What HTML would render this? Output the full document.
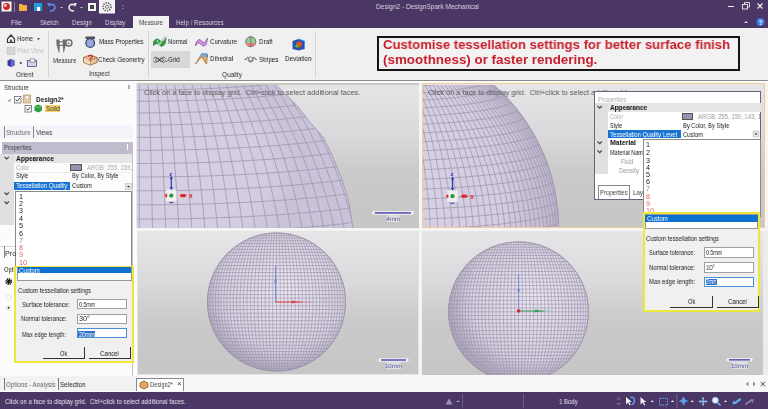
<!DOCTYPE html><html><head><meta charset="utf-8"><style>
*{margin:0;padding:0;box-sizing:border-box}
html,body{width:768px;height:409px;overflow:hidden;background:#f5f5f5;position:relative}
#root{position:absolute;left:0;top:0;width:768px;height:409px;overflow:hidden}
.t{position:absolute;white-space:nowrap;font-family:"Liberation Sans",sans-serif;line-height:1;transform-origin:0 50%;will-change:transform}
.r{position:absolute}
svg{position:absolute;overflow:visible}
</style></head><body><div id="root">
<div class="r" style="left:0px;top:0px;width:768px;height:28.3px;background:#4a3766"></div>
<div class="t" style="left:376px;top:2.67px;font-size:7.4px;color:#ddd8e8;transform:scaleX(0.891);">Design2 - DesignSpark Mechanical</div>
<svg style="left:0px;top:0px" width="130" height="14" viewBox="0 0 130 14"><rect x="1.5" y="1.5" width="10" height="10" fill="#f4f4f4" stroke="#999" stroke-width=".6"/><circle cx="6.5" cy="6.5" r="3.4" fill="#d42020"/><path d="M4 6.5 A2.5 2.5 0 0 1 6.5 4 L6.5 6.5Z" fill="#fff"/><rect x="14" y="2" width="0.8" height="10" fill="#9a8fb0"/><path d="M19 4 h3 l1 1 h4 v6 h-8z" fill="#f0b040"/><rect x="34" y="3" width="8" height="8" fill="#1e9ee0"/><rect x="37" y="7" width="3" height="4" fill="#fff"/><path d="M49 5 q5 -2 6 2 q0 4 -5 4" stroke="#5a8ee8" stroke-width="1.6" fill="none"/><path d="M47 3 l3 0 l-1 4z" fill="#5a8ee8"/><path d="M60 7 l3 0 l-1.5 1.5z" fill="#ccc"/><path d="M75 5 q-5 -2 -6 2 q0 4 5 4" stroke="#e8e8e8" stroke-width="1.6" fill="none"/><path d="M77 3 l-3 0 l1 4z" fill="#e8e8e8"/><path d="M80 7 l3 0 l-1.5 1.5z" fill="#ccc"/><rect x="88" y="3" width="8" height="8" fill="#f4f4f4"/><rect x="90" y="5" width="4" height="4" fill="#444"/><rect x="99" y="0" width="16" height="13.5" fill="#f4f4f4"/><circle cx="107" cy="6.8" r="4" fill="none" stroke="#666" stroke-width="1.6" stroke-dasharray="1.4 1"/><circle cx="107" cy="6.8" r="1.6" fill="none" stroke="#666" stroke-width=".9"/><rect x="122.5" y="5" width="1" height="1" fill="#aaa"/><rect x="122.5" y="8" width="1" height="1" fill="#aaa"/></svg>
<svg style="left:720px;top:0px" width="48" height="30" viewBox="0 0 48 30"><rect x="8" y="6" width="6" height="1" fill="#eee"/><rect x="22.5" y="4.5" width="5" height="4.5" fill="none" stroke="#eee" stroke-width=".9"/><path d="M24.5 4.5 v-2 h5 v4.5 h-2" fill="none" stroke="#eee" stroke-width=".9"/><path d="M37.5 3.5 l5 5 M42.5 3.5 l-5 5" stroke="#eee" stroke-width="1.1"/><path d="M24 23 l2 -2 l2 2z" fill="#ddd"/><circle cx="40.5" cy="22" r="4" fill="#3a7de0"/><text x="40.5" y="24.6" font-size="6.5" fill="#fff" text-anchor="middle" font-family="Liberation Sans" font-weight="bold">?</text></svg>
<div class="r" style="left:133px;top:16px;width:36px;height:12.5px;background:#f2f2f2"></div>
<div class="t" style="left:10.8px;top:18.58px;font-size:7.6px;color:#ddd8e8;transform:scaleX(0.882);">File</div>
<div class="t" style="left:40.2px;top:18.58px;font-size:7.6px;color:#ddd8e8;transform:scaleX(0.801);">Sketch</div>
<div class="t" style="left:71.9px;top:18.58px;font-size:7.6px;color:#ddd8e8;transform:scaleX(0.837);">Design</div>
<div class="t" style="left:104.9px;top:18.58px;font-size:7.6px;color:#ddd8e8;transform:scaleX(0.815);">Display</div>
<div class="t" style="left:138.6px;top:18.58px;font-size:7.6px;color:#444;transform:scaleX(0.812);">Measure</div>
<div class="t" style="left:176.4px;top:18.58px;font-size:7.6px;color:#ddd8e8;transform:scaleX(0.817);">Help / Resources</div>
<div class="r" style="left:0px;top:28.3px;width:768px;height:51.5px;background:#f0f0f0"></div>
<div class="r" style="left:0px;top:79.6px;width:768px;height:1.4px;background:#8c8c8c"></div>
<div class="r" style="left:0px;top:81px;width:768px;height:2px;background:#fafafa"></div>
<div class="r" style="left:47.5px;top:31px;width:1px;height:47px;background:#d4d4d4"></div>
<div class="r" style="left:148.3px;top:31px;width:1px;height:47px;background:#d4d4d4"></div>
<div class="r" style="left:315.4px;top:31px;width:1px;height:47px;background:#d4d4d4"></div>
<div class="r" style="left:151px;top:51px;width:39px;height:16.5px;background:#d8d8d8"></div>
<svg style="left:0px;top:0px" width="320" height="80" viewBox="0 0 320 80"><path d="M7.5 39 l3.5 -4 l3.5 4 v3.5 h-7z" fill="#fff" stroke="#333" stroke-width="1.2"/><rect x="9.8" y="39.5" width="2.4" height="3" fill="#555"/><rect x="7" y="47.5" width="8" height="7" fill="#d8d8d8" stroke="#c0c0c0" stroke-width=".6"/><path d="M7.5 60.5 l3.5 -1.5 l3.5 1.5 v5 l-3.5 1.5 l-3.5 -1.5z" fill="#3c3ca0"/><path d="M11 59 l3.5 1.5 v5 l-3.5 1.5z" fill="#6a6ad0"/><circle cx="20.8" cy="63" r="1" fill="#333"/><rect x="27.5" y="60.5" width="9" height="6" fill="#c8d8e8" stroke="#556" stroke-width=".8"/><rect x="30" y="59" width="5" height="3" fill="#fff" stroke="#556" stroke-width=".6"/><path d="M37 38.3 l3 0 l-1.5 1.6z" fill="#333"/><path d="M56.3 39.6 h3.2 l.2 5.5 l-.2 7.4 l-.7 0 l-2.3 -7.4z" fill="#6e6e6e"/><path d="M62.6 39.6 h3.2 l-.2 5.8 l-1.6 7.1 l-.6 0 l-.6 -7.1z" fill="#6e6e6e"/><rect x="58.5" y="41.8" width="7.5" height="3.6" fill="none" stroke="#6e6e6e" stroke-width="1.1"/><circle cx="68.8" cy="42.9" r="3.1" fill="#f4f4f4" stroke="#6e6e6e" stroke-width="1.5"/><circle cx="68.5" cy="43.2" r=".9" fill="#6e6e6e"/><rect x="85.5" y="36.5" width="9.5" height="2.5" fill="#555"/><circle cx="90.2" cy="43" r="4.3" fill="#9aaae0" stroke="#3a4a78" stroke-width="1.3"/><path d="M83.5 57.5 l6.8 -2.6 l6.8 2.6 v5 l-6.8 2.6 l-6.8 -2.6z" fill="#e6c498" stroke="#8a5a30" stroke-width=".8"/><path d="M83.5 57.5 l6.8 2.6 l6.8 -2.6 M90.3 60.1 v5" stroke="#8a5a30" stroke-width=".7" fill="none"/><path d="M84 57.7 l6.3 2.4 v4.6 l-6.3 -2.4z" fill="#f0d8b8"/><text x="90.3" y="61" font-size="9.5" fill="#c81818" text-anchor="middle" font-family="Liberation Sans" font-weight="bold">?</text><path d="M153.5 41.5 q3 -4.5 6.2 -1.2 q3 3.2 6.4 -2.3 l-.8 5.5 q-3 4.5 -6.2 1.5 q-3 -3 -5.6 .8z" fill="#3a9a4a" stroke="#226a30" stroke-width=".6"/><path d="M157 40 l2.5 5 l3 -6" stroke="#a8e8a8" stroke-width="1.1" fill="none"/><path d="M162.5 39 l3.8 -2.5" stroke="#8090a8" stroke-width=".8"/><path d="M153.5 58.5 q2 -3 4 0 t4 0 t4 0 M153.5 61 q2 3 4 0 t4 0 t4 0" fill="none" stroke="#505050" stroke-width=".9"/><circle cx="157.5" cy="59.8" r="1.8" fill="none" stroke="#505050" stroke-width=".8"/><circle cx="161.5" cy="59.8" r="1.8" fill="none" stroke="#505050" stroke-width=".8"/><path d="M165.5 60.5 l1 1.2 l1 -1.6" stroke="#505050" stroke-width=".8" fill="none"/><path d="M195.5 44 q3 -7 6 -3 q3 4 6 -3 l-1 6 q-3 4 -6 0 q-3 -3 -5 2z" fill="#c890e0" stroke="#8a4aa0" stroke-width=".7"/><path d="M195.5 64 l6 -10 l6 3 v-3 l-1 10 l-5 -7z" fill="#e8a868" stroke="#a06030" stroke-width=".7"/><rect x="201" y="53" width="6" height="4" fill="#70a8d8"/><circle cx="250.8" cy="41.7" r="5" fill="#98d098" stroke="#606060" stroke-width=".9"/><path d="M246 43 h9.6 v2 q-4.8 3 -9.6 0z" fill="#e08080"/><path d="M250.8 36.7 v10" stroke="#606060" stroke-width=".7"/><path d="M244.5 59.5 h1.5 q1.6 -4.5 3.2 0 t3.2 0 t3.2 0 h1.2" fill="none" stroke="#555" stroke-width=".9"/><circle cx="250.6" cy="59.5" r="2.6" fill="none" stroke="#666" stroke-width=".7"/><path d="M292.5 41 l6 -2 l6 2 v8 l-6 1.5 l-6 -1.5z" fill="#2a50b0"/><circle cx="299" cy="44.5" r="3" fill="#e05020"/><circle cx="297" cy="46" r="1.8" fill="#40c040"/><path d="M298.5 39 l6 2 v8" fill="none" stroke="#40a0e0" stroke-width="1"/></svg>
<div class="t" style="left:16.7px;top:35.18px;font-size:7.6px;color:#222;transform:scaleX(0.784);">Home</div>
<div class="t" style="left:16.9px;top:47.08px;font-size:7.6px;color:#c4c4c4;transform:scaleX(0.793);">Plan View</div>
<div class="t" style="left:16.3px;top:70.58px;font-size:7.6px;color:#333;transform:scaleX(0.850);">Orient</div>
<div class="t" style="left:52.7px;top:56.88px;font-size:7.6px;color:#333;transform:scaleX(0.795);">Measure</div>
<div class="t" style="left:98.75px;top:38.48px;font-size:7.6px;color:#222;transform:scaleX(0.810);">Mass Properties</div>
<div class="t" style="left:98.4px;top:55.68px;font-size:7.6px;color:#222;transform:scaleX(0.814);">Check Geometry</div>
<div class="t" style="left:88.6px;top:70.48px;font-size:7.6px;color:#333;transform:scaleX(0.849);">Inspect</div>
<div class="t" style="left:168.3px;top:38.48px;font-size:7.6px;color:#222;transform:scaleX(0.796);">Normal</div>
<div class="t" style="left:168.3px;top:55.68px;font-size:7.6px;color:#222;transform:scaleX(0.815);">Grid</div>
<div class="t" style="left:210px;top:38.48px;font-size:7.6px;color:#222;transform:scaleX(0.812);">Curvature</div>
<div class="t" style="left:210px;top:55.48px;font-size:7.6px;color:#222;transform:scaleX(0.820);">Dihedral</div>
<div class="t" style="left:258.6px;top:38.48px;font-size:7.6px;color:#222;transform:scaleX(0.826);">Draft</div>
<div class="t" style="left:258.6px;top:55.78px;font-size:7.6px;color:#222;transform:scaleX(0.820);">Stripes</div>
<div class="t" style="left:285.3px;top:54.78px;font-size:7.6px;color:#222;transform:scaleX(0.833);">Deviation</div>
<div class="t" style="left:222.2px;top:70.68px;font-size:7.6px;color:#333;transform:scaleX(0.846);">Quality</div>
<div class="r" style="left:377px;top:35.5px;width:363px;height:35.5px;border:2px solid #141414;background:#f2f2f2"></div>
<div class="t" style="left:382.5px;top:37.73px;font-size:13.4px;color:#c8202e;font-weight:bold;transform:scaleX(0.980);">Customise tessellation settings for better surface finish</div>
<div class="t" style="left:382.5px;top:53.23px;font-size:13.4px;color:#c8202e;font-weight:bold;">(smoothness) or faster rendering.</div>
<div class="r" style="left:0px;top:83px;width:137px;height:309px;background:#fcfcfc"></div>
<div class="t" style="left:3.5px;top:84.07px;font-size:7.4px;color:#333;transform:scaleX(0.829);">Structure</div>
<div class="r" style="left:127.5px;top:84.5px;width:2px;height:4px;background:#b0b0b0"></div>
<svg style="left:0px;top:0px" width="137" height="140" viewBox="0 0 137 140"><path d="M7.5 101.5 l3 -3.2 v3.2z" fill="#999"/><rect x="14.5" y="96.5" width="6.5" height="6.5" fill="#fff" stroke="#555" stroke-width=".7"/><path d="M15.8 99.6 l1.5 1.6 l2.6 -3.2" stroke="#222" stroke-width=".9" fill="none"/><rect x="23.5" y="95" width="7" height="8" fill="#e8d0a0" stroke="#a08050" stroke-width=".6"/><circle cx="27" cy="97.5" r="2" fill="#fff" stroke="#888" stroke-width=".5"/><rect x="25" y="105.5" width="6.5" height="6.5" fill="#fff" stroke="#555" stroke-width=".7"/><path d="M26.3 108.6 l1.5 1.6 l2.6 -3.2" stroke="#222" stroke-width=".9" fill="none"/><path d="M34.5 106 l3.7 -1.5 l3.7 1.5 v4.8 l-3.7 1.6 l-3.7 -1.6z" fill="#2aa040"/><path d="M34.5 106 l3.7 1.5 l3.7 -1.5" stroke="#9ae0a0" stroke-width=".6" fill="none"/></svg>
<div class="t" style="left:35.5px;top:95.78px;font-size:8px;color:#222;font-weight:bold;transform:scaleX(0.806);">Design2*</div>
<div class="r" style="left:44.7px;top:104.7px;width:15.6px;height:7.3px;background:#f6d468"></div>
<div class="t" style="left:46px;top:104.77px;font-size:7.2px;color:#333;transform:scaleX(0.849);">Solid</div>
<div class="r" style="left:0px;top:125.3px;width:133px;height:13.4px;background:#f5f4fa"></div>
<div class="r" style="left:3.5px;top:126px;width:1px;height:12px;background:#888"></div>
<div class="r" style="left:32.6px;top:126px;width:1px;height:12px;background:#888"></div>
<div class="t" style="left:6px;top:128.87px;font-size:7.2px;color:#666;transform:scaleX(0.839);">Structure</div>
<div class="t" style="left:35.5px;top:128.87px;font-size:7.2px;color:#333;transform:scaleX(0.854);">Views</div>
<div class="r" style="left:1.5px;top:141.9px;width:131.5px;height:11.7px;background:#c0bcce"></div>
<div class="t" style="left:3.9px;top:144.07px;font-size:7.4px;color:#444;transform:scaleX(0.818);">Properties</div>
<div class="r" style="left:126.5px;top:144px;width:1.5px;height:6px;background:#fff"></div>
<div class="r" style="left:0px;top:153.6px;width:14px;height:71.5px;background:#e0e0e0"></div>
<div class="r" style="left:14px;top:153.6px;width:118.5px;height:9.2px;background:#e6e6e6"></div>
<div class="r" style="left:131.6px;top:141.9px;width:1.2px;height:234px;background:#c4c4c4"></div>
<svg style="left:0px;top:0px" width="137" height="210" viewBox="0 0 137 210"><path d="M4.5 156.8 l2.2 2.2 l2.2 -2.2" stroke="#444" stroke-width="1.1" fill="none"/><path d="M4.5 192.5 l2.2 2.2 l2.2 -2.2" stroke="#444" stroke-width="1.1" fill="none"/><path d="M4.5 201.5 l2.2 2.2 l2.2 -2.2" stroke="#444" stroke-width="1.1" fill="none"/></svg>
<div class="t" style="left:15.9px;top:154.58px;font-size:7.8px;color:#111;font-weight:bold;transform:scaleX(0.853);">Appearance</div>
<div class="t" style="left:15.9px;top:164.17px;font-size:7.2px;color:#aaa;transform:scaleX(0.773);">Color</div>
<div class="r" style="left:70.4px;top:164.2px;width:11.4px;height:7.1px;background:#9a90b0;border:.8px solid #555"></div>
<div class="t" style="left:86.7px;top:164.17px;font-size:7.2px;color:#aaa;transform:scaleX(0.830);">ARGB: 255, 159,</div>
<div class="r" style="left:14px;top:171.8px;width:118.5px;height:0.6px;background:#eee"></div>
<div class="t" style="left:15.9px;top:172.47px;font-size:7.2px;color:#222;transform:scaleX(0.775);">Style</div>
<div class="t" style="left:71.7px;top:172.47px;font-size:7.2px;color:#222;transform:scaleX(0.807);">By Color, By Style</div>
<div class="r" style="left:13.8px;top:181.9px;width:56.1px;height:7.8px;background:#1874d2"></div>
<div class="t" style="left:15.9px;top:182.27px;font-size:7.2px;color:#fff;transform:scaleX(0.829);">Tessellation Quality</div>
<div class="t" style="left:71.7px;top:182.27px;font-size:7.2px;color:#222;transform:scaleX(0.806);">Custom</div>
<svg style="left:0px;top:0px" width="137" height="200" viewBox="0 0 137 200"><rect x="125.5" y="183.5" width="6" height="6" fill="#e4e4e4" stroke="#aaa" stroke-width=".4"/><path d="M127 186 h3 l-1.5 1.5z" fill="#222"/></svg>
<div class="r" style="left:0px;top:245.5px;width:15px;height:0.8px;background:#d8d8d8"></div>
<div class="r" style="left:15px;top:191px;width:117.4px;height:80px;background:#fff;border:.8px solid #8a8a8a"></div>
<div class="t" style="left:18.5px;top:192.87px;font-size:7.2px;color:#222;">1</div>
<div class="t" style="left:18.5px;top:200.07px;font-size:7.2px;color:#222;">2</div>
<div class="t" style="left:18.5px;top:207.47px;font-size:7.2px;color:#222;">3</div>
<div class="t" style="left:18.5px;top:214.97px;font-size:7.2px;color:#222;">4</div>
<div class="t" style="left:18.5px;top:222.17px;font-size:7.2px;color:#222;">5</div>
<div class="t" style="left:18.5px;top:229.57px;font-size:7.2px;color:#222;">6</div>
<div class="t" style="left:18.5px;top:236.67px;font-size:7.2px;color:#888;">7</div>
<div class="t" style="left:18.5px;top:244.07px;font-size:7.2px;color:#e06464;">8</div>
<div class="t" style="left:18.5px;top:251.27px;font-size:7.2px;color:#e06464;">9</div>
<div class="t" style="left:18.5px;top:258.67px;font-size:7.2px;color:#e06464;">10</div>
<div class="r" style="left:3.6px;top:246px;width:1px;height:12px;background:#888"></div>
<div class="t" style="left:5px;top:249.67px;font-size:7.2px;color:#333;">Pro</div>
<div class="t" style="left:3.8px;top:265.77px;font-size:7.2px;color:#222;transform:scaleX(0.818);">Opti</div>
<svg style="left:0px;top:0px" width="20" height="320" viewBox="0 0 20 320"><circle cx="8.8" cy="281.6" r="2.6" fill="none" stroke="#111" stroke-width="1.8" stroke-dasharray="1.2 .8"/><circle cx="8.8" cy="281.6" r="1.8" fill="#111"/><circle cx="8.6" cy="297.3" r="2.3" fill="#fff" stroke="#d0d0d0" stroke-width=".6"/><circle cx="8.6" cy="307.8" r="2.3" fill="#fff" stroke="#d0d0d0" stroke-width=".6"/><circle cx="8.6" cy="307.8" r="1" fill="#333"/></svg>
<div class="r" style="left:14.3px;top:265.8px;width:119.7px;height:97px;border:2.2px solid #ece838;background:#f0f0f0"></div>
<div class="r" style="left:17.2px;top:267px;width:114.5px;height:14.1px;background:#fff;border:.6px solid #999"></div>
<div class="r" style="left:17.6px;top:267.3px;width:113.7px;height:6.2px;background:#1070d0"></div>
<div class="t" style="left:19px;top:266.87px;font-size:7.2px;color:#fff;transform:scaleX(0.847);">Custom</div>
<div class="t" style="left:18.1px;top:287.47px;font-size:7.2px;color:#222;transform:scaleX(0.815);">Custom tessellation settings</div>
<div class="t" style="left:21.9px;top:300.87px;font-size:7.2px;color:#222;transform:scaleX(0.818);">Surface tolerance:</div>
<div class="r" style="left:77.3px;top:299.2px;width:50.2px;height:10.100000000000023px;background:#fff;border:.8px solid #a0a0a0"></div>
<div class="t" style="left:79.2px;top:300.87px;font-size:7.2px;color:#222;transform:scaleX(0.736);">0.5mm</div>
<div class="t" style="left:21px;top:315.37px;font-size:7.2px;color:#222;transform:scaleX(0.806);">Normal tolerance:</div>
<div class="r" style="left:77.3px;top:313.5px;width:50.2px;height:10.5px;background:#fff;border:.8px solid #a0a0a0"></div>
<div class="t" style="left:79.2px;top:315.37px;font-size:7.2px;color:#222;transform:scaleX(0.992);">30&#176;</div>
<div class="t" style="left:21.9px;top:330.57px;font-size:7.2px;color:#222;transform:scaleX(0.795);">Max edge length:</div>
<div class="r" style="left:77.3px;top:327.8px;width:50.2px;height:10.5px;background:#fff;border:.8px solid #4a90d8"></div>
<div class="r" style="left:78.2px;top:331.1px;width:16.8px;height:6px;background:#3070c8"></div>
<div class="t" style="left:79.2px;top:330.57px;font-size:7.2px;color:#fff;transform:scaleX(0.790);">20mm</div>
<div class="r" style="left:43.4px;top:346.8px;width:41.2px;height:12.4px;border-right:1.4px solid #333;border-bottom:1.4px solid #333"></div>
<div class="t" style="left:59.9px;top:349.87px;font-size:7.2px;color:#222;transform:scaleX(0.804);">Ok</div>
<div class="r" style="left:88.5px;top:346.8px;width:42.5px;height:12.4px;border-right:1.4px solid #333;border-bottom:1.4px solid #333"></div>
<div class="t" style="left:99.5px;top:349.87px;font-size:7.2px;color:#222;transform:scaleX(0.839);">Cancel</div>
<div class="r" style="left:0px;top:376.4px;width:137px;height:15px;background:#f2f2f2"></div>
<div class="r" style="left:3.5px;top:378px;width:1px;height:12px;background:#777"></div>
<div class="r" style="left:57.6px;top:378px;width:1px;height:12px;background:#777"></div>
<div class="t" style="left:6.2px;top:380.97px;font-size:7.2px;color:#666;transform:scaleX(0.861);">Options - Analysis</div>
<div class="t" style="left:60.2px;top:380.97px;font-size:7.2px;color:#222;transform:scaleX(0.868);">Selection</div>
<div class="r" style="left:137px;top:83px;width:281.5px;height:145px;background:linear-gradient(#e6e6e8 0%,#dadadc 35%,#cacaca 62%,#c6c6c6 100%)"></div>
<div class="r" style="left:421.5px;top:83px;width:343.5px;height:145px;background:linear-gradient(#e6e6e8 0%,#dadadc 35%,#cacaca 62%,#c6c6c6 100%)"></div>
<div class="r" style="left:137px;top:231px;width:281.5px;height:144px;background:linear-gradient(#e6e6e8 0%,#dadadc 35%,#cacaca 62%,#c6c6c6 100%);border:1px solid #e4e4e4"></div>
<div class="r" style="left:422px;top:231px;width:341.2px;height:144.2px;background:linear-gradient(#e6e6e8 0%,#dadadc 35%,#cacaca 62%,#c6c6c6 100%)"></div>
<div class="r" style="left:763.2px;top:231px;width:4.8px;height:144px;background:#ececec"></div>
<svg style="left:137px;top:83px;overflow:hidden" width="281.5" height="145" viewBox="137 83 281.5 145"><defs><radialGradient id="gtl" cx="20%" cy="60%" r="60%"><stop offset="0" stop-color="#d8d0e2"/><stop offset=".75" stop-color="#d4cce0"/><stop offset="1" stop-color="#cac2d8"/></radialGradient><clipPath id="ctl"><path d="M100 60 L274.4 60 L274.4 83 L296 104.6 L310.3 122.5 L322.9 136.9 L331.9 154.9 L340.8 176.4 L348 198 L353.4 230 L100 240Z"/></clipPath></defs><path d="M100 60 L274.4 60 L274.4 83 L296 104.6 L310.3 122.5 L322.9 136.9 L331.9 154.9 L340.8 176.4 L348 198 L353.4 230 L100 240Z" fill="url(#gtl)"/><g clip-path="url(#ctl)"><path d="M353.1 237.3L367.0 235.5L379.8 233.5L391.4 231.4L401.7 229.3L410.8 227.1L418.6 224.8L425.0 222.4L430.0 220.0 M108.7 233.4L129.1 233.5L149.5 233.5L169.9 233.4L190.1 233.0L210.1 232.5L229.7 231.9L248.9 231.0L267.6 230.0L285.6 228.9L303.0 227.6L319.5 226.1L335.1 224.6L349.8 222.9L363.5 221.1L376.1 219.1L387.5 217.1L397.7 215.0L406.7 212.8L414.3 210.5L420.6 208.2L425.6 205.8L429.1 203.4 M109.3 218.9L129.3 219.1L149.3 219.1L169.3 218.9L189.2 218.6L208.8 218.1L228.1 217.4L247.0 216.6L265.3 215.6L283.0 214.5L300.0 213.2L316.3 211.8L331.6 210.3L346.1 208.6L359.5 206.8L371.8 204.9L383.1 202.9L393.1 200.9L401.9 198.7L409.4 196.5L415.6 194.2L420.4 191.9L423.9 189.5L426.0 187.1L426.7 184.7 M109.9 204.7L129.5 204.8L149.1 204.8L168.7 204.7L188.2 204.3L207.4 203.8L226.3 203.2L244.8 202.4L262.7 201.4L280.1 200.3L296.7 199.1L312.6 197.7L327.7 196.2L341.8 194.6L355.0 192.8L367.1 191.0L378.0 189.0L387.9 187.0L396.5 184.9L403.8 182.7L409.9 180.4L414.7 178.2L418.1 175.8L420.1 173.5L420.8 171.1 M110.6 190.6L129.7 190.8L148.9 190.8L168.0 190.6L187.0 190.3L205.8 189.8L224.3 189.2L242.3 188.4L259.8 187.5L276.8 186.4L293.1 185.2L308.6 183.8L323.3 182.3L337.1 180.8L349.9 179.0L361.8 177.2L372.5 175.3L382.1 173.3L390.5 171.3L397.7 169.1L403.6 167.0L408.3 164.7L411.6 162.5L413.6 160.2L414.3 157.9 M111.3 176.8L130.0 177.0L148.6 177.0L167.3 176.8L185.8 176.5L204.1 176.1L222.1 175.4L239.6 174.7L256.7 173.8L273.2 172.7L289.0 171.5L304.2 170.2L318.5 168.8L331.9 167.2L344.4 165.6L355.9 163.8L366.4 161.9L375.7 160.0L383.9 158.0L390.9 155.9L396.7 153.8L401.2 151.6L404.5 149.4L406.4 147.2L407.1 145.0 M112.1 163.3L130.2 163.5L148.4 163.5L166.5 163.3L184.4 163.0L202.2 162.6L219.6 162.0L236.7 161.2L253.3 160.3L269.3 159.3L284.7 158.2L299.4 156.9L313.3 155.5L326.3 154.0L338.5 152.4L349.6 150.7L359.8 148.9L368.9 147.0L376.8 145.0L383.6 143.0L389.2 141.0L393.6 138.8L396.8 136.7L398.7 134.5L399.3 132.4 M113.0 150.1L130.5 150.3L148.1 150.3L165.6 150.1L183.0 149.8L200.2 149.4L217.0 148.8L233.5 148.1L249.6 147.3L265.1 146.3L280.0 145.2L294.2 143.9L307.6 142.6L320.3 141.1L332.0 139.5L342.8 137.9L352.7 136.1L361.4 134.3L369.1 132.4L375.7 130.5L381.1 128.5L385.4 126.4L388.4 124.4L390.3 122.3L390.9 120.2 M113.9 137.3L130.8 137.4L147.8 137.4L164.7 137.3L181.4 137.0L198.0 136.6L214.3 136.0L230.2 135.3L245.7 134.5L260.6 133.6L275.0 132.5L288.7 131.3L301.6 130.0L313.8 128.6L325.1 127.1L335.6 125.5L345.0 123.8L353.5 122.0L360.9 120.2L367.3 118.3L372.5 116.4L376.6 114.4L379.5 112.5L381.3 110.4L381.9 108.4 M114.9 124.8L131.2 125.0L147.4 125.0L163.7 124.8L179.8 124.6L195.7 124.1L211.3 123.6L226.6 122.9L241.5 122.2L255.8 121.2L269.6 120.2L282.8 119.1L295.3 117.8L307.0 116.5L317.8 115.0L327.9 113.5L337.0 111.9L345.1 110.2L352.2 108.4L358.3 106.6L363.3 104.8L367.3 102.9L370.1 101.0L371.8 99.0L372.4 97.1 M116.0 112.8L131.5 112.9L147.1 112.9L162.6 112.8L178.0 112.5L193.2 112.1L208.2 111.6L222.8 111.0L237.1 110.2L250.8 109.3L264.0 108.3L276.6 107.2L288.5 106.0L299.7 104.7L310.1 103.4L319.7 101.9L328.4 100.4L336.2 98.7L343.0 97.1L348.8 95.3L353.7 93.6L357.4 91.8L360.1 89.9L361.8 88.1L362.3 86.2 M117.1 101.1L131.9 101.2L146.7 101.2L161.5 101.1L176.2 100.9L190.7 100.5L204.9 100.0L218.9 99.4L232.4 98.7L245.5 97.8L258.1 96.9L270.1 95.9L281.4 94.7L292.1 93.5L302.0 92.2L311.1 90.8L319.4 89.3L326.8 87.8L333.3 86.2L338.9 84.5L343.5 82.8L347.1 81.1L349.6 79.4L351.2 77.6L351.7 75.8 M118.3 89.9L132.3 90.1L146.3 90.1L160.3 89.9L174.3 89.7L188.0 89.4L201.5 88.9L214.7 88.3L227.6 87.6L240.0 86.8L251.9 86.0L263.3 85.0L274.0 83.9L284.1 82.7L293.5 81.5L302.2 80.1L310.0 78.7L317.1 77.3L323.2 75.8L328.5 74.2 M119.5 79.2L132.7 79.4L145.9 79.4L159.1 79.2L172.3 79.0L185.2 78.7L197.9 78.3L210.4 77.7L222.5 77.1L234.2 76.3L245.4 75.5L256.1 74.6 M128.8 121.6L129.5 104.4L130.3 88.1L131.0 72.8 M139.3 240.2L139.3 219.1L139.3 198.4L139.3 178.3L139.3 158.7L139.3 139.8L139.3 121.6L139.3 104.4L139.3 88.1L139.3 72.8 M152.7 240.2L152.3 219.1L151.9 198.4L151.5 178.2L151.0 158.6L150.4 139.7L149.8 121.6L149.1 104.4L148.3 88.1L147.6 72.8 M166.0 240.0L165.4 219.0L164.6 198.3L163.6 178.1L162.6 158.5L161.4 139.6L160.2 121.5L158.8 104.3L157.4 88.0L155.8 72.7 M179.3 239.9L178.3 218.8L177.1 198.1L175.7 178.0L174.2 158.4L172.5 139.5L170.6 121.4L168.5 104.1L166.3 87.9L164.0 72.6 M192.5 239.6L191.2 218.6L189.6 197.9L187.8 177.7L185.7 158.2L183.4 139.3L180.9 121.2L178.2 104.0L175.3 87.7L172.2 72.5 M205.6 239.3L204.0 218.2L202.0 197.6L199.7 177.4L197.1 157.9L194.3 139.0L191.1 120.9L187.7 103.7L184.1 87.5L180.3 72.3 M218.6 238.9L216.6 217.8L214.2 197.2L211.5 177.1L208.4 157.5L205.0 138.7L201.3 120.6L197.2 103.4L192.9 87.2L188.3 72.0 M231.4 238.4L229.1 217.4L226.3 196.8L223.2 176.6L219.6 157.1L215.6 138.3L211.3 120.3L206.6 103.1L201.5 86.9L196.2 71.7 M244.0 237.9L241.4 216.9L238.2 196.3L234.6 176.2L230.6 156.7L226.0 137.9L221.1 119.8L215.8 102.7L210.1 86.5L204.0 71.4 M256.4 237.3L253.5 216.3L250.0 195.7L245.9 175.6L241.4 156.1L236.3 137.4L230.8 119.4L224.8 102.3L218.4 86.1L211.7 71.0 M268.5 236.6L265.3 215.6L261.4 195.1L257.0 175.0L252.0 155.5L246.4 136.8L240.3 118.8L233.7 101.8L226.7 85.7L219.2 70.6 M283.3 257.2L280.4 235.9L276.9 214.9L272.7 194.4L267.8 174.3L262.3 154.9L256.2 136.2L249.6 118.3L242.4 101.2L234.7 85.2L226.5 70.2 M295.1 256.3L292.0 235.1L288.2 214.1L283.6 193.6L278.4 173.6L272.4 154.2L265.8 135.5L258.6 117.7L250.9 100.7L242.5 84.6L233.7 69.7 M306.6 255.5L303.3 234.2L299.2 213.3L294.3 192.8L288.6 172.8L282.3 153.5L275.2 134.8L267.5 117.0L259.1 100.0L250.1 84.1L240.7 69.1 M317.8 254.5L314.3 233.3L309.9 212.4L304.6 191.9L298.6 172.0L291.8 152.7L284.3 134.1L276.0 116.3L267.1 99.4L257.5 83.4L247.4 68.6 M328.6 253.5L324.8 232.3L320.2 211.4L314.6 191.0L308.3 171.1L301.0 151.8L293.0 133.2L284.3 115.5L274.8 98.6L264.7 82.8L254.0 68.0 M339.0 252.5L335.0 231.3L330.1 210.4L324.3 190.0L317.5 170.1L309.9 150.9L301.5 132.4L292.3 114.7L282.3 97.9L271.6 82.1L260.3 67.3 M349.0 251.4L344.8 230.2L339.7 209.4L333.5 189.0L326.5 169.2L318.5 150.0L309.6 131.5L299.9 113.8L289.4 97.1L278.2 81.3L266.3 66.6 M358.6 250.2L354.2 229.1L348.8 208.3L342.4 187.9L335.0 168.1L326.6 149.0L317.4 130.5L307.2 112.9L296.3 96.3L284.6 80.6L272.1 65.9 M367.7 249.0L363.2 227.9L357.5 207.1L350.9 186.8L343.1 167.0L334.4 147.9L324.8 129.5L314.2 112.0L302.8 95.4L290.6 79.8L277.6 65.2 M376.3 247.7L371.6 226.6L365.8 205.9L358.9 185.6L350.9 165.9L341.8 146.8L331.8 128.5L320.8 111.0L309.0 94.5L296.3 78.9L282.9 64.4 M384.5 246.4L379.6 225.3L373.6 204.6L366.4 184.4L358.1 164.7L348.8 145.7L338.4 127.5L327.1 110.0L314.8 93.5L301.7 78.1L287.8 63.6 M392.1 245.0L387.1 224.0L380.9 203.3L373.5 183.2L365.0 163.5L355.3 144.6L344.6 126.4L332.9 109.0L320.3 92.6L306.8 77.2L292.5 62.8 M399.3 243.7L394.1 222.6L387.7 202.0L380.1 181.9L371.3 162.3L361.4 143.4L350.4 125.2L338.4 107.9L325.4 91.6L311.5 76.2L296.8 62.0 M405.9 242.2L400.6 221.2L394.0 200.6L386.2 180.5L377.2 161.0L367.1 142.2L355.8 124.1L343.5 106.8L330.1 90.6L315.9 75.3L300.8 61.1 M411.9 240.8L406.5 219.8L399.8 199.2L391.8 179.2L382.6 159.7L372.2 140.9L360.7 122.9L348.1 105.7L334.5 89.5L319.9 74.3 M417.4 239.3L411.9 218.3L405.0 197.8L396.9 177.8L387.5 158.4L376.9 139.6L365.2 121.7L352.3 104.6L338.4 88.4L323.5 73.3 M422.3 237.7L416.7 216.8L409.7 196.4L401.5 176.4L391.9 157.0L381.1 138.3L369.1 120.4L356.1 103.4L341.9 87.3L326.8 72.3 M426.6 236.2L420.9 215.3L413.9 194.9L405.5 174.9L395.8 155.6L384.8 137.0L372.7 119.2L359.4 102.2L345.0 86.2L329.7 71.3 M430.4 234.6L424.6 213.8L417.4 193.4L408.9 173.5L399.1 154.2L388.0 135.7L375.7 117.9L362.2 101.0L347.7 85.1L332.1 70.2 M427.7 212.2L420.4 191.9L411.8 172.0L401.9 152.8L390.7 134.3L378.2 116.6L364.6 99.8L349.9 84.0L334.2 69.2 M430.2 210.7L422.9 190.3L414.2 170.5L404.2 151.4L392.9 132.9L380.3 115.3L366.6 98.6L351.8 82.8L335.9 68.1 M432.1 209.1L424.7 188.8L416.0 169.0L405.9 149.9L394.5 131.5L381.9 114.0L368.1 97.3L353.1 81.7L337.2 67.1 M433.3 207.5L426.0 187.2L417.2 167.5L407.0 148.5L395.6 130.2L382.9 112.7L369.1 96.1L354.1 80.5L338.0 66.0 M426.6 185.7L417.8 166.0L407.7 147.0L396.2 128.8L383.5 111.3L369.6 94.8L354.6 79.3L338.5 64.9 M426.7 184.1L417.9 164.5L407.7 145.6L396.3 127.4L383.5 110.0L369.6 93.6L354.6 78.2L338.5 63.8" stroke="#a098b0" stroke-width="0.8" fill="none"/></g><path d="M100 60 L274.4 60 L274.4 83 L296 104.6 L310.3 122.5 L322.9 136.9 L331.9 154.9 L340.8 176.4 L348 198 L353.4 230 L100 240Z" fill="none" stroke="#a89cb8" stroke-width="1.0"/></svg>
<svg style="left:423px;top:84.5px;overflow:hidden" width="341" height="142.5" viewBox="423 84.5 341 142.5"><defs><radialGradient id="gtr" cx="40%" cy="45%" r="60%"><stop offset="0" stop-color="#dcd4e6"/><stop offset=".75" stop-color="#d4cce0"/><stop offset="1" stop-color="#bcb4ca"/></radialGradient><clipPath id="ctr"><circle cx="368" cy="228" r="191.2"/></clipPath></defs><circle cx="368" cy="228" r="191.2" fill="url(#gtr)"/><g clip-path="url(#ctr)"><path d="M550.5 235.7L555.7 234.1L560.0 232.5L563.4 230.9L565.8 229.3L567.3 227.6L567.7 226.0 M479.3 235.7L490.5 234.7L501.1 233.6L511.1 232.5L520.4 231.2L529.0 229.9L536.7 228.6L543.7 227.1L549.8 225.6L555.0 224.1L559.3 222.5L562.6 220.9L565.0 219.2L566.5 217.6L567.0 215.9 M402.3 229.3L415.8 228.9L429.1 228.5L442.1 227.9L454.7 227.2L466.8 226.5L478.6 225.6L489.7 224.6L500.3 223.6L510.2 222.4L519.4 221.2L527.9 219.9L535.7 218.5L542.6 217.1L548.6 215.6L553.8 214.1L558.0 212.5L561.4 210.9L563.8 209.3L565.2 207.6L565.7 206.0 M402.0 219.2L415.4 218.8L428.5 218.4L441.4 217.8L453.9 217.2L466.0 216.4L477.6 215.5L488.6 214.6L499.1 213.5L508.9 212.4L518.1 211.1L526.5 209.9L534.1 208.5L541.0 207.1L547.0 205.6L552.1 204.1L556.3 202.5L559.6 200.9L562.0 199.3L563.4 197.7L563.9 196.1 M414.8 208.8L427.8 208.3L440.5 207.8L452.9 207.1L464.8 206.4L476.3 205.5L487.2 204.6L497.6 203.5L507.3 202.4L516.3 201.2L524.6 199.9L532.2 198.6L539.0 197.2L544.9 195.7L550.0 194.2L554.1 192.7L557.4 191.1L559.7 189.5L561.2 187.9L561.6 186.3 M414.2 198.8L427.0 198.4L439.5 197.8L451.7 197.2L463.4 196.4L474.7 195.6L485.5 194.6L495.7 193.6L505.3 192.5L514.2 191.3L522.4 190.1L529.8 188.7L536.5 187.3L542.3 185.9L547.3 184.4L551.5 182.9L554.7 181.4L557.0 179.8L558.4 178.2L558.8 176.6 M413.4 188.9L426.0 188.5L438.3 187.9L450.2 187.3L461.8 186.6L472.9 185.7L483.5 184.8L493.5 183.8L502.9 182.7L511.7 181.5L519.8 180.3L527.1 179.0L533.6 177.7L539.4 176.2L544.3 174.8L548.3 173.3L551.5 171.8L553.8 170.2L555.1 168.7L555.6 167.1 M412.5 179.1L424.8 178.7L436.9 178.2L448.6 177.6L459.9 176.8L470.8 176.0L481.2 175.1L491.0 174.1L500.2 173.1L508.8 171.9L516.7 170.7L523.9 169.4L530.3 168.1L535.9 166.7L540.7 165.3L544.7 163.8L547.8 162.4L550.0 160.8L551.4 159.3L551.8 157.8 M411.5 169.5L423.5 169.1L435.3 168.6L446.7 168.0L457.8 167.3L468.4 166.5L478.6 165.6L488.2 164.6L497.2 163.6L505.6 162.5L513.3 161.3L520.3 160.0L526.6 158.7L532.1 157.4L536.8 156.0L540.6 154.6L543.7 153.1L545.9 151.6L547.2 150.1L547.6 148.6 M410.3 160.1L422.1 159.7L433.5 159.2L444.7 158.6L455.5 157.9L465.8 157.1L475.7 156.2L485.0 155.3L493.8 154.3L502.0 153.2L509.5 152.0L516.3 150.8L522.4 149.6L527.8 148.3L532.4 146.9L536.1 145.5L539.1 144.1L541.2 142.6L542.5 141.2L542.9 139.7 M409.1 150.8L420.5 150.4L431.6 149.9L442.4 149.3L452.9 148.7L462.9 147.9L472.5 147.1L481.6 146.2L490.1 145.2L498.1 144.1L505.4 143.0L512.0 141.8L517.9 140.6L523.1 139.3L527.6 138.0L531.2 136.7L534.1 135.3L536.1 133.9L537.4 132.5L537.8 131.1 M407.7 141.8L418.7 141.4L429.5 140.9L440.0 140.3L450.1 139.7L459.8 139.0L469.1 138.2L477.9 137.3L486.1 136.3L493.8 135.3L500.9 134.2L507.3 133.1L513.0 131.9L518.0 130.7L522.3 129.4L525.9 128.1L528.6 126.8L530.6 125.4L531.8 124.0L532.2 122.7 M406.3 133.0L416.9 132.6L427.3 132.1L437.4 131.6L447.1 131.0L456.5 130.3L465.4 129.5L473.9 128.7L481.8 127.7L489.2 126.8L496.0 125.7L502.2 124.6L507.7 123.5L512.6 122.3L516.7 121.1L520.1 119.8L522.8 118.5L524.7 117.2L525.9 115.9L526.2 114.6 M414.9 124.1L424.9 123.6L434.6 123.1L443.9 122.5L452.9 121.9L461.5 121.1L469.6 120.3L477.2 119.4L484.3 118.5L490.9 117.5L496.8 116.4L502.1 115.3L506.7 114.2L510.7 113.0L514.0 111.8L516.5 110.6L518.4 109.3L519.5 108.0L519.9 106.8 M412.8 115.8L422.3 115.4L431.6 114.9L440.5 114.4L449.1 113.7L457.3 113.0L465.1 112.2L472.4 111.4L479.1 110.5L485.4 109.5L491.0 108.5L496.1 107.5L500.5 106.4L504.3 105.3L507.5 104.1L509.9 102.9L511.7 101.7L512.7 100.5L513.1 99.3 M410.6 107.9L419.7 107.5L428.5 107.0L437.0 106.5L445.1 105.9L452.9 105.2L460.3 104.5L467.2 103.7L473.7 102.8L479.6 101.9L485.0 101.0L489.8 100.0L494.0 98.9L497.6 97.9L500.6 96.8L502.9 95.6L504.6 94.5L505.6 93.4L505.9 92.2 M408.3 100.3L416.9 99.9L425.2 99.5L433.2 99.0L440.9 98.4L448.3 97.8L455.3 97.1L461.8 96.3L467.9 95.5L473.5 94.6L478.6 93.7L483.2 92.8L487.1 91.8L490.6 90.8L493.4 89.8L495.6 88.7L497.2 87.6L498.1 86.6L498.4 85.5 M413.9 92.7L421.7 92.3L429.3 91.8L436.5 91.3L443.5 90.7L450.0 90.0L456.2 89.3L461.9 88.5L467.2 87.7L472.0 86.9L476.2 86.0L480.0 85.1L483.2 84.1L485.8 83.2L487.9 82.2L489.4 81.1L490.3 80.1L490.6 79.1 M410.9 85.9L418.2 85.5L425.2 85.0L432.0 84.5L438.4 83.9L444.6 83.3L450.3 82.7L455.7 82.0L460.6 81.2L465.0 80.4L469.0 79.6L472.5 78.7L475.5 77.8L478.0 76.9L479.9 76.0 M414.5 79.0L421.0 78.6L427.3 78.1L433.3 77.6L438.9 77.0L444.2 76.4 M423.2 238.1L422.6 224.2L421.8 210.3L420.7 196.5L419.4 182.9L417.8 169.6L416.0 156.6L414.0 144.0 M430.8 237.8L430.2 223.9L429.3 210.0L428.0 196.2L426.5 182.7L424.7 169.4L422.7 156.4L420.3 143.8L417.7 131.7L414.9 120.0 M438.3 237.5L437.6 223.6L436.6 209.7L435.2 195.9L433.5 182.4L431.5 169.1L429.2 156.1L426.6 143.5L423.7 131.4L420.5 119.8L417.1 108.7L413.4 98.3 M445.7 237.2L445.0 223.2L443.8 209.3L442.3 195.6L440.5 182.1L438.2 168.8L435.7 155.8L432.8 143.2L429.6 131.1L426.1 119.5L422.3 108.5L418.2 98.1L413.9 88.3 M453.0 236.8L452.2 222.8L450.9 209.0L449.3 195.2L447.2 181.7L444.8 168.4L442.0 155.5L438.9 142.9L435.4 130.8L431.5 119.2L427.4 108.2L422.9 97.8L418.2 88.1L413.3 79.1 M460.2 236.3L459.3 222.4L457.9 208.6L456.1 194.8L453.9 181.3L451.3 168.0L448.2 155.1L444.8 142.6L441.0 130.5L436.9 118.9L432.4 107.9L427.6 97.5L422.5 87.8L417.1 78.9L411.5 70.6 M467.2 235.9L466.2 222.0L464.7 208.1L462.8 194.4L460.4 180.9L457.6 167.6L454.3 154.7L450.7 142.2L446.6 130.1L442.1 118.6L437.3 107.6L432.1 97.2L426.6 87.6L420.8 78.6L414.8 70.4 M474.0 235.4L473.0 221.5L471.4 207.6L469.4 193.9L466.8 180.4L463.8 167.2L460.3 154.3L456.4 141.8L452.0 129.7L447.2 118.2L442.0 107.2L436.5 96.9L430.6 87.3L424.5 78.3L418.0 70.2 M481.2 248.8L480.7 234.9L479.6 221.0L477.9 207.1L475.7 193.4L473.0 179.9L469.8 166.7L466.1 153.8L461.9 141.3L457.3 129.3L452.2 117.8L446.7 106.9L440.8 96.6L434.6 87.0L428.0 78.1L421.2 69.9 M487.7 248.2L487.1 234.3L486.0 220.4L484.2 206.6L481.9 192.9L479.1 179.4L475.7 166.2L471.8 153.3L467.3 140.9L462.4 128.9L457.0 117.4L451.2 106.5L445.0 96.2L438.4 86.6L431.5 77.8L424.2 69.7 M494.1 247.6L493.4 233.7L492.2 219.8L490.4 206.0L488.0 192.3L485.0 178.8L481.4 165.7L477.2 152.8L472.6 140.4L467.4 128.4L461.7 116.9L455.6 106.1L449.1 95.8L442.1 86.3L434.8 77.5L427.2 69.4 M500.2 247.0L499.5 233.1L498.3 219.2L496.3 205.4L493.8 191.7L490.6 178.3L486.9 165.1L482.5 152.3L477.7 139.9L472.2 127.9L466.3 116.5L459.9 105.6L453.0 95.4L445.7 85.9L438.1 77.1L430.1 69.1 M506.1 246.4L505.4 232.5L504.1 218.6L502.1 204.8L499.4 191.1L496.1 177.7L492.2 164.5L487.7 151.7L482.6 139.3L476.9 127.4L470.7 116.0L464.0 105.2L456.8 95.0L449.2 85.5L441.2 76.8L432.9 68.8 M511.8 245.7L511.1 231.8L509.7 217.9L507.6 204.1L504.8 190.5L501.4 177.0L497.3 163.9L492.6 151.1L487.3 138.8L481.4 126.9L474.9 115.5L467.9 104.7L460.5 94.6L452.6 85.1L444.2 76.4 M517.2 245.0L516.5 231.1L515.1 217.2L512.9 203.4L510.0 189.8L506.5 176.4L502.2 163.3L497.3 150.5L491.8 138.2L485.7 126.3L479.0 115.0L471.7 104.2L464.0 94.1L455.8 84.7L447.1 76.1 M522.5 244.3L521.7 230.4L520.2 216.5L518.0 202.7L515.0 189.1L511.3 175.7L506.9 162.6L501.8 149.9L496.1 137.6L489.8 125.7L482.9 114.4L475.4 103.7L467.3 93.7L458.8 84.3L449.9 75.7 M527.4 243.5L526.6 229.6L525.1 215.7L522.8 202.0L519.7 188.4L515.9 175.0L511.4 161.9L506.1 149.2L500.2 136.9L493.7 125.1L486.5 113.9L478.8 103.2L470.5 93.2L461.8 83.8L452.5 75.3 M532.1 242.7L531.3 228.8L529.7 215.0L527.4 201.2L524.2 187.6L520.3 174.3L515.6 161.2L510.2 148.6L504.2 136.3L497.4 124.5L490.0 113.3L482.1 102.7L473.6 92.7L464.5 83.4L455.0 74.9 M536.6 241.9L535.8 228.0L534.1 214.2L531.7 200.4L528.4 186.9L524.4 173.5L519.6 160.5L514.1 147.9L507.8 135.6L500.9 123.9L493.4 112.7L485.2 102.1L476.4 92.2L467.1 82.9L457.4 74.4 M540.7 241.1L539.9 227.2L538.2 213.4L535.7 199.6L532.4 186.1L528.3 172.8L523.4 159.8L517.7 147.1L511.3 135.0L504.2 123.2L496.5 112.1L488.1 101.5L479.1 91.6L469.6 82.4L459.6 74.0 M544.6 240.3L543.8 226.4L542.1 212.6L539.5 198.8L536.1 185.3L531.9 172.0L526.9 159.0L521.1 146.4L514.5 134.3L507.3 122.6L499.4 111.5L490.8 100.9L481.6 91.1L471.9 81.9L461.7 73.5 M548.3 239.4L547.4 225.5L545.6 211.7L543.0 198.0L539.5 184.5L535.2 171.2L530.1 158.3L524.2 145.7L517.5 133.5L510.1 121.9L502.0 110.8L493.3 100.4L483.9 90.5L474.0 81.4L463.6 73.1 M551.6 238.5L550.7 224.7L548.9 210.8L546.2 197.2L542.7 183.6L538.3 170.4L533.1 157.5L527.1 144.9L520.3 132.8L512.7 121.2L504.5 110.2L495.6 99.7L486.1 90.0L476.0 80.9L465.3 72.6 M554.6 237.6L553.7 223.8L551.9 210.0L549.2 196.3L545.6 182.8L541.1 169.6L535.8 156.7L529.7 144.1L522.8 132.1L515.1 120.5L506.8 109.5L497.7 99.1L488.0 89.4L477.7 80.4L466.9 72.2 M557.3 236.7L556.4 222.9L554.6 209.1L551.8 195.4L548.2 181.9L543.6 168.7L538.3 155.9L532.1 143.4L525.1 131.3L517.3 119.8L508.8 108.8L499.6 98.5L489.8 88.8L479.4 79.9L468.4 71.7 M559.7 235.8L558.8 222.0L556.9 208.2L554.2 194.5L550.5 181.1L545.9 167.9L540.4 155.0L534.2 142.6L527.1 130.6L519.2 119.1L510.6 108.2L501.3 97.9L491.3 88.2L480.8 79.3L469.7 71.2 M561.9 248.8L561.9 234.9L560.9 221.0L559.0 207.3L556.2 193.6L552.5 180.2L547.8 167.0L542.3 154.2L536.0 141.8L528.8 129.8L520.9 118.3L512.2 107.5L502.7 97.2L492.7 87.6L482.0 78.8L470.8 70.7 M563.7 247.8L563.7 234.0L562.7 220.1L560.8 206.3L558.0 192.7L554.2 179.3L549.5 166.2L544.0 153.4L537.5 141.0L530.3 129.0L522.3 117.6L513.5 106.8L504.0 96.6L493.8 87.0L483.1 78.2L471.7 70.2 M565.1 246.9L565.1 233.0L564.2 219.2L562.3 205.4L559.4 191.8L555.6 178.4L550.9 165.3L545.3 152.5L538.8 140.1L531.5 128.2L523.4 116.9L514.6 106.1L505.0 95.9L494.8 86.4L483.9 77.7L472.5 69.7 M566.3 245.9L566.3 232.1L565.3 218.2L563.4 204.5L560.5 190.9L556.7 177.5L552.0 164.4L546.3 151.7L539.8 139.3L532.5 127.5L524.4 116.1L515.5 105.4L505.8 95.3L495.5 85.8L484.6 77.1L473.1 69.2 M567.1 245.0L567.1 231.1L566.2 217.3L564.2 203.5L561.3 189.9L557.5 176.6L552.8 163.5L547.1 150.8L540.6 138.5L533.2 126.7L525.0 115.4L516.1 104.7L506.4 94.6L496.1 85.2L485.1 76.6L473.6 68.7 M567.7 244.0L567.7 230.2L566.7 216.3L564.8 202.6L561.9 189.0L558.0 175.7L553.2 162.6L547.6 149.9L541.0 137.7L533.6 125.9L525.4 114.6L516.5 103.9L506.8 93.9L496.4 84.6L485.4 76.0 M567.9 243.1L567.9 229.2L566.9 215.4L565.0 201.6L562.1 188.1L558.2 174.8L553.4 161.7L547.8 149.1L541.2 136.8L533.8 125.1L525.6 113.9L516.6 103.2L506.9 93.3L496.6 84.0L485.6 75.4 M561.9 187.2L558.1 173.8L553.3 160.8L547.6 148.2L541.1 136.0L533.7 124.3L525.5 113.1L516.5 102.5L506.8 92.6L496.5 83.4L485.5 74.9" stroke="#9c94ac" stroke-width="0.7" fill="none"/></g><circle cx="368" cy="228" r="190.7" fill="none" stroke="#a89cb8" stroke-width="1.0"/></svg>
<div class="r" style="left:421.5px;top:83px;width:343.5px;height:145px;border:1.7px solid #f2cc94"></div>
<div class="r" style="left:137px;top:83.2px;width:281.5px;height:1.4px;background:#cacac4"></div>
<div class="r" style="left:136.2px;top:83.2px;width:1px;height:145px;background:#e8e8e8"></div>
<svg style="left:138px;top:232px;overflow:hidden" width="280" height="142" viewBox="138 232 280 142"><defs><radialGradient id="gbl" cx="55%" cy="40%" r="60%"><stop offset="0" stop-color="#ebe6f0"/><stop offset=".75" stop-color="#d8d2e2"/><stop offset="1" stop-color="#b4acc0"/></radialGradient><clipPath id="cbl"><circle cx="276.5" cy="302" r="69.5"/></clipPath></defs><circle cx="276.5" cy="302" r="69.5" fill="url(#gbl)"/><g clip-path="url(#cbl)"><path d="M237.5 380.9L237.6 380.9L237.9 380.9L238.4 380.9L239.0 380.9L239.9 380.9L240.9 380.9L242.1 380.9L243.4 380.9L245.0 380.9L246.6 380.9L248.5 380.9L250.4 380.9L252.5 380.9L254.7 380.9L257.0 380.9L259.4 380.9L261.9 380.9L264.5 380.9L267.1 380.9L269.7 380.9L272.4 380.9L275.1 380.9L277.9 380.9L280.6 380.9L283.3 380.9L285.9 380.9L288.5 380.9L291.1 380.9L293.6 380.9L296.0 380.9L298.3 380.9L300.5 380.9L302.6 380.9L304.5 380.9L306.4 380.9L308.0 380.9L309.6 380.9L310.9 380.9L312.1 380.9L313.1 380.9L314.0 380.9L314.6 380.9L315.1 380.9L315.4 380.9L315.5 380.9 M234.2 379.2L234.3 379.2L234.6 379.2L235.1 379.2L235.8 379.2L236.7 379.2L237.8 379.2L239.1 379.2L240.6 379.2L242.3 379.2L244.1 379.2L246.1 379.2L248.2 379.2L250.4 379.2L252.8 379.2L255.3 379.2L257.9 379.2L260.6 379.2L263.4 379.2L266.3 379.2L269.1 379.2L272.1 379.2L275.0 379.2L278.0 379.2L280.9 379.2L283.9 379.2L286.7 379.2L289.6 379.2L292.4 379.2L295.1 379.2L297.7 379.2L300.2 379.2L302.6 379.2L304.8 379.2L306.9 379.2L308.9 379.2L310.7 379.2L312.4 379.2L313.9 379.2L315.2 379.2L316.3 379.2L317.2 379.2L317.9 379.2L318.4 379.2L318.7 379.2L318.8 379.2 M230.9 377.3L231.0 377.3L231.4 377.3L231.9 377.3L232.7 377.3L233.7 377.3L234.9 377.3L236.2 377.3L237.8 377.3L239.6 377.3L241.6 377.3L243.7 377.3L246.0 377.3L248.4 377.3L251.0 377.3L253.7 377.3L256.5 377.3L259.4 377.3L262.4 377.3L265.5 377.3L268.6 377.3L271.7 377.3L274.9 377.3L278.1 377.3L281.3 377.3L284.4 377.3L287.5 377.3L290.6 377.3L293.6 377.3L296.5 377.3L299.3 377.3L302.0 377.3L304.6 377.3L307.0 377.3L309.3 377.3L311.4 377.3L313.4 377.3L315.2 377.3L316.8 377.3L318.1 377.3L319.3 377.3L320.3 377.3L321.1 377.3L321.6 377.3L322.0 377.3L322.1 377.3 M227.7 375.3L227.9 375.3L228.2 375.3L228.8 375.3L229.6 375.3L230.7 375.3L232.0 375.3L233.4 375.3L235.1 375.3L237.1 375.3L239.1 375.3L241.4 375.3L243.9 375.3L246.5 375.3L249.2 375.3L252.1 375.3L255.1 375.3L258.2 375.3L261.4 375.3L264.7 375.3L268.0 375.3L271.4 375.3L274.8 375.3L278.2 375.3L281.6 375.3L285.0 375.3L288.3 375.3L291.6 375.3L294.8 375.3L297.9 375.3L300.9 375.3L303.8 375.3L306.5 375.3L309.1 375.3L311.6 375.3L313.9 375.3L315.9 375.3L317.9 375.3L319.6 375.3L321.0 375.3L322.3 375.3L323.4 375.3L324.2 375.3L324.8 375.3L325.1 375.3L325.3 375.3 M224.7 373.1L224.8 373.1L225.2 373.1L225.8 373.1L226.7 373.1L227.8 373.1L229.1 373.1L230.7 373.1L232.5 373.1L234.6 373.1L236.8 373.1L239.2 373.1L241.8 373.1L244.6 373.1L247.5 373.1L250.6 373.1L253.8 373.1L257.1 373.1L260.5 373.1L264.0 373.1L267.5 373.1L271.1 373.1L274.7 373.1L278.3 373.1L281.9 373.1L285.5 373.1L289.0 373.1L292.5 373.1L295.9 373.1L299.2 373.1L302.4 373.1L305.5 373.1L308.4 373.1L311.2 373.1L313.8 373.1L316.2 373.1L318.4 373.1L320.5 373.1L322.3 373.1L323.9 373.1L325.2 373.1L326.3 373.1L327.2 373.1L327.8 373.1L328.2 373.1L328.3 373.1 M221.7 370.8L221.8 370.8L222.2 370.8L222.9 370.8L223.8 370.8L225.0 370.8L226.4 370.8L228.1 370.8L230.0 370.8L232.1 370.8L234.5 370.8L237.1 370.8L239.8 370.8L242.7 370.8L245.8 370.8L249.1 370.8L252.5 370.8L256.0 370.8L259.6 370.8L263.2 370.8L267.0 370.8L270.8 370.8L274.6 370.8L278.4 370.8L282.2 370.8L286.0 370.8L289.8 370.8L293.4 370.8L297.0 370.8L300.5 370.8L303.9 370.8L307.2 370.8L310.3 370.8L313.2 370.8L315.9 370.8L318.5 370.8L320.9 370.8L323.0 370.8L324.9 370.8L326.6 370.8L328.0 370.8L329.2 370.8L330.1 370.8L330.8 370.8L331.2 370.8L331.3 370.8 M218.8 368.4L218.9 368.4L219.3 368.4L220.0 368.4L221.0 368.4L222.2 368.4L223.8 368.4L225.5 368.4L227.5 368.4L229.8 368.4L232.3 368.4L235.0 368.4L237.9 368.4L241.0 368.4L244.2 368.4L247.6 368.4L251.2 368.4L254.9 368.4L258.7 368.4L262.5 368.4L266.5 368.4L270.5 368.4L274.5 368.4L278.5 368.4L282.5 368.4L286.5 368.4L290.5 368.4L294.3 368.4L298.1 368.4L301.8 368.4L305.4 368.4L308.8 368.4L312.0 368.4L315.1 368.4L318.0 368.4L320.7 368.4L323.2 368.4L325.5 368.4L327.5 368.4L329.2 368.4L330.8 368.4L332.0 368.4L333.0 368.4L333.7 368.4L334.1 368.4L334.2 368.4 M216.0 365.9L216.1 365.9L216.6 365.9L217.3 365.9L218.3 365.9L219.6 365.9L221.2 365.9L223.1 365.9L225.2 365.9L227.5 365.9L230.1 365.9L233.0 365.9L236.0 365.9L239.2 365.9L242.7 365.9L246.2 365.9L250.0 365.9L253.8 365.9L257.8 365.9L261.9 365.9L266.0 365.9L270.2 365.9L274.4 365.9L278.6 365.9L282.8 365.9L287.0 365.9L291.1 365.9L295.2 365.9L299.2 365.9L303.0 365.9L306.8 365.9L310.3 365.9L313.8 365.9L317.0 365.9L320.0 365.9L322.9 365.9L325.5 365.9L327.8 365.9L329.9 365.9L331.8 365.9L333.4 365.9L334.7 365.9L335.7 365.9L336.4 365.9L336.9 365.9L337.0 365.9 M213.3 363.2L213.5 363.2L213.9 363.2L214.7 363.2L215.8 363.2L217.1 363.2L218.8 363.2L220.7 363.2L222.9 363.2L225.4 363.2L228.1 363.2L231.0 363.2L234.2 363.2L237.6 363.2L241.2 363.2L244.9 363.2L248.8 363.2L252.8 363.2L257.0 363.2L261.2 363.2L265.5 363.2L269.9 363.2L274.3 363.2L278.7 363.2L283.1 363.2L287.5 363.2L291.8 363.2L296.0 363.2L300.2 363.2L304.2 363.2L308.1 363.2L311.8 363.2L315.4 363.2L318.8 363.2L322.0 363.2L324.9 363.2L327.6 363.2L330.1 363.2L332.3 363.2L334.2 363.2L335.9 363.2L337.2 363.2L338.3 363.2L339.1 363.2L339.5 363.2L339.7 363.2 M210.7 360.5L210.9 360.5L211.4 360.5L212.2 360.5L213.3 360.5L214.7 360.5L216.4 360.5L218.4 360.5L220.7 360.5L223.3 360.5L226.1 360.5L229.2 360.5L232.5 360.5L236.0 360.5L239.7 360.5L243.6 360.5L247.7 360.5L251.9 360.5L256.2 360.5L260.6 360.5L265.1 360.5L269.6 360.5L274.2 360.5L278.8 360.5L283.4 360.5L287.9 360.5L292.4 360.5L296.8 360.5L301.1 360.5L305.3 360.5L309.4 360.5L313.3 360.5L317.0 360.5L320.5 360.5L323.8 360.5L326.9 360.5L329.7 360.5L332.3 360.5L334.6 360.5L336.6 360.5L338.3 360.5L339.7 360.5L340.8 360.5L341.6 360.5L342.1 360.5L342.3 360.5 M208.3 357.6L208.5 357.6L209.0 357.6L209.8 357.6L210.9 357.6L212.4 357.6L214.2 357.6L216.3 357.6L218.7 357.6L221.3 357.6L224.3 357.6L227.4 357.6L230.9 357.6L234.5 357.6L238.4 357.6L242.4 357.6L246.6 357.6L251.0 357.6L255.4 357.6L260.0 357.6L264.7 357.6L269.4 357.6L274.1 357.6L278.9 357.6L283.6 357.6L288.3 357.6L293.0 357.6L297.6 357.6L302.0 357.6L306.4 357.6L310.6 357.6L314.6 357.6L318.5 357.6L322.1 357.6L325.6 357.6L328.7 357.6L331.7 357.6L334.3 357.6L336.7 357.6L338.8 357.6L340.6 357.6L342.1 357.6L343.2 357.6L344.0 357.6L344.5 357.6L344.7 357.6 M206.0 354.7L206.2 354.7L206.7 354.7L207.5 354.7L208.7 354.7L210.2 354.7L212.1 354.7L214.2 354.7L216.7 354.7L219.5 354.7L222.5 354.7L225.8 354.7L229.3 354.7L233.1 354.7L237.1 354.7L241.2 354.7L245.6 354.7L250.1 354.7L254.7 354.7L259.4 354.7L264.3 354.7L269.1 354.7L274.0 354.7L279.0 354.7L283.9 354.7L288.7 354.7L293.6 354.7L298.3 354.7L302.9 354.7L307.4 354.7L311.8 354.7L315.9 354.7L319.9 354.7L323.7 354.7L327.2 354.7L330.5 354.7L333.5 354.7L336.3 354.7L338.8 354.7L340.9 354.7L342.8 354.7L344.3 354.7L345.5 354.7L346.3 354.7L346.8 354.7L347.0 354.7 M203.8 351.6L204.0 351.6L204.5 351.6L205.4 351.6L206.6 351.6L208.2 351.6L210.1 351.6L212.3 351.6L214.8 351.6L217.7 351.6L220.8 351.6L224.2 351.6L227.9 351.6L231.7 351.6L235.8 351.6L240.2 351.6L244.6 351.6L249.3 351.6L254.0 351.6L258.9 351.6L263.9 351.6L268.9 351.6L274.0 351.6L279.0 351.6L284.1 351.6L289.1 351.6L294.1 351.6L299.0 351.6L303.7 351.6L308.4 351.6L312.8 351.6L317.2 351.6L321.3 351.6L325.1 351.6L328.8 351.6L332.2 351.6L335.3 351.6L338.2 351.6L340.7 351.6L342.9 351.6L344.8 351.6L346.4 351.6L347.6 351.6L348.5 351.6L349.0 351.6L349.2 351.6 M201.7 348.4L201.9 348.4L202.5 348.4L203.4 348.4L204.6 348.4L206.3 348.4L208.2 348.4L210.5 348.4L213.1 348.4L216.0 348.4L219.2 348.4L222.7 348.4L226.5 348.4L230.5 348.4L234.7 348.4L239.1 348.4L243.7 348.4L248.5 348.4L253.4 348.4L258.4 348.4L263.5 348.4L268.7 348.4L273.9 348.4L279.1 348.4L284.3 348.4L289.5 348.4L294.6 348.4L299.6 348.4L304.5 348.4L309.3 348.4L313.9 348.4L318.3 348.4L322.5 348.4L326.5 348.4L330.3 348.4L333.8 348.4L337.0 348.4L339.9 348.4L342.5 348.4L344.8 348.4L346.7 348.4L348.4 348.4L349.6 348.4L350.5 348.4L351.1 348.4L351.3 348.4 M199.8 345.2L200.0 345.2L200.6 345.2L201.5 345.2L202.8 345.2L204.5 345.2L206.5 345.2L208.8 345.2L211.5 345.2L214.5 345.2L217.8 345.2L221.4 345.2L225.2 345.2L229.3 345.2L233.6 345.2L238.2 345.2L242.9 345.2L247.8 345.2L252.8 345.2L258.0 345.2L263.2 345.2L268.5 345.2L273.8 345.2L279.2 345.2L284.5 345.2L289.8 345.2L295.0 345.2L300.2 345.2L305.2 345.2L310.1 345.2L314.8 345.2L319.4 345.2L323.7 345.2L327.8 345.2L331.6 345.2L335.2 345.2L338.5 345.2L341.5 345.2L344.2 345.2L346.5 345.2L348.5 345.2L350.2 345.2L351.5 345.2L352.4 345.2L353.0 345.2L353.2 345.2 M198.1 341.9L198.2 341.9L198.8 341.9L199.8 341.9L201.1 341.9L202.8 341.9L204.8 341.9L207.2 341.9L210.0 341.9L213.0 341.9L216.4 341.9L220.1 341.9L224.0 341.9L228.2 341.9L232.6 341.9L237.3 341.9L242.1 341.9L247.1 341.9L252.3 341.9L257.5 341.9L262.9 341.9L268.3 341.9L273.8 341.9L279.2 341.9L284.7 341.9L290.1 341.9L295.5 341.9L300.7 341.9L305.9 341.9L310.9 341.9L315.7 341.9L320.4 341.9L324.8 341.9L329.0 341.9L332.9 341.9L336.6 341.9L340.0 341.9L343.0 341.9L345.8 341.9L348.2 341.9L350.2 341.9L351.9 341.9L353.2 341.9L354.2 341.9L354.8 341.9L354.9 341.9 M196.4 338.5L196.6 338.5L197.2 338.5L198.2 338.5L199.5 338.5L201.3 338.5L203.3 338.5L205.8 338.5L208.6 338.5L211.7 338.5L215.2 338.5L218.9 338.5L222.9 338.5L227.2 338.5L231.7 338.5L236.5 338.5L241.4 338.5L246.5 338.5L251.8 338.5L257.1 338.5L262.6 338.5L268.1 338.5L273.7 338.5L279.3 338.5L284.9 338.5L290.4 338.5L295.9 338.5L301.2 338.5L306.5 338.5L311.6 338.5L316.5 338.5L321.3 338.5L325.8 338.5L330.1 338.5L334.1 338.5L337.8 338.5L341.3 338.5L344.4 338.5L347.2 338.5L349.7 338.5L351.7 338.5L353.5 338.5L354.8 338.5L355.8 338.5L356.4 338.5L356.6 338.5 M194.9 335.0L195.1 335.0L195.7 335.0L196.7 335.0L198.1 335.0L199.9 335.0L202.0 335.0L204.5 335.0L207.3 335.0L210.5 335.0L214.0 335.0L217.8 335.0L221.9 335.0L226.3 335.0L230.9 335.0L235.7 335.0L240.7 335.0L245.9 335.0L251.3 335.0L256.8 335.0L262.3 335.0L268.0 335.0L273.7 335.0L279.3 335.0L285.0 335.0L290.7 335.0L296.2 335.0L301.7 335.0L307.1 335.0L312.3 335.0L317.3 335.0L322.1 335.0L326.7 335.0L331.1 335.0L335.2 335.0L339.0 335.0L342.5 335.0L345.7 335.0L348.5 335.0L351.0 335.0L353.1 335.0L354.9 335.0L356.3 335.0L357.3 335.0L357.9 335.0L358.1 335.0 M193.6 331.5L193.8 331.5L194.4 331.5L195.4 331.5L196.8 331.5L198.6 331.5L200.8 331.5L203.3 331.5L206.2 331.5L209.4 331.5L213.0 331.5L216.9 331.5L221.0 331.5L225.5 331.5L230.1 331.5L235.0 331.5L240.2 331.5L245.4 331.5L250.9 331.5L256.4 331.5L262.1 331.5L267.8 331.5L273.6 331.5L279.4 331.5L285.2 331.5L290.9 331.5L296.6 331.5L302.1 331.5L307.6 331.5L312.8 331.5L318.0 331.5L322.9 331.5L327.5 331.5L332.0 331.5L336.1 331.5L340.0 331.5L343.6 331.5L346.8 331.5L349.7 331.5L352.2 331.5L354.4 331.5L356.2 331.5L357.6 331.5L358.6 331.5L359.2 331.5L359.4 331.5 M192.4 327.9L192.6 327.9L193.2 327.9L194.3 327.9L195.7 327.9L197.5 327.9L199.7 327.9L202.3 327.9L205.2 327.9L208.5 327.9L212.1 327.9L216.0 327.9L220.2 327.9L224.7 327.9L229.5 327.9L234.5 327.9L239.6 327.9L245.0 327.9L250.5 327.9L256.2 327.9L261.9 327.9L267.7 327.9L273.6 327.9L279.4 327.9L285.3 327.9L291.1 327.9L296.8 327.9L302.5 327.9L308.0 327.9L313.4 327.9L318.5 327.9L323.5 327.9L328.3 327.9L332.8 327.9L337.0 327.9L340.9 327.9L344.5 327.9L347.8 327.9L350.7 327.9L353.3 327.9L355.5 327.9L357.3 327.9L358.7 327.9L359.8 327.9L360.4 327.9L360.6 327.9 M191.4 324.3L191.6 324.3L192.2 324.3L193.2 324.3L194.7 324.3L196.5 324.3L198.7 324.3L201.3 324.3L204.3 324.3L207.6 324.3L211.3 324.3L215.3 324.3L219.5 324.3L224.1 324.3L228.9 324.3L233.9 324.3L239.2 324.3L244.6 324.3L250.2 324.3L255.9 324.3L261.7 324.3L267.6 324.3L273.5 324.3L279.5 324.3L285.4 324.3L291.3 324.3L297.1 324.3L302.8 324.3L308.4 324.3L313.8 324.3L319.1 324.3L324.1 324.3L328.9 324.3L333.5 324.3L337.7 324.3L341.7 324.3L345.4 324.3L348.7 324.3L351.7 324.3L354.3 324.3L356.5 324.3L358.3 324.3L359.8 324.3L360.8 324.3L361.4 324.3L361.6 324.3 M190.5 320.7L190.7 320.7L191.3 320.7L192.4 320.7L193.8 320.7L195.7 320.7L197.9 320.7L200.6 320.7L203.6 320.7L206.9 320.7L210.6 320.7L214.6 320.7L219.0 320.7L223.6 320.7L228.4 320.7L233.5 320.7L238.8 320.7L244.3 320.7L249.9 320.7L255.7 320.7L261.6 320.7L267.5 320.7L273.5 320.7L279.5 320.7L285.5 320.7L291.4 320.7L297.3 320.7L303.1 320.7L308.7 320.7L314.2 320.7L319.5 320.7L324.6 320.7L329.4 320.7L334.0 320.7L338.4 320.7L342.4 320.7L346.1 320.7L349.4 320.7L352.4 320.7L355.1 320.7L357.3 320.7L359.2 320.7L360.6 320.7L361.7 320.7L362.3 320.7L362.5 320.7 M189.8 317.0L190.0 317.0L190.6 317.0L191.7 317.0L193.1 317.0L195.0 317.0L197.3 317.0L199.9 317.0L203.0 317.0L206.3 317.0L210.1 317.0L214.1 317.0L218.5 317.0L223.1 317.0L228.0 317.0L233.1 317.0L238.5 317.0L244.0 317.0L249.7 317.0L255.5 317.0L261.4 317.0L267.4 317.0L273.5 317.0L279.5 317.0L285.6 317.0L291.6 317.0L297.5 317.0L303.3 317.0L309.0 317.0L314.5 317.0L319.9 317.0L325.0 317.0L329.9 317.0L334.5 317.0L338.9 317.0L342.9 317.0L346.7 317.0L350.0 317.0L353.1 317.0L355.7 317.0L358.0 317.0L359.9 317.0L361.3 317.0L362.4 317.0L363.0 317.0L363.2 317.0 M189.2 313.3L189.4 313.3L190.1 313.3L191.1 313.3L192.6 313.3L194.5 313.3L196.8 313.3L199.4 313.3L202.5 313.3L205.9 313.3L209.6 313.3L213.7 313.3L218.1 313.3L222.8 313.3L227.7 313.3L232.9 313.3L238.2 313.3L243.8 313.3L249.5 313.3L255.4 313.3L261.3 313.3L267.4 313.3L273.5 313.3L279.5 313.3L285.6 313.3L291.7 313.3L297.6 313.3L303.5 313.3L309.2 313.3L314.8 313.3L320.1 313.3L325.3 313.3L330.2 313.3L334.9 313.3L339.3 313.3L343.4 313.3L347.1 313.3L350.5 313.3L353.6 313.3L356.2 313.3L358.5 313.3L360.4 313.3L361.9 313.3L362.9 313.3L363.6 313.3L363.8 313.3 M188.8 309.5L189.0 309.5L189.7 309.5L190.7 309.5L192.2 309.5L194.1 309.5L196.4 309.5L199.1 309.5L202.1 309.5L205.6 309.5L209.3 309.5L213.4 309.5L217.8 309.5L222.5 309.5L227.5 309.5L232.7 309.5L238.1 309.5L243.7 309.5L249.4 309.5L255.3 309.5L261.3 309.5L267.3 309.5L273.4 309.5L279.6 309.5L285.7 309.5L291.7 309.5L297.7 309.5L303.6 309.5L309.3 309.5L314.9 309.5L320.3 309.5L325.5 309.5L330.5 309.5L335.2 309.5L339.6 309.5L343.7 309.5L347.4 309.5L350.9 309.5L353.9 309.5L356.6 309.5L358.9 309.5L360.8 309.5L362.3 309.5L363.3 309.5L364.0 309.5L364.2 309.5 M188.6 305.8L188.8 305.8L189.4 305.8L190.5 305.8L192.0 305.8L193.9 305.8L196.2 305.8L198.9 305.8L201.9 305.8L205.4 305.8L209.1 305.8L213.3 305.8L217.7 305.8L222.4 305.8L227.3 305.8L232.5 305.8L238.0 305.8L243.6 305.8L249.3 305.8L255.2 305.8L261.2 305.8L267.3 305.8L273.4 305.8L279.6 305.8L285.7 305.8L291.8 305.8L297.8 305.8L303.7 305.8L309.4 305.8L315.0 305.8L320.5 305.8L325.7 305.8L330.6 305.8L335.3 305.8L339.7 305.8L343.9 305.8L347.6 305.8L351.1 305.8L354.1 305.8L356.8 305.8L359.1 305.8L361.0 305.8L362.5 305.8L363.6 305.8L364.2 305.8L364.4 305.8 M188.5 302.0L188.7 302.0L189.4 302.0L190.4 302.0L191.9 302.0L193.8 302.0L196.1 302.0L198.8 302.0L201.9 302.0L205.3 302.0L209.1 302.0L213.2 302.0L217.6 302.0L222.3 302.0L227.3 302.0L232.5 302.0L237.9 302.0L243.5 302.0L249.3 302.0L255.2 302.0L261.2 302.0L267.3 302.0L273.4 302.0L279.6 302.0L285.7 302.0L291.8 302.0L297.8 302.0L303.7 302.0L309.5 302.0L315.1 302.0L320.5 302.0L325.7 302.0L330.7 302.0L335.4 302.0L339.8 302.0L343.9 302.0L347.7 302.0L351.1 302.0L354.2 302.0L356.9 302.0L359.2 302.0L361.1 302.0L362.6 302.0L363.6 302.0L364.3 302.0L364.5 302.0 M188.6 298.2L188.8 298.2L189.4 298.2L190.5 298.2L192.0 298.2L193.9 298.2L196.2 298.2L198.9 298.2L201.9 298.2L205.4 298.2L209.1 298.2L213.3 298.2L217.7 298.2L222.4 298.2L227.3 298.2L232.5 298.2L238.0 298.2L243.6 298.2L249.3 298.2L255.2 298.2L261.2 298.2L267.3 298.2L273.4 298.2L279.6 298.2L285.7 298.2L291.8 298.2L297.8 298.2L303.7 298.2L309.4 298.2L315.0 298.2L320.5 298.2L325.7 298.2L330.6 298.2L335.3 298.2L339.7 298.2L343.9 298.2L347.6 298.2L351.1 298.2L354.1 298.2L356.8 298.2L359.1 298.2L361.0 298.2L362.5 298.2L363.6 298.2L364.2 298.2L364.4 298.2 M188.8 294.5L189.0 294.5L189.7 294.5L190.7 294.5L192.2 294.5L194.1 294.5L196.4 294.5L199.1 294.5L202.1 294.5L205.6 294.5L209.3 294.5L213.4 294.5L217.8 294.5L222.5 294.5L227.5 294.5L232.7 294.5L238.1 294.5L243.7 294.5L249.4 294.5L255.3 294.5L261.3 294.5L267.3 294.5L273.4 294.5L279.6 294.5L285.7 294.5L291.7 294.5L297.7 294.5L303.6 294.5L309.3 294.5L314.9 294.5L320.3 294.5L325.5 294.5L330.5 294.5L335.2 294.5L339.6 294.5L343.7 294.5L347.4 294.5L350.9 294.5L353.9 294.5L356.6 294.5L358.9 294.5L360.8 294.5L362.3 294.5L363.3 294.5L364.0 294.5L364.2 294.5 M189.2 290.7L189.4 290.7L190.1 290.7L191.1 290.7L192.6 290.7L194.5 290.7L196.8 290.7L199.4 290.7L202.5 290.7L205.9 290.7L209.6 290.7L213.7 290.7L218.1 290.7L222.8 290.7L227.7 290.7L232.9 290.7L238.2 290.7L243.8 290.7L249.5 290.7L255.4 290.7L261.3 290.7L267.4 290.7L273.5 290.7L279.5 290.7L285.6 290.7L291.7 290.7L297.6 290.7L303.5 290.7L309.2 290.7L314.8 290.7L320.1 290.7L325.3 290.7L330.2 290.7L334.9 290.7L339.3 290.7L343.4 290.7L347.1 290.7L350.5 290.7L353.6 290.7L356.2 290.7L358.5 290.7L360.4 290.7L361.9 290.7L362.9 290.7L363.6 290.7L363.8 290.7 M189.8 287.0L190.0 287.0L190.6 287.0L191.7 287.0L193.1 287.0L195.0 287.0L197.3 287.0L199.9 287.0L203.0 287.0L206.3 287.0L210.1 287.0L214.1 287.0L218.5 287.0L223.1 287.0L228.0 287.0L233.1 287.0L238.5 287.0L244.0 287.0L249.7 287.0L255.5 287.0L261.4 287.0L267.4 287.0L273.5 287.0L279.5 287.0L285.6 287.0L291.6 287.0L297.5 287.0L303.3 287.0L309.0 287.0L314.5 287.0L319.9 287.0L325.0 287.0L329.9 287.0L334.5 287.0L338.9 287.0L342.9 287.0L346.7 287.0L350.0 287.0L353.1 287.0L355.7 287.0L358.0 287.0L359.9 287.0L361.3 287.0L362.4 287.0L363.0 287.0L363.2 287.0 M190.5 283.3L190.7 283.3L191.3 283.3L192.4 283.3L193.8 283.3L195.7 283.3L197.9 283.3L200.6 283.3L203.6 283.3L206.9 283.3L210.6 283.3L214.6 283.3L219.0 283.3L223.6 283.3L228.4 283.3L233.5 283.3L238.8 283.3L244.3 283.3L249.9 283.3L255.7 283.3L261.6 283.3L267.5 283.3L273.5 283.3L279.5 283.3L285.5 283.3L291.4 283.3L297.3 283.3L303.1 283.3L308.7 283.3L314.2 283.3L319.5 283.3L324.6 283.3L329.4 283.3L334.0 283.3L338.4 283.3L342.4 283.3L346.1 283.3L349.4 283.3L352.4 283.3L355.1 283.3L357.3 283.3L359.2 283.3L360.6 283.3L361.7 283.3L362.3 283.3L362.5 283.3 M191.4 279.7L191.6 279.7L192.2 279.7L193.2 279.7L194.7 279.7L196.5 279.7L198.7 279.7L201.3 279.7L204.3 279.7L207.6 279.7L211.3 279.7L215.3 279.7L219.5 279.7L224.1 279.7L228.9 279.7L233.9 279.7L239.2 279.7L244.6 279.7L250.2 279.7L255.9 279.7L261.7 279.7L267.6 279.7L273.5 279.7L279.5 279.7L285.4 279.7L291.3 279.7L297.1 279.7L302.8 279.7L308.4 279.7L313.8 279.7L319.1 279.7L324.1 279.7L328.9 279.7L333.5 279.7L337.7 279.7L341.7 279.7L345.4 279.7L348.7 279.7L351.7 279.7L354.3 279.7L356.5 279.7L358.3 279.7L359.8 279.7L360.8 279.7L361.4 279.7L361.6 279.7 M192.4 276.1L192.6 276.1L193.2 276.1L194.3 276.1L195.7 276.1L197.5 276.1L199.7 276.1L202.3 276.1L205.2 276.1L208.5 276.1L212.1 276.1L216.0 276.1L220.2 276.1L224.7 276.1L229.5 276.1L234.5 276.1L239.6 276.1L245.0 276.1L250.5 276.1L256.2 276.1L261.9 276.1L267.7 276.1L273.6 276.1L279.4 276.1L285.3 276.1L291.1 276.1L296.8 276.1L302.5 276.1L308.0 276.1L313.4 276.1L318.5 276.1L323.5 276.1L328.3 276.1L332.8 276.1L337.0 276.1L340.9 276.1L344.5 276.1L347.8 276.1L350.7 276.1L353.3 276.1L355.5 276.1L357.3 276.1L358.7 276.1L359.8 276.1L360.4 276.1L360.6 276.1 M193.6 272.5L193.8 272.5L194.4 272.5L195.4 272.5L196.8 272.5L198.6 272.5L200.8 272.5L203.3 272.5L206.2 272.5L209.4 272.5L213.0 272.5L216.9 272.5L221.0 272.5L225.5 272.5L230.1 272.5L235.0 272.5L240.2 272.5L245.4 272.5L250.9 272.5L256.4 272.5L262.1 272.5L267.8 272.5L273.6 272.5L279.4 272.5L285.2 272.5L290.9 272.5L296.6 272.5L302.1 272.5L307.6 272.5L312.8 272.5L318.0 272.5L322.9 272.5L327.5 272.5L332.0 272.5L336.1 272.5L340.0 272.5L343.6 272.5L346.8 272.5L349.7 272.5L352.2 272.5L354.4 272.5L356.2 272.5L357.6 272.5L358.6 272.5L359.2 272.5L359.4 272.5 M194.9 269.0L195.1 269.0L195.7 269.0L196.7 269.0L198.1 269.0L199.9 269.0L202.0 269.0L204.5 269.0L207.3 269.0L210.5 269.0L214.0 269.0L217.8 269.0L221.9 269.0L226.3 269.0L230.9 269.0L235.7 269.0L240.7 269.0L245.9 269.0L251.3 269.0L256.8 269.0L262.3 269.0L268.0 269.0L273.7 269.0L279.3 269.0L285.0 269.0L290.7 269.0L296.2 269.0L301.7 269.0L307.1 269.0L312.3 269.0L317.3 269.0L322.1 269.0L326.7 269.0L331.1 269.0L335.2 269.0L339.0 269.0L342.5 269.0L345.7 269.0L348.5 269.0L351.0 269.0L353.1 269.0L354.9 269.0L356.3 269.0L357.3 269.0L357.9 269.0L358.1 269.0 M196.4 265.5L196.6 265.5L197.2 265.5L198.2 265.5L199.5 265.5L201.3 265.5L203.3 265.5L205.8 265.5L208.6 265.5L211.7 265.5L215.2 265.5L218.9 265.5L222.9 265.5L227.2 265.5L231.7 265.5L236.5 265.5L241.4 265.5L246.5 265.5L251.8 265.5L257.1 265.5L262.6 265.5L268.1 265.5L273.7 265.5L279.3 265.5L284.9 265.5L290.4 265.5L295.9 265.5L301.2 265.5L306.5 265.5L311.6 265.5L316.5 265.5L321.3 265.5L325.8 265.5L330.1 265.5L334.1 265.5L337.8 265.5L341.3 265.5L344.4 265.5L347.2 265.5L349.7 265.5L351.7 265.5L353.5 265.5L354.8 265.5L355.8 265.5L356.4 265.5L356.6 265.5 M198.1 262.1L198.2 262.1L198.8 262.1L199.8 262.1L201.1 262.1L202.8 262.1L204.8 262.1L207.2 262.1L210.0 262.1L213.0 262.1L216.4 262.1L220.1 262.1L224.0 262.1L228.2 262.1L232.6 262.1L237.3 262.1L242.1 262.1L247.1 262.1L252.3 262.1L257.5 262.1L262.9 262.1L268.3 262.1L273.8 262.1L279.2 262.1L284.7 262.1L290.1 262.1L295.5 262.1L300.7 262.1L305.9 262.1L310.9 262.1L315.7 262.1L320.4 262.1L324.8 262.1L329.0 262.1L332.9 262.1L336.6 262.1L340.0 262.1L343.0 262.1L345.8 262.1L348.2 262.1L350.2 262.1L351.9 262.1L353.2 262.1L354.2 262.1L354.8 262.1L354.9 262.1 M199.8 258.8L200.0 258.8L200.6 258.8L201.5 258.8L202.8 258.8L204.5 258.8L206.5 258.8L208.8 258.8L211.5 258.8L214.5 258.8L217.8 258.8L221.4 258.8L225.2 258.8L229.3 258.8L233.6 258.8L238.2 258.8L242.9 258.8L247.8 258.8L252.8 258.8L258.0 258.8L263.2 258.8L268.5 258.8L273.8 258.8L279.2 258.8L284.5 258.8L289.8 258.8L295.0 258.8L300.2 258.8L305.2 258.8L310.1 258.8L314.8 258.8L319.4 258.8L323.7 258.8L327.8 258.8L331.6 258.8L335.2 258.8L338.5 258.8L341.5 258.8L344.2 258.8L346.5 258.8L348.5 258.8L350.2 258.8L351.5 258.8L352.4 258.8L353.0 258.8L353.2 258.8 M201.7 255.6L201.9 255.6L202.5 255.6L203.4 255.6L204.6 255.6L206.3 255.6L208.2 255.6L210.5 255.6L213.1 255.6L216.0 255.6L219.2 255.6L222.7 255.6L226.5 255.6L230.5 255.6L234.7 255.6L239.1 255.6L243.7 255.6L248.5 255.6L253.4 255.6L258.4 255.6L263.5 255.6L268.7 255.6L273.9 255.6L279.1 255.6L284.3 255.6L289.5 255.6L294.6 255.6L299.6 255.6L304.5 255.6L309.3 255.6L313.9 255.6L318.3 255.6L322.5 255.6L326.5 255.6L330.3 255.6L333.8 255.6L337.0 255.6L339.9 255.6L342.5 255.6L344.8 255.6L346.7 255.6L348.4 255.6L349.6 255.6L350.5 255.6L351.1 255.6L351.3 255.6 M203.8 252.4L204.0 252.4L204.5 252.4L205.4 252.4L206.6 252.4L208.2 252.4L210.1 252.4L212.3 252.4L214.8 252.4L217.7 252.4L220.8 252.4L224.2 252.4L227.9 252.4L231.7 252.4L235.8 252.4L240.2 252.4L244.6 252.4L249.3 252.4L254.0 252.4L258.9 252.4L263.9 252.4L268.9 252.4L274.0 252.4L279.0 252.4L284.1 252.4L289.1 252.4L294.1 252.4L299.0 252.4L303.7 252.4L308.4 252.4L312.8 252.4L317.2 252.4L321.3 252.4L325.1 252.4L328.8 252.4L332.2 252.4L335.3 252.4L338.2 252.4L340.7 252.4L342.9 252.4L344.8 252.4L346.4 252.4L347.6 252.4L348.5 252.4L349.0 252.4L349.2 252.4 M206.0 249.3L206.2 249.3L206.7 249.3L207.5 249.3L208.7 249.3L210.2 249.3L212.1 249.3L214.2 249.3L216.7 249.3L219.5 249.3L222.5 249.3L225.8 249.3L229.3 249.3L233.1 249.3L237.1 249.3L241.2 249.3L245.6 249.3L250.1 249.3L254.7 249.3L259.4 249.3L264.3 249.3L269.1 249.3L274.0 249.3L279.0 249.3L283.9 249.3L288.7 249.3L293.6 249.3L298.3 249.3L302.9 249.3L307.4 249.3L311.8 249.3L315.9 249.3L319.9 249.3L323.7 249.3L327.2 249.3L330.5 249.3L333.5 249.3L336.3 249.3L338.8 249.3L340.9 249.3L342.8 249.3L344.3 249.3L345.5 249.3L346.3 249.3L346.8 249.3L347.0 249.3 M208.3 246.4L208.5 246.4L209.0 246.4L209.8 246.4L210.9 246.4L212.4 246.4L214.2 246.4L216.3 246.4L218.7 246.4L221.3 246.4L224.3 246.4L227.4 246.4L230.9 246.4L234.5 246.4L238.4 246.4L242.4 246.4L246.6 246.4L251.0 246.4L255.4 246.4L260.0 246.4L264.7 246.4L269.4 246.4L274.1 246.4L278.9 246.4L283.6 246.4L288.3 246.4L293.0 246.4L297.6 246.4L302.0 246.4L306.4 246.4L310.6 246.4L314.6 246.4L318.5 246.4L322.1 246.4L325.6 246.4L328.7 246.4L331.7 246.4L334.3 246.4L336.7 246.4L338.8 246.4L340.6 246.4L342.1 246.4L343.2 246.4L344.0 246.4L344.5 246.4L344.7 246.4 M210.7 243.5L210.9 243.5L211.4 243.5L212.2 243.5L213.3 243.5L214.7 243.5L216.4 243.5L218.4 243.5L220.7 243.5L223.3 243.5L226.1 243.5L229.2 243.5L232.5 243.5L236.0 243.5L239.7 243.5L243.6 243.5L247.7 243.5L251.9 243.5L256.2 243.5L260.6 243.5L265.1 243.5L269.6 243.5L274.2 243.5L278.8 243.5L283.4 243.5L287.9 243.5L292.4 243.5L296.8 243.5L301.1 243.5L305.3 243.5L309.4 243.5L313.3 243.5L317.0 243.5L320.5 243.5L323.8 243.5L326.9 243.5L329.7 243.5L332.3 243.5L334.6 243.5L336.6 243.5L338.3 243.5L339.7 243.5L340.8 243.5L341.6 243.5L342.1 243.5L342.3 243.5 M213.3 240.8L213.5 240.8L213.9 240.8L214.7 240.8L215.8 240.8L217.1 240.8L218.8 240.8L220.7 240.8L222.9 240.8L225.4 240.8L228.1 240.8L231.0 240.8L234.2 240.8L237.6 240.8L241.2 240.8L244.9 240.8L248.8 240.8L252.8 240.8L257.0 240.8L261.2 240.8L265.5 240.8L269.9 240.8L274.3 240.8L278.7 240.8L283.1 240.8L287.5 240.8L291.8 240.8L296.0 240.8L300.2 240.8L304.2 240.8L308.1 240.8L311.8 240.8L315.4 240.8L318.8 240.8L322.0 240.8L324.9 240.8L327.6 240.8L330.1 240.8L332.3 240.8L334.2 240.8L335.9 240.8L337.2 240.8L338.3 240.8L339.1 240.8L339.5 240.8L339.7 240.8 M216.0 238.1L216.1 238.1L216.6 238.1L217.3 238.1L218.3 238.1L219.6 238.1L221.2 238.1L223.1 238.1L225.2 238.1L227.5 238.1L230.1 238.1L233.0 238.1L236.0 238.1L239.2 238.1L242.7 238.1L246.2 238.1L250.0 238.1L253.8 238.1L257.8 238.1L261.9 238.1L266.0 238.1L270.2 238.1L274.4 238.1L278.6 238.1L282.8 238.1L287.0 238.1L291.1 238.1L295.2 238.1L299.2 238.1L303.0 238.1L306.8 238.1L310.3 238.1L313.8 238.1L317.0 238.1L320.0 238.1L322.9 238.1L325.5 238.1L327.8 238.1L329.9 238.1L331.8 238.1L333.4 238.1L334.7 238.1L335.7 238.1L336.4 238.1L336.9 238.1L337.0 238.1 M218.8 235.6L218.9 235.6L219.3 235.6L220.0 235.6L221.0 235.6L222.2 235.6L223.8 235.6L225.5 235.6L227.5 235.6L229.8 235.6L232.3 235.6L235.0 235.6L237.9 235.6L241.0 235.6L244.2 235.6L247.6 235.6L251.2 235.6L254.9 235.6L258.7 235.6L262.5 235.6L266.5 235.6L270.5 235.6L274.5 235.6L278.5 235.6L282.5 235.6L286.5 235.6L290.5 235.6L294.3 235.6L298.1 235.6L301.8 235.6L305.4 235.6L308.8 235.6L312.0 235.6L315.1 235.6L318.0 235.6L320.7 235.6L323.2 235.6L325.5 235.6L327.5 235.6L329.2 235.6L330.8 235.6L332.0 235.6L333.0 235.6L333.7 235.6L334.1 235.6L334.2 235.6 M221.7 233.2L221.8 233.2L222.2 233.2L222.9 233.2L223.8 233.2L225.0 233.2L226.4 233.2L228.1 233.2L230.0 233.2L232.1 233.2L234.5 233.2L237.1 233.2L239.8 233.2L242.7 233.2L245.8 233.2L249.1 233.2L252.5 233.2L256.0 233.2L259.6 233.2L263.2 233.2L267.0 233.2L270.8 233.2L274.6 233.2L278.4 233.2L282.2 233.2L286.0 233.2L289.8 233.2L293.4 233.2L297.0 233.2L300.5 233.2L303.9 233.2L307.2 233.2L310.3 233.2L313.2 233.2L315.9 233.2L318.5 233.2L320.9 233.2L323.0 233.2L324.9 233.2L326.6 233.2L328.0 233.2L329.2 233.2L330.1 233.2L330.8 233.2L331.2 233.2L331.3 233.2 M224.7 230.9L224.8 230.9L225.2 230.9L225.8 230.9L226.7 230.9L227.8 230.9L229.1 230.9L230.7 230.9L232.5 230.9L234.6 230.9L236.8 230.9L239.2 230.9L241.8 230.9L244.6 230.9L247.5 230.9L250.6 230.9L253.8 230.9L257.1 230.9L260.5 230.9L264.0 230.9L267.5 230.9L271.1 230.9L274.7 230.9L278.3 230.9L281.9 230.9L285.5 230.9L289.0 230.9L292.5 230.9L295.9 230.9L299.2 230.9L302.4 230.9L305.5 230.9L308.4 230.9L311.2 230.9L313.8 230.9L316.2 230.9L318.4 230.9L320.5 230.9L322.3 230.9L323.9 230.9L325.2 230.9L326.3 230.9L327.2 230.9L327.8 230.9L328.2 230.9L328.3 230.9 M227.7 228.7L227.9 228.7L228.2 228.7L228.8 228.7L229.6 228.7L230.7 228.7L232.0 228.7L233.4 228.7L235.1 228.7L237.1 228.7L239.1 228.7L241.4 228.7L243.9 228.7L246.5 228.7L249.2 228.7L252.1 228.7L255.1 228.7L258.2 228.7L261.4 228.7L264.7 228.7L268.0 228.7L271.4 228.7L274.8 228.7L278.2 228.7L281.6 228.7L285.0 228.7L288.3 228.7L291.6 228.7L294.8 228.7L297.9 228.7L300.9 228.7L303.8 228.7L306.5 228.7L309.1 228.7L311.6 228.7L313.9 228.7L315.9 228.7L317.9 228.7L319.6 228.7L321.0 228.7L322.3 228.7L323.4 228.7L324.2 228.7L324.8 228.7L325.1 228.7L325.3 228.7 M230.9 226.7L231.0 226.7L231.4 226.7L231.9 226.7L232.7 226.7L233.7 226.7L234.9 226.7L236.2 226.7L237.8 226.7L239.6 226.7L241.6 226.7L243.7 226.7L246.0 226.7L248.4 226.7L251.0 226.7L253.7 226.7L256.5 226.7L259.4 226.7L262.4 226.7L265.5 226.7L268.6 226.7L271.7 226.7L274.9 226.7L278.1 226.7L281.3 226.7L284.4 226.7L287.5 226.7L290.6 226.7L293.6 226.7L296.5 226.7L299.3 226.7L302.0 226.7L304.6 226.7L307.0 226.7L309.3 226.7L311.4 226.7L313.4 226.7L315.2 226.7L316.8 226.7L318.1 226.7L319.3 226.7L320.3 226.7L321.1 226.7L321.6 226.7L322.0 226.7L322.1 226.7 M234.2 224.8L234.3 224.8L234.6 224.8L235.1 224.8L235.8 224.8L236.7 224.8L237.8 224.8L239.1 224.8L240.6 224.8L242.3 224.8L244.1 224.8L246.1 224.8L248.2 224.8L250.4 224.8L252.8 224.8L255.3 224.8L257.9 224.8L260.6 224.8L263.4 224.8L266.3 224.8L269.1 224.8L272.1 224.8L275.0 224.8L278.0 224.8L280.9 224.8L283.9 224.8L286.7 224.8L289.6 224.8L292.4 224.8L295.1 224.8L297.7 224.8L300.2 224.8L302.6 224.8L304.8 224.8L306.9 224.8L308.9 224.8L310.7 224.8L312.4 224.8L313.9 224.8L315.2 224.8L316.3 224.8L317.2 224.8L317.9 224.8L318.4 224.8L318.7 224.8L318.8 224.8 M240.7 382.4L235.2 379.7L229.9 376.6L224.8 373.2L219.9 369.4L215.4 365.3L211.1 360.9L207.2 356.2L203.5 351.2L200.3 346.0L200.3 258.0L203.5 252.8L207.2 247.8L211.1 243.1L215.4 238.7L219.9 234.6L224.8 230.8L229.9 227.4L235.2 224.3L240.7 221.6 M240.7 382.4L235.2 379.7L229.9 376.6L224.8 373.2L220.0 369.4L215.4 365.3L211.1 360.9L207.2 356.2L203.6 351.2L200.3 346.0L197.4 340.6L194.9 335.0L192.8 329.2L191.2 323.3L189.9 317.3L189.0 311.2L188.6 305.1L188.6 298.9L189.0 292.8L189.9 286.7L191.2 280.7L192.8 274.8L194.9 269.0L197.4 263.4L200.3 258.0L203.6 252.8L207.2 247.8L211.1 243.1L215.4 238.7L220.0 234.6L224.8 230.8L229.9 227.4L235.2 224.3L240.7 221.6 M240.8 382.4L235.3 379.7L230.0 376.6L224.9 373.2L220.1 369.4L215.5 365.3L211.3 360.9L207.3 356.2L203.7 351.2L200.5 346.0L197.6 340.6L195.1 335.0L193.0 329.2L191.3 323.3L190.1 317.3L189.2 311.2L188.8 305.1L188.8 298.9L189.2 292.8L190.1 286.7L191.3 280.7L193.0 274.8L195.1 269.0L197.6 263.4L200.5 258.0L203.7 252.8L207.3 247.8L211.3 243.1L215.5 238.7L220.1 234.6L224.9 230.8L230.0 227.4L235.3 224.3L240.8 221.6 M241.0 382.4L235.5 379.7L230.2 376.6L225.1 373.2L220.3 369.4L215.8 365.3L211.5 360.9L207.6 356.2L204.0 351.2L200.8 346.0L197.9 340.6L195.5 335.0L193.4 329.2L191.7 323.3L190.4 317.3L189.6 311.2L189.2 305.1L189.2 298.9L189.6 292.8L190.4 286.7L191.7 280.7L193.4 274.8L195.5 269.0L197.9 263.4L200.8 258.0L204.0 252.8L207.6 247.8L211.5 243.1L215.8 238.7L220.3 234.6L225.1 230.8L230.2 227.4L235.5 224.3L241.0 221.6 M241.2 382.4L235.7 379.7L230.5 376.6L225.4 373.2L220.7 369.4L216.1 365.3L211.9 360.9L208.0 356.2L204.5 351.2L201.3 346.0L198.4 340.6L195.9 335.0L193.9 329.2L192.2 323.3L190.9 317.3L190.1 311.2L189.7 305.1L189.7 298.9L190.1 292.8L190.9 286.7L192.2 280.7L193.9 274.8L195.9 269.0L198.4 263.4L201.3 258.0L204.5 252.8L208.0 247.8L211.9 243.1L216.1 238.7L220.7 234.6L225.4 230.8L230.5 227.4L235.7 224.3L241.2 221.6 M241.4 382.4L236.0 379.7L230.8 376.6L225.8 373.2L221.1 369.4L216.6 365.3L212.4 360.9L208.6 356.2L205.0 351.2L201.8 346.0L199.0 340.6L196.6 335.0L194.5 329.2L192.9 323.3L191.6 317.3L190.8 311.2L190.3 305.1L190.3 298.9L190.8 292.8L191.6 286.7L192.9 280.7L194.5 274.8L196.6 269.0L199.0 263.4L201.8 258.0L205.0 252.8L208.6 247.8L212.4 243.1L216.6 238.7L221.1 234.6L225.8 230.8L230.8 227.4L236.0 224.3L241.4 221.6 M241.8 382.4L236.4 379.7L231.3 376.6L226.3 373.2L221.6 369.4L217.2 365.3L213.1 360.9L209.2 356.2L205.7 351.2L202.6 346.0L199.8 340.6L197.3 335.0L195.3 329.2L193.7 323.3L192.4 317.3L191.6 311.2L191.2 305.1L191.2 298.9L191.6 292.8L192.4 286.7L193.7 280.7L195.3 274.8L197.3 269.0L199.8 263.4L202.6 258.0L205.7 252.8L209.2 247.8L213.1 243.1L217.2 238.7L221.6 234.6L226.3 230.8L231.3 227.4L236.4 224.3L241.8 221.6 M242.2 382.4L236.9 379.7L231.8 376.6L226.9 373.2L222.3 369.4L217.9 365.3L213.8 360.9L210.0 356.2L206.5 351.2L203.4 346.0L200.7 340.6L198.3 335.0L196.3 329.2L194.6 323.3L193.4 317.3L192.6 311.2L192.2 305.1L192.2 298.9L192.6 292.8L193.4 286.7L194.6 280.7L196.3 274.8L198.3 269.0L200.7 263.4L203.4 258.0L206.5 252.8L210.0 247.8L213.8 243.1L217.9 238.7L222.3 234.6L226.9 230.8L231.8 227.4L236.9 224.3L242.2 221.6 M242.6 382.4L237.4 379.7L232.4 376.6L227.6 373.2L223.0 369.4L218.7 365.3L214.6 360.9L210.9 356.2L207.5 351.2L204.4 346.0L201.7 340.6L199.3 335.0L197.3 329.2L195.7 323.3L194.5 317.3L193.7 311.2L193.3 305.1L193.3 298.9L193.7 292.8L194.5 286.7L195.7 280.7L197.3 274.8L199.3 269.0L201.7 263.4L204.4 258.0L207.5 252.8L210.9 247.8L214.6 243.1L218.7 238.7L223.0 234.6L227.6 230.8L232.4 227.4L237.4 224.3L242.6 221.6 M243.2 382.4L238.0 379.7L233.1 376.6L228.3 373.2L223.8 369.4L219.6 365.3L215.6 360.9L211.9 356.2L208.6 351.2L205.5 346.0L202.9 340.6L200.5 335.0L198.6 329.2L197.0 323.3L195.8 317.3L195.0 311.2L194.6 305.1L194.6 298.9L195.0 292.8L195.8 286.7L197.0 280.7L198.6 274.8L200.5 269.0L202.9 263.4L205.5 258.0L208.6 252.8L211.9 247.8L215.6 243.1L219.6 238.7L223.8 234.6L228.3 230.8L233.1 227.4L238.0 224.3L243.2 221.6 M243.8 382.4L238.7 379.7L233.8 376.6L229.2 373.2L224.8 369.4L220.6 365.3L216.7 360.9L213.1 356.2L209.8 351.2L206.8 346.0L204.2 340.6L201.9 335.0L200.0 329.2L198.4 323.3L197.2 317.3L196.5 311.2L196.1 305.1L196.1 298.9L196.5 292.8L197.2 286.7L198.4 280.7L200.0 274.8L201.9 269.0L204.2 263.4L206.8 258.0L209.8 252.8L213.1 247.8L216.7 243.1L220.6 238.7L224.8 234.6L229.2 230.8L233.8 227.4L238.7 224.3L243.8 221.6 M244.4 382.4L239.5 379.7L234.7 376.6L230.1 373.2L225.8 369.4L221.7 365.3L217.9 360.9L214.3 356.2L211.1 351.2L208.2 346.0L205.6 340.6L203.4 335.0L201.5 329.2L200.0 323.3L198.8 317.3L198.0 311.2L197.7 305.1L197.7 298.9L198.0 292.8L198.8 286.7L200.0 280.7L201.5 274.8L203.4 269.0L205.6 263.4L208.2 258.0L211.1 252.8L214.3 247.8L217.9 243.1L221.7 238.7L225.8 234.6L230.1 230.8L234.7 227.4L239.5 224.3L244.4 221.6 M245.1 382.4L240.3 379.7L235.6 376.6L231.2 373.2L226.9 369.4L222.9 365.3L219.2 360.9L215.7 356.2L212.5 351.2L209.7 346.0L207.2 340.6L205.0 335.0L203.1 329.2L201.6 323.3L200.5 317.3L199.8 311.2L199.4 305.1L199.4 298.9L199.8 292.8L200.5 286.7L201.6 280.7L203.1 274.8L205.0 269.0L207.2 263.4L209.7 258.0L212.5 252.8L215.7 247.8L219.2 243.1L222.9 238.7L226.9 234.6L231.2 230.8L235.6 227.4L240.3 224.3L245.1 221.6 M245.9 382.4L241.2 379.7L236.6 376.6L232.3 373.2L228.1 369.4L224.2 365.3L220.6 360.9L217.2 356.2L214.1 351.2L211.3 346.0L208.8 340.6L206.7 335.0L204.9 329.2L203.5 323.3L202.4 317.3L201.6 311.2L201.3 305.1L201.3 298.9L201.6 292.8L202.4 286.7L203.5 280.7L204.9 274.8L206.7 269.0L208.8 263.4L211.3 258.0L214.1 252.8L217.2 247.8L220.6 243.1L224.2 238.7L228.1 234.6L232.3 230.8L236.6 227.4L241.2 224.3L245.9 221.6 M246.7 382.4L242.1 379.7L237.7 376.6L233.4 373.2L229.4 369.4L225.6 365.3L222.1 360.9L218.8 356.2L215.8 351.2L213.1 346.0L210.7 340.6L208.6 335.0L206.8 329.2L205.4 323.3L204.4 317.3L203.6 311.2L203.3 305.1L203.3 298.9L203.6 292.8L204.4 286.7L205.4 280.7L206.8 274.8L208.6 269.0L210.7 263.4L213.1 258.0L215.8 252.8L218.8 247.8L222.1 243.1L225.6 238.7L229.4 234.6L233.4 230.8L237.7 227.4L242.1 224.3L246.7 221.6 M247.6 382.4L243.1 379.7L238.8 376.6L234.7 373.2L230.8 369.4L227.1 365.3L223.7 360.9L220.5 356.2L217.6 351.2L214.9 346.0L212.6 340.6L210.6 335.0L208.9 329.2L207.5 323.3L206.5 317.3L205.8 311.2L205.4 305.1L205.4 298.9L205.8 292.8L206.5 286.7L207.5 280.7L208.9 274.8L210.6 269.0L212.6 263.4L214.9 258.0L217.6 252.8L220.5 247.8L223.7 243.1L227.1 238.7L230.8 234.6L234.7 230.8L238.8 227.4L243.1 224.3L247.6 221.6 M248.5 382.4L244.2 379.7L240.0 376.6L236.0 373.2L232.3 369.4L228.7 365.3L225.4 360.9L222.3 356.2L219.4 351.2L216.9 346.0L214.6 340.6L212.7 335.0L211.0 329.2L209.7 323.3L208.7 317.3L208.1 311.2L207.7 305.1L207.7 298.9L208.1 292.8L208.7 286.7L209.7 280.7L211.0 274.8L212.7 269.0L214.6 263.4L216.9 258.0L219.4 252.8L222.3 247.8L225.4 243.1L228.7 238.7L232.3 234.6L236.0 230.8L240.0 227.4L244.2 224.3L248.5 221.6 M249.5 382.4L245.3 379.7L241.3 376.6L237.5 373.2L233.8 369.4L230.4 365.3L227.1 360.9L224.2 356.2L221.4 351.2L219.0 346.0L216.8 340.6L214.9 335.0L213.3 329.2L212.1 323.3L211.1 317.3L210.4 311.2L210.1 305.1L210.1 298.9L210.4 292.8L211.1 286.7L212.1 280.7L213.3 274.8L214.9 269.0L216.8 263.4L219.0 258.0L221.4 252.8L224.2 247.8L227.1 243.1L230.4 238.7L233.8 234.6L237.5 230.8L241.3 227.4L245.3 224.3L249.5 221.6 M250.5 382.4L246.5 379.7L242.6 376.6L238.9 373.2L235.4 369.4L232.1 365.3L229.0 360.9L226.2 356.2L223.5 351.2L221.2 346.0L219.1 340.6L217.3 335.0L215.7 329.2L214.5 323.3L213.6 317.3L213.0 311.2L212.7 305.1L212.7 298.9L213.0 292.8L213.6 286.7L214.5 280.7L215.7 274.8L217.3 269.0L219.1 263.4L221.2 258.0L223.5 252.8L226.2 247.8L229.0 243.1L232.1 238.7L235.4 234.6L238.9 230.8L242.6 227.4L246.5 224.3L250.5 221.6 M251.6 382.4L247.7 379.7L244.0 376.6L240.5 373.2L237.1 369.4L234.0 365.3L231.0 360.9L228.2 356.2L225.7 351.2L223.5 346.0L221.5 340.6L219.7 335.0L218.3 329.2L217.1 323.3L216.2 317.3L215.6 311.2L215.3 305.1L215.3 298.9L215.6 292.8L216.2 286.7L217.1 280.7L218.3 274.8L219.7 269.0L221.5 263.4L223.5 258.0L225.7 252.8L228.2 247.8L231.0 243.1L234.0 238.7L237.1 234.6L240.5 230.8L244.0 227.4L247.7 224.3L251.6 221.6 M252.7 382.4L249.0 379.7L245.5 376.6L242.1 373.2L238.9 369.4L235.9 365.3L233.0 360.9L230.4 356.2L228.0 351.2L225.9 346.0L223.9 340.6L222.3 335.0L220.9 329.2L219.8 323.3L218.9 317.3L218.3 311.2L218.1 305.1L218.1 298.9L218.3 292.8L218.9 286.7L219.8 280.7L220.9 274.8L222.3 269.0L223.9 263.4L225.9 258.0L228.0 252.8L230.4 247.8L233.0 243.1L235.9 238.7L238.9 234.6L242.1 230.8L245.5 227.4L249.0 224.3L252.7 221.6 M253.9 382.4L250.4 379.7L247.0 376.6L243.8 373.2L240.7 369.4L237.9 365.3L235.2 360.9L232.7 356.2L230.4 351.2L228.3 346.0L226.5 340.6L224.9 335.0L223.6 329.2L222.5 323.3L221.7 317.3L221.2 311.2L220.9 305.1L220.9 298.9L221.2 292.8L221.7 286.7L222.5 280.7L223.6 274.8L224.9 269.0L226.5 263.4L228.3 258.0L230.4 252.8L232.7 247.8L235.2 243.1L237.9 238.7L240.7 234.6L243.8 230.8L247.0 227.4L250.4 224.3L253.9 221.6 M255.1 382.4L251.8 379.7L248.6 376.6L245.6 373.2L242.7 369.4L239.9 365.3L237.4 360.9L235.0 356.2L232.8 351.2L230.9 346.0L229.2 340.6L227.7 335.0L226.4 329.2L225.4 323.3L224.6 317.3L224.1 311.2L223.9 305.1L223.9 298.9L224.1 292.8L224.6 286.7L225.4 280.7L226.4 274.8L227.7 269.0L229.2 263.4L230.9 258.0L232.8 252.8L235.0 247.8L237.4 243.1L239.9 238.7L242.7 234.6L245.6 230.8L248.6 227.4L251.8 224.3L255.1 221.6 M256.3 382.4L253.2 379.7L250.2 376.6L247.4 373.2L244.6 369.4L242.1 365.3L239.6 360.9L237.4 356.2L235.4 351.2L233.6 346.0L231.9 340.6L230.5 335.0L229.3 329.2L228.4 323.3L227.7 317.3L227.2 311.2L226.9 305.1L226.9 298.9L227.2 292.8L227.7 286.7L228.4 280.7L229.3 274.8L230.5 269.0L231.9 263.4L233.6 258.0L235.4 252.8L237.4 247.8L239.6 243.1L242.1 238.7L244.6 234.6L247.4 230.8L250.2 227.4L253.2 224.3L256.3 221.6 M257.6 382.4L254.7 379.7L251.9 376.6L249.2 373.2L246.7 369.4L244.2 365.3L242.0 360.9L239.9 356.2L238.0 351.2L236.3 346.0L234.8 340.6L233.4 335.0L232.3 329.2L231.4 323.3L230.8 317.3L230.3 311.2L230.1 305.1L230.1 298.9L230.3 292.8L230.8 286.7L231.4 280.7L232.3 274.8L233.4 269.0L234.8 263.4L236.3 258.0L238.0 252.8L239.9 247.8L242.0 243.1L244.2 238.7L246.7 234.6L249.2 230.8L251.9 227.4L254.7 224.3L257.6 221.6 M258.9 382.4L256.2 379.7L253.6 376.6L251.1 373.2L248.7 369.4L246.5 365.3L244.4 360.9L242.5 356.2L240.7 351.2L239.1 346.0L237.7 340.6L236.4 335.0L235.4 329.2L234.6 323.3L234.0 317.3L233.5 311.2L233.3 305.1L233.3 298.9L233.5 292.8L234.0 286.7L234.6 280.7L235.4 274.8L236.4 269.0L237.7 263.4L239.1 258.0L240.7 252.8L242.5 247.8L244.4 243.1L246.5 238.7L248.7 234.6L251.1 230.8L253.6 227.4L256.2 224.3L258.9 221.6 M260.3 382.4L257.8 379.7L255.4 376.6L253.1 373.2L250.9 369.4L248.8 365.3L246.9 360.9L245.1 356.2L243.4 351.2L242.0 346.0L240.7 340.6L239.5 335.0L238.6 329.2L237.8 323.3L237.2 317.3L236.8 311.2L236.6 305.1L236.6 298.9L236.8 292.8L237.2 286.7L237.8 280.7L238.6 274.8L239.5 269.0L240.7 263.4L242.0 258.0L243.4 252.8L245.1 247.8L246.9 243.1L248.8 238.7L250.9 234.6L253.1 230.8L255.4 227.4L257.8 224.3L260.3 221.6 M261.7 382.4L259.4 379.7L257.2 376.6L255.0 373.2L253.0 369.4L251.1 365.3L249.4 360.9L247.7 356.2L246.2 351.2L244.9 346.0L243.7 340.6L242.7 335.0L241.8 329.2L241.1 323.3L240.6 317.3L240.2 311.2L240.0 305.1L240.0 298.9L240.2 292.8L240.6 286.7L241.1 280.7L241.8 274.8L242.7 269.0L243.7 263.4L244.9 258.0L246.2 252.8L247.7 247.8L249.4 243.1L251.1 238.7L253.0 234.6L255.0 230.8L257.2 227.4L259.4 224.3L261.7 221.6 M263.1 382.4L261.0 379.7L259.0 376.6L257.1 373.2L255.3 369.4L253.6 365.3L251.9 360.9L250.5 356.2L249.1 351.2L247.9 346.0L246.8 340.6L245.9 335.0L245.1 329.2L244.4 323.3L244.0 317.3L243.6 311.2L243.5 305.1L243.5 298.9L243.6 292.8L244.0 286.7L244.4 280.7L245.1 274.8L245.9 269.0L246.8 263.4L247.9 258.0L249.1 252.8L250.5 247.8L251.9 243.1L253.6 238.7L255.3 234.6L257.1 230.8L259.0 227.4L261.0 224.3L263.1 221.6 M264.5 382.4L262.6 379.7L260.9 376.6L259.1 373.2L257.5 369.4L256.0 365.3L254.6 360.9L253.2 356.2L252.0 351.2L250.9 346.0L250.0 340.6L249.1 335.0L248.4 329.2L247.9 323.3L247.4 317.3L247.1 311.2L247.0 305.1L247.0 298.9L247.1 292.8L247.4 286.7L247.9 280.7L248.4 274.8L249.1 269.0L250.0 263.4L250.9 258.0L252.0 252.8L253.2 247.8L254.6 243.1L256.0 238.7L257.5 234.6L259.1 230.8L260.9 227.4L262.6 224.3L264.5 221.6 M265.9 382.4L264.3 379.7L262.7 376.6L261.2 373.2L259.8 369.4L258.5 365.3L257.2 360.9L256.1 356.2L255.0 351.2L254.0 346.0L253.2 340.6L252.4 335.0L251.8 329.2L251.3 323.3L250.9 317.3L250.7 311.2L250.6 305.1L250.6 298.9L250.7 292.8L250.9 286.7L251.3 280.7L251.8 274.8L252.4 269.0L253.2 263.4L254.0 258.0L255.0 252.8L256.1 247.8L257.2 243.1L258.5 238.7L259.8 234.6L261.2 230.8L262.7 227.4L264.3 224.3L265.9 221.6 M267.4 382.4L266.0 379.7L264.7 376.6L263.4 373.2L262.1 369.4L261.0 365.3L259.9 360.9L258.9 356.2L258.0 351.2L257.2 346.0L256.4 340.6L255.8 335.0L255.3 329.2L254.8 323.3L254.5 317.3L254.3 311.2L254.2 305.1L254.2 298.9L254.3 292.8L254.5 286.7L254.8 280.7L255.3 274.8L255.8 269.0L256.4 263.4L257.2 258.0L258.0 252.8L258.9 247.8L259.9 243.1L261.0 238.7L262.1 234.6L263.4 230.8L264.7 227.4L266.0 224.3L267.4 221.6 M268.9 382.4L267.7 379.7L266.6 376.6L265.5 373.2L264.5 369.4L263.5 365.3L262.6 360.9L261.8 356.2L261.0 351.2L260.3 346.0L259.7 340.6L259.2 335.0L258.7 329.2L258.4 323.3L258.1 317.3L257.9 311.2L257.8 305.1L257.8 298.9L257.9 292.8L258.1 286.7L258.4 280.7L258.7 274.8L259.2 269.0L259.7 263.4L260.3 258.0L261.0 252.8L261.8 247.8L262.6 243.1L263.5 238.7L264.5 234.6L265.5 230.8L266.6 227.4L267.7 224.3L268.9 221.6 M270.4 382.4L269.5 379.7L268.6 376.6L267.7 373.2L266.9 369.4L266.1 365.3L265.4 360.9L264.7 356.2L264.1 351.2L263.5 346.0L263.0 340.6L262.6 335.0L262.3 329.2L262.0 323.3L261.7 317.3L261.6 311.2L261.5 305.1L261.5 298.9L261.6 292.8L261.7 286.7L262.0 280.7L262.3 274.8L262.6 269.0L263.0 263.4L263.5 258.0L264.1 252.8L264.7 247.8L265.4 243.1L266.1 238.7L266.9 234.6L267.7 230.8L268.6 227.4L269.5 224.3L270.4 221.6 M271.9 382.4L271.2 379.7L270.5 376.6L269.9 373.2L269.3 369.4L268.7 365.3L268.1 360.9L267.6 356.2L267.2 351.2L266.8 346.0L266.4 340.6L266.1 335.0L265.8 329.2L265.6 323.3L265.4 317.3L265.3 311.2L265.2 305.1L265.2 298.9L265.3 292.8L265.4 286.7L265.6 280.7L265.8 274.8L266.1 269.0L266.4 263.4L266.8 258.0L267.2 252.8L267.6 247.8L268.1 243.1L268.7 238.7L269.3 234.6L269.9 230.8L270.5 227.4L271.2 224.3L271.9 221.6 M273.4 382.4L273.0 379.7L272.5 376.6L272.1 373.2L271.7 369.4L271.3 365.3L270.9 360.9L270.6 356.2L270.3 351.2L270.0 346.0L269.7 340.6L269.5 335.0L269.4 329.2L269.2 323.3L269.1 317.3L269.0 311.2L269.0 305.1L269.0 298.9L269.0 292.8L269.1 286.7L269.2 280.7L269.4 274.8L269.5 269.0L269.7 263.4L270.0 258.0L270.3 252.8L270.6 247.8L270.9 243.1L271.3 238.7L271.7 234.6L272.1 230.8L272.5 227.4L273.0 224.3L273.4 221.6 M275.0 382.4L274.7 379.7L274.5 376.6L274.3 373.2L274.1 369.4L273.9 365.3L273.7 360.9L273.5 356.2L273.4 351.2L273.2 346.0L273.1 340.6L273.0 335.0L272.9 329.2L272.8 323.3L272.8 317.3L272.8 311.2L272.7 305.1L272.7 298.9L272.8 292.8L272.8 286.7L272.8 280.7L272.9 274.8L273.0 269.0L273.1 263.4L273.2 258.0L273.4 252.8L273.5 247.8L273.7 243.1L273.9 238.7L274.1 234.6L274.3 230.8L274.5 227.4L274.7 224.3L275.0 221.6 M276.5 382.4L276.5 379.7L276.5 376.6L276.5 373.2L276.5 369.4L276.5 365.3L276.5 360.9L276.5 356.2L276.5 351.2L276.5 346.0L276.5 340.6L276.5 335.0L276.5 329.2L276.5 323.3L276.5 317.3L276.5 311.2L276.5 305.1L276.5 298.9L276.5 292.8L276.5 286.7L276.5 280.7L276.5 274.8L276.5 269.0L276.5 263.4L276.5 258.0L276.5 252.8L276.5 247.8L276.5 243.1L276.5 238.7L276.5 234.6L276.5 230.8L276.5 227.4L276.5 224.3L276.5 221.6 M278.0 382.4L278.3 379.7L278.5 376.6L278.7 373.2L278.9 369.4L279.1 365.3L279.3 360.9L279.5 356.2L279.6 351.2L279.8 346.0L279.9 340.6L280.0 335.0L280.1 329.2L280.2 323.3L280.2 317.3L280.2 311.2L280.3 305.1L280.3 298.9L280.2 292.8L280.2 286.7L280.2 280.7L280.1 274.8L280.0 269.0L279.9 263.4L279.8 258.0L279.6 252.8L279.5 247.8L279.3 243.1L279.1 238.7L278.9 234.6L278.7 230.8L278.5 227.4L278.3 224.3L278.0 221.6 M279.6 382.4L280.0 379.7L280.5 376.6L280.9 373.2L281.3 369.4L281.7 365.3L282.1 360.9L282.4 356.2L282.7 351.2L283.0 346.0L283.3 340.6L283.5 335.0L283.6 329.2L283.8 323.3L283.9 317.3L284.0 311.2L284.0 305.1L284.0 298.9L284.0 292.8L283.9 286.7L283.8 280.7L283.6 274.8L283.5 269.0L283.3 263.4L283.0 258.0L282.7 252.8L282.4 247.8L282.1 243.1L281.7 238.7L281.3 234.6L280.9 230.8L280.5 227.4L280.0 224.3L279.6 221.6 M281.1 382.4L281.8 379.7L282.5 376.6L283.1 373.2L283.7 369.4L284.3 365.3L284.9 360.9L285.4 356.2L285.8 351.2L286.2 346.0L286.6 340.6L286.9 335.0L287.2 329.2L287.4 323.3L287.6 317.3L287.7 311.2L287.8 305.1L287.8 298.9L287.7 292.8L287.6 286.7L287.4 280.7L287.2 274.8L286.9 269.0L286.6 263.4L286.2 258.0L285.8 252.8L285.4 247.8L284.9 243.1L284.3 238.7L283.7 234.6L283.1 230.8L282.5 227.4L281.8 224.3L281.1 221.6 M282.6 382.4L283.5 379.7L284.4 376.6L285.3 373.2L286.1 369.4L286.9 365.3L287.6 360.9L288.3 356.2L288.9 351.2L289.5 346.0L290.0 340.6L290.4 335.0L290.7 329.2L291.0 323.3L291.3 317.3L291.4 311.2L291.5 305.1L291.5 298.9L291.4 292.8L291.3 286.7L291.0 280.7L290.7 274.8L290.4 269.0L290.0 263.4L289.5 258.0L288.9 252.8L288.3 247.8L287.6 243.1L286.9 238.7L286.1 234.6L285.3 230.8L284.4 227.4L283.5 224.3L282.6 221.6 M284.1 382.4L285.3 379.7L286.4 376.6L287.5 373.2L288.5 369.4L289.5 365.3L290.4 360.9L291.2 356.2L292.0 351.2L292.7 346.0L293.3 340.6L293.8 335.0L294.3 329.2L294.6 323.3L294.9 317.3L295.1 311.2L295.2 305.1L295.2 298.9L295.1 292.8L294.9 286.7L294.6 280.7L294.3 274.8L293.8 269.0L293.3 263.4L292.7 258.0L292.0 252.8L291.2 247.8L290.4 243.1L289.5 238.7L288.5 234.6L287.5 230.8L286.4 227.4L285.3 224.3L284.1 221.6 M285.6 382.4L287.0 379.7L288.3 376.6L289.6 373.2L290.9 369.4L292.0 365.3L293.1 360.9L294.1 356.2L295.0 351.2L295.8 346.0L296.6 340.6L297.2 335.0L297.7 329.2L298.2 323.3L298.5 317.3L298.7 311.2L298.8 305.1L298.8 298.9L298.7 292.8L298.5 286.7L298.2 280.7L297.7 274.8L297.2 269.0L296.6 263.4L295.8 258.0L295.0 252.8L294.1 247.8L293.1 243.1L292.0 238.7L290.9 234.6L289.6 230.8L288.3 227.4L287.0 224.3L285.6 221.6 M287.1 382.4L288.7 379.7L290.3 376.6L291.8 373.2L293.2 369.4L294.5 365.3L295.8 360.9L296.9 356.2L298.0 351.2L299.0 346.0L299.8 340.6L300.6 335.0L301.2 329.2L301.7 323.3L302.1 317.3L302.3 311.2L302.4 305.1L302.4 298.9L302.3 292.8L302.1 286.7L301.7 280.7L301.2 274.8L300.6 269.0L299.8 263.4L299.0 258.0L298.0 252.8L296.9 247.8L295.8 243.1L294.5 238.7L293.2 234.6L291.8 230.8L290.3 227.4L288.7 224.3L287.1 221.6 M288.5 382.4L290.4 379.7L292.1 376.6L293.9 373.2L295.5 369.4L297.0 365.3L298.4 360.9L299.8 356.2L301.0 351.2L302.1 346.0L303.0 340.6L303.9 335.0L304.6 329.2L305.1 323.3L305.6 317.3L305.9 311.2L306.0 305.1L306.0 298.9L305.9 292.8L305.6 286.7L305.1 280.7L304.6 274.8L303.9 269.0L303.0 263.4L302.1 258.0L301.0 252.8L299.8 247.8L298.4 243.1L297.0 238.7L295.5 234.6L293.9 230.8L292.1 227.4L290.4 224.3L288.5 221.6 M289.9 382.4L292.0 379.7L294.0 376.6L295.9 373.2L297.7 369.4L299.4 365.3L301.1 360.9L302.5 356.2L303.9 351.2L305.1 346.0L306.2 340.6L307.1 335.0L307.9 329.2L308.6 323.3L309.0 317.3L309.4 311.2L309.5 305.1L309.5 298.9L309.4 292.8L309.0 286.7L308.6 280.7L307.9 274.8L307.1 269.0L306.2 263.4L305.1 258.0L303.9 252.8L302.5 247.8L301.1 243.1L299.4 238.7L297.7 234.6L295.9 230.8L294.0 227.4L292.0 224.3L289.9 221.6 M291.3 382.4L293.6 379.7L295.8 376.6L298.0 373.2L300.0 369.4L301.9 365.3L303.6 360.9L305.3 356.2L306.8 351.2L308.1 346.0L309.3 340.6L310.3 335.0L311.2 329.2L311.9 323.3L312.4 317.3L312.8 311.2L313.0 305.1L313.0 298.9L312.8 292.8L312.4 286.7L311.9 280.7L311.2 274.8L310.3 269.0L309.3 263.4L308.1 258.0L306.8 252.8L305.3 247.8L303.6 243.1L301.9 238.7L300.0 234.6L298.0 230.8L295.8 227.4L293.6 224.3L291.3 221.6 M292.7 382.4L295.2 379.7L297.6 376.6L299.9 373.2L302.1 369.4L304.2 365.3L306.1 360.9L307.9 356.2L309.6 351.2L311.0 346.0L312.3 340.6L313.5 335.0L314.4 329.2L315.2 323.3L315.8 317.3L316.2 311.2L316.4 305.1L316.4 298.9L316.2 292.8L315.8 286.7L315.2 280.7L314.4 274.8L313.5 269.0L312.3 263.4L311.0 258.0L309.6 252.8L307.9 247.8L306.1 243.1L304.2 238.7L302.1 234.6L299.9 230.8L297.6 227.4L295.2 224.3L292.7 221.6 M294.1 382.4L296.8 379.7L299.4 376.6L301.9 373.2L304.3 369.4L306.5 365.3L308.6 360.9L310.5 356.2L312.3 351.2L313.9 346.0L315.3 340.6L316.6 335.0L317.6 329.2L318.4 323.3L319.0 317.3L319.5 311.2L319.7 305.1L319.7 298.9L319.5 292.8L319.0 286.7L318.4 280.7L317.6 274.8L316.6 269.0L315.3 263.4L313.9 258.0L312.3 252.8L310.5 247.8L308.6 243.1L306.5 238.7L304.3 234.6L301.9 230.8L299.4 227.4L296.8 224.3L294.1 221.6 M295.4 382.4L298.3 379.7L301.1 376.6L303.8 373.2L306.3 369.4L308.8 365.3L311.0 360.9L313.1 356.2L315.0 351.2L316.7 346.0L318.2 340.6L319.6 335.0L320.7 329.2L321.6 323.3L322.2 317.3L322.7 311.2L322.9 305.1L322.9 298.9L322.7 292.8L322.2 286.7L321.6 280.7L320.7 274.8L319.6 269.0L318.2 263.4L316.7 258.0L315.0 252.8L313.1 247.8L311.0 243.1L308.8 238.7L306.3 234.6L303.8 230.8L301.1 227.4L298.3 224.3L295.4 221.6 M296.7 382.4L299.8 379.7L302.8 376.6L305.6 373.2L308.4 369.4L310.9 365.3L313.4 360.9L315.6 356.2L317.6 351.2L319.4 346.0L321.1 340.6L322.5 335.0L323.7 329.2L324.6 323.3L325.3 317.3L325.8 311.2L326.1 305.1L326.1 298.9L325.8 292.8L325.3 286.7L324.6 280.7L323.7 274.8L322.5 269.0L321.1 263.4L319.4 258.0L317.6 252.8L315.6 247.8L313.4 243.1L310.9 238.7L308.4 234.6L305.6 230.8L302.8 227.4L299.8 224.3L296.7 221.6 M297.9 382.4L301.2 379.7L304.4 376.6L307.4 373.2L310.3 369.4L313.1 365.3L315.6 360.9L318.0 356.2L320.2 351.2L322.1 346.0L323.8 340.6L325.3 335.0L326.6 329.2L327.6 323.3L328.4 317.3L328.9 311.2L329.1 305.1L329.1 298.9L328.9 292.8L328.4 286.7L327.6 280.7L326.6 274.8L325.3 269.0L323.8 263.4L322.1 258.0L320.2 252.8L318.0 247.8L315.6 243.1L313.1 238.7L310.3 234.6L307.4 230.8L304.4 227.4L301.2 224.3L297.9 221.6 M299.1 382.4L302.6 379.7L306.0 376.6L309.2 373.2L312.3 369.4L315.1 365.3L317.8 360.9L320.3 356.2L322.6 351.2L324.7 346.0L326.5 340.6L328.1 335.0L329.4 329.2L330.5 323.3L331.3 317.3L331.8 311.2L332.1 305.1L332.1 298.9L331.8 292.8L331.3 286.7L330.5 280.7L329.4 274.8L328.1 269.0L326.5 263.4L324.7 258.0L322.6 252.8L320.3 247.8L317.8 243.1L315.1 238.7L312.3 234.6L309.2 230.8L306.0 227.4L302.6 224.3L299.1 221.6 M300.3 382.4L304.0 379.7L307.5 376.6L310.9 373.2L314.1 369.4L317.1 365.3L320.0 360.9L322.6 356.2L325.0 351.2L327.1 346.0L329.1 340.6L330.7 335.0L332.1 329.2L333.2 323.3L334.1 317.3L334.7 311.2L334.9 305.1L334.9 298.9L334.7 292.8L334.1 286.7L333.2 280.7L332.1 274.8L330.7 269.0L329.1 263.4L327.1 258.0L325.0 252.8L322.6 247.8L320.0 243.1L317.1 238.7L314.1 234.6L310.9 230.8L307.5 227.4L304.0 224.3L300.3 221.6 M301.4 382.4L305.3 379.7L309.0 376.6L312.5 373.2L315.9 369.4L319.0 365.3L322.0 360.9L324.8 356.2L327.3 351.2L329.5 346.0L331.5 340.6L333.3 335.0L334.7 329.2L335.9 323.3L336.8 317.3L337.4 311.2L337.7 305.1L337.7 298.9L337.4 292.8L336.8 286.7L335.9 280.7L334.7 274.8L333.3 269.0L331.5 263.4L329.5 258.0L327.3 252.8L324.8 247.8L322.0 243.1L319.0 238.7L315.9 234.6L312.5 230.8L309.0 227.4L305.3 224.3L301.4 221.6 M302.5 382.4L306.5 379.7L310.4 376.6L314.1 373.2L317.6 369.4L320.9 365.3L324.0 360.9L326.8 356.2L329.5 351.2L331.8 346.0L333.9 340.6L335.7 335.0L337.3 329.2L338.5 323.3L339.4 317.3L340.0 311.2L340.3 305.1L340.3 298.9L340.0 292.8L339.4 286.7L338.5 280.7L337.3 274.8L335.7 269.0L333.9 263.4L331.8 258.0L329.5 252.8L326.8 247.8L324.0 243.1L320.9 238.7L317.6 234.6L314.1 230.8L310.4 227.4L306.5 224.3L302.5 221.6 M303.5 382.4L307.7 379.7L311.7 376.6L315.5 373.2L319.2 369.4L322.6 365.3L325.9 360.9L328.8 356.2L331.6 351.2L334.0 346.0L336.2 340.6L338.1 335.0L339.7 329.2L340.9 323.3L341.9 317.3L342.6 311.2L342.9 305.1L342.9 298.9L342.6 292.8L341.9 286.7L340.9 280.7L339.7 274.8L338.1 269.0L336.2 263.4L334.0 258.0L331.6 252.8L328.8 247.8L325.9 243.1L322.6 238.7L319.2 234.6L315.5 230.8L311.7 227.4L307.7 224.3L303.5 221.6 M304.5 382.4L308.8 379.7L313.0 376.6L317.0 373.2L320.7 369.4L324.3 365.3L327.6 360.9L330.7 356.2L333.6 351.2L336.1 346.0L338.4 340.6L340.3 335.0L342.0 329.2L343.3 323.3L344.3 317.3L344.9 311.2L345.3 305.1L345.3 298.9L344.9 292.8L344.3 286.7L343.3 280.7L342.0 274.8L340.3 269.0L338.4 263.4L336.1 258.0L333.6 252.8L330.7 247.8L327.6 243.1L324.3 238.7L320.7 234.6L317.0 230.8L313.0 227.4L308.8 224.3L304.5 221.6 M305.4 382.4L309.9 379.7L314.2 376.6L318.3 373.2L322.2 369.4L325.9 365.3L329.3 360.9L332.5 356.2L335.4 351.2L338.1 346.0L340.4 340.6L342.4 335.0L344.1 329.2L345.5 323.3L346.5 317.3L347.2 311.2L347.6 305.1L347.6 298.9L347.2 292.8L346.5 286.7L345.5 280.7L344.1 274.8L342.4 269.0L340.4 263.4L338.1 258.0L335.4 252.8L332.5 247.8L329.3 243.1L325.9 238.7L322.2 234.6L318.3 230.8L314.2 227.4L309.9 224.3L305.4 221.6 M306.3 382.4L310.9 379.7L315.3 376.6L319.6 373.2L323.6 369.4L327.4 365.3L330.9 360.9L334.2 356.2L337.2 351.2L339.9 346.0L342.3 340.6L344.4 335.0L346.2 329.2L347.6 323.3L348.6 317.3L349.4 311.2L349.7 305.1L349.7 298.9L349.4 292.8L348.6 286.7L347.6 280.7L346.2 274.8L344.4 269.0L342.3 263.4L339.9 258.0L337.2 252.8L334.2 247.8L330.9 243.1L327.4 238.7L323.6 234.6L319.6 230.8L315.3 227.4L310.9 224.3L306.3 221.6 M307.1 382.4L311.8 379.7L316.4 376.6L320.7 373.2L324.9 369.4L328.8 365.3L332.4 360.9L335.8 356.2L338.9 351.2L341.7 346.0L344.2 340.6L346.3 335.0L348.1 329.2L349.5 323.3L350.6 317.3L351.4 311.2L351.7 305.1L351.7 298.9L351.4 292.8L350.6 286.7L349.5 280.7L348.1 274.8L346.3 269.0L344.2 263.4L341.7 258.0L338.9 252.8L335.8 247.8L332.4 243.1L328.8 238.7L324.9 234.6L320.7 230.8L316.4 227.4L311.8 224.3L307.1 221.6 M307.9 382.4L312.7 379.7L317.4 376.6L321.8 373.2L326.1 369.4L330.1 365.3L333.8 360.9L337.3 356.2L340.5 351.2L343.3 346.0L345.8 340.6L348.0 335.0L349.9 329.2L351.4 323.3L352.5 317.3L353.2 311.2L353.6 305.1L353.6 298.9L353.2 292.8L352.5 286.7L351.4 280.7L349.9 274.8L348.0 269.0L345.8 263.4L343.3 258.0L340.5 252.8L337.3 247.8L333.8 243.1L330.1 238.7L326.1 234.6L321.8 230.8L317.4 227.4L312.7 224.3L307.9 221.6 M308.6 382.4L313.5 379.7L318.3 376.6L322.9 373.2L327.2 369.4L331.3 365.3L335.1 360.9L338.7 356.2L341.9 351.2L344.8 346.0L347.4 340.6L349.6 335.0L351.5 329.2L353.0 323.3L354.2 317.3L355.0 311.2L355.3 305.1L355.3 298.9L355.0 292.8L354.2 286.7L353.0 280.7L351.5 274.8L349.6 269.0L347.4 263.4L344.8 258.0L341.9 252.8L338.7 247.8L335.1 243.1L331.3 238.7L327.2 234.6L322.9 230.8L318.3 227.4L313.5 224.3L308.6 221.6 M309.2 382.4L314.3 379.7L319.2 376.6L323.8 373.2L328.2 369.4L332.4 365.3L336.3 360.9L339.9 356.2L343.2 351.2L346.2 346.0L348.8 340.6L351.1 335.0L353.0 329.2L354.6 323.3L355.8 317.3L356.5 311.2L356.9 305.1L356.9 298.9L356.5 292.8L355.8 286.7L354.6 280.7L353.0 274.8L351.1 269.0L348.8 263.4L346.2 258.0L343.2 252.8L339.9 247.8L336.3 243.1L332.4 238.7L328.2 234.6L323.8 230.8L319.2 227.4L314.3 224.3L309.2 221.6 M309.8 382.4L315.0 379.7L319.9 376.6L324.7 373.2L329.2 369.4L333.4 365.3L337.4 360.9L341.1 356.2L344.4 351.2L347.5 346.0L350.1 340.6L352.5 335.0L354.4 329.2L356.0 323.3L357.2 317.3L358.0 311.2L358.4 305.1L358.4 298.9L358.0 292.8L357.2 286.7L356.0 280.7L354.4 274.8L352.5 269.0L350.1 263.4L347.5 258.0L344.4 252.8L341.1 247.8L337.4 243.1L333.4 238.7L329.2 234.6L324.7 230.8L319.9 227.4L315.0 224.3L309.8 221.6 M310.4 382.4L315.6 379.7L320.6 376.6L325.4 373.2L330.0 369.4L334.3 365.3L338.4 360.9L342.1 356.2L345.5 351.2L348.6 346.0L351.3 340.6L353.7 335.0L355.7 329.2L357.3 323.3L358.5 317.3L359.3 311.2L359.7 305.1L359.7 298.9L359.3 292.8L358.5 286.7L357.3 280.7L355.7 274.8L353.7 269.0L351.3 263.4L348.6 258.0L345.5 252.8L342.1 247.8L338.4 243.1L334.3 238.7L330.0 234.6L325.4 230.8L320.6 227.4L315.6 224.3L310.4 221.6 M310.8 382.4L316.1 379.7L321.2 376.6L326.1 373.2L330.7 369.4L335.1 365.3L339.2 360.9L343.0 356.2L346.5 351.2L349.6 346.0L352.3 340.6L354.7 335.0L356.7 329.2L358.4 323.3L359.6 317.3L360.4 311.2L360.8 305.1L360.8 298.9L360.4 292.8L359.6 286.7L358.4 280.7L356.7 274.8L354.7 269.0L352.3 263.4L349.6 258.0L346.5 252.8L343.0 247.8L339.2 243.1L335.1 238.7L330.7 234.6L326.1 230.8L321.2 227.4L316.1 224.3L310.8 221.6 M311.2 382.4L316.6 379.7L321.7 376.6L326.7 373.2L331.4 369.4L335.8 365.3L339.9 360.9L343.8 356.2L347.3 351.2L350.4 346.0L353.2 340.6L355.7 335.0L357.7 329.2L359.3 323.3L360.6 317.3L361.4 311.2L361.8 305.1L361.8 298.9L361.4 292.8L360.6 286.7L359.3 280.7L357.7 274.8L355.7 269.0L353.2 263.4L350.4 258.0L347.3 252.8L343.8 247.8L339.9 243.1L335.8 238.7L331.4 234.6L326.7 230.8L321.7 227.4L316.6 224.3L311.2 221.6 M311.6 382.4L317.0 379.7L322.2 376.6L327.2 373.2L331.9 369.4L336.4 365.3L340.6 360.9L344.4 356.2L348.0 351.2L351.2 346.0L354.0 340.6L356.4 335.0L358.5 329.2L360.1 323.3L361.4 317.3L362.2 311.2L362.7 305.1L362.7 298.9L362.2 292.8L361.4 286.7L360.1 280.7L358.5 274.8L356.4 269.0L354.0 263.4L351.2 258.0L348.0 252.8L344.4 247.8L340.6 243.1L336.4 238.7L331.9 234.6L327.2 230.8L322.2 227.4L317.0 224.3L311.6 221.6 M311.8 382.4L317.3 379.7L322.5 376.6L327.6 373.2L332.3 369.4L336.9 365.3L341.1 360.9L345.0 356.2L348.5 351.2L351.7 346.0L354.6 340.6L357.1 335.0L359.1 329.2L360.8 323.3L362.1 317.3L362.9 311.2L363.3 305.1L363.3 298.9L362.9 292.8L362.1 286.7L360.8 280.7L359.1 274.8L357.1 269.0L354.6 263.4L351.7 258.0L348.5 252.8L345.0 247.8L341.1 243.1L336.9 238.7L332.3 234.6L327.6 230.8L322.5 227.4L317.3 224.3L311.8 221.6 M312.0 382.4L317.5 379.7L322.8 376.6L327.9 373.2L332.7 369.4L337.2 365.3L341.5 360.9L345.4 356.2L349.0 351.2L352.2 346.0L355.1 340.6L357.5 335.0L359.6 329.2L361.3 323.3L362.6 317.3L363.4 311.2L363.8 305.1L363.8 298.9L363.4 292.8L362.6 286.7L361.3 280.7L359.6 274.8L357.5 269.0L355.1 263.4L352.2 258.0L349.0 252.8L345.4 247.8L341.5 243.1L337.2 238.7L332.7 234.6L327.9 230.8L322.8 227.4L317.5 224.3L312.0 221.6 M312.2 382.4L317.7 379.7L323.0 376.6L328.1 373.2L332.9 369.4L337.5 365.3L341.7 360.9L345.7 356.2L349.3 351.2L352.5 346.0L355.4 340.6L357.9 335.0L360.0 329.2L361.7 323.3L362.9 317.3L363.8 311.2L364.2 305.1L364.2 298.9L363.8 292.8L362.9 286.7L361.7 280.7L360.0 274.8L357.9 269.0L355.4 263.4L352.5 258.0L349.3 252.8L345.7 247.8L341.7 243.1L337.5 238.7L332.9 234.6L328.1 230.8L323.0 227.4L317.7 224.3L312.2 221.6 M312.3 382.4L317.8 379.7L323.1 376.6L328.2 373.2L333.0 369.4L337.6 365.3L341.9 360.9L345.8 356.2L349.4 351.2L352.7 346.0L355.6 340.6L358.1 335.0L360.2 329.2L361.8 323.3L363.1 317.3L364.0 311.2L364.4 305.1L364.4 298.9L364.0 292.8L363.1 286.7L361.8 280.7L360.2 274.8L358.1 269.0L355.6 263.4L352.7 258.0L349.4 252.8L345.8 247.8L341.9 243.1L337.6 238.7L333.0 234.6L328.2 230.8L323.1 227.4L317.8 224.3L312.3 221.6 M312.3 382.4L317.8 379.7L323.1 376.6L328.2 373.2L333.1 369.4L337.6 365.3L341.9 360.9L345.8 356.2L349.5 351.2L352.7 346.0L352.7 258.0L349.5 252.8L345.8 247.8L341.9 243.1L337.6 238.7L333.1 234.6L328.2 230.8L323.1 227.4L317.8 224.3L312.3 221.6" stroke="#9890a8" stroke-width="0.6" fill="none"/></g><circle cx="276.5" cy="302" r="69.0" fill="none" stroke="#9a92aa" stroke-width="0.9"/></svg>
<svg style="left:422px;top:231px;overflow:hidden" width="341.2" height="144.2" viewBox="422 231 341.2 144.2"><defs><radialGradient id="gbr" cx="60%" cy="40%" r="60%"><stop offset="0" stop-color="#ebe6f0"/><stop offset=".75" stop-color="#d8d2e2"/><stop offset="1" stop-color="#b4acc0"/></radialGradient><clipPath id="cbr"><circle cx="518.6" cy="311.8" r="70.4"/></clipPath></defs><circle cx="518.6" cy="311.8" r="70.4" fill="url(#gbr)"/><g clip-path="url(#cbr)"><path d="M463.1 381.4L463.3 381.4L463.7 381.4L464.3 381.4L465.3 381.4L466.5 381.4L467.9 381.4L469.6 381.4L471.6 381.4L473.7 381.4L476.1 381.4L478.7 381.4L481.5 381.4L484.5 381.4L487.6 381.4L490.9 381.4L494.3 381.4L497.8 381.4L501.5 381.4L505.2 381.4L509.0 381.4L512.8 381.4L516.7 381.4L520.5 381.4L524.4 381.4L528.2 381.4L532.0 381.4L535.7 381.4L539.4 381.4L542.9 381.4L546.3 381.4L549.6 381.4L552.7 381.4L555.7 381.4L558.5 381.4L561.1 381.4L563.5 381.4L565.6 381.4L567.6 381.4L569.3 381.4L570.7 381.4L571.9 381.4L572.9 381.4L573.5 381.4L573.9 381.4L574.1 381.4 M460.2 379.0L460.4 379.0L460.8 379.0L461.5 379.0L462.5 379.0L463.7 379.0L465.3 379.0L467.0 379.0L469.1 379.0L471.4 379.0L473.9 379.0L476.6 379.0L479.5 379.0L482.7 379.0L485.9 379.0L489.4 379.0L493.0 379.0L496.7 379.0L500.6 379.0L504.5 379.0L508.5 379.0L512.5 379.0L516.6 379.0L520.6 379.0L524.7 379.0L528.7 379.0L532.7 379.0L536.6 379.0L540.5 379.0L544.2 379.0L547.8 379.0L551.3 379.0L554.5 379.0L557.7 379.0L560.6 379.0L563.3 379.0L565.8 379.0L568.1 379.0L570.2 379.0L571.9 379.0L573.5 379.0L574.7 379.0L575.7 379.0L576.4 379.0L576.8 379.0L577.0 379.0 M457.4 376.4L457.5 376.4L458.0 376.4L458.7 376.4L459.8 376.4L461.1 376.4L462.7 376.4L464.6 376.4L466.7 376.4L469.1 376.4L471.7 376.4L474.6 376.4L477.6 376.4L480.9 376.4L484.4 376.4L488.0 376.4L491.8 376.4L495.7 376.4L499.7 376.4L503.8 376.4L508.0 376.4L512.2 376.4L516.5 376.4L520.7 376.4L525.0 376.4L529.2 376.4L533.4 376.4L537.5 376.4L541.5 376.4L545.4 376.4L549.2 376.4L552.8 376.4L556.3 376.4L559.6 376.4L562.6 376.4L565.5 376.4L568.1 376.4L570.5 376.4L572.6 376.4L574.5 376.4L576.1 376.4L577.4 376.4L578.5 376.4L579.2 376.4L579.7 376.4L579.8 376.4 M454.7 373.7L454.8 373.7L455.3 373.7L456.1 373.7L457.2 373.7L458.5 373.7L460.2 373.7L462.2 373.7L464.4 373.7L466.9 373.7L469.6 373.7L472.6 373.7L475.8 373.7L479.3 373.7L482.9 373.7L486.6 373.7L490.6 373.7L494.7 373.7L498.8 373.7L503.1 373.7L507.5 373.7L511.9 373.7L516.4 373.7L520.8 373.7L525.3 373.7L529.7 373.7L534.1 373.7L538.4 373.7L542.5 373.7L546.6 373.7L550.6 373.7L554.3 373.7L557.9 373.7L561.4 373.7L564.6 373.7L567.6 373.7L570.3 373.7L572.8 373.7L575.0 373.7L577.0 373.7L578.7 373.7L580.0 373.7L581.1 373.7L581.9 373.7L582.4 373.7L582.5 373.7 M452.1 370.9L452.3 370.9L452.7 370.9L453.6 370.9L454.7 370.9L456.1 370.9L457.8 370.9L459.9 370.9L462.2 370.9L464.8 370.9L467.7 370.9L470.8 370.9L474.1 370.9L477.7 370.9L481.4 370.9L485.3 370.9L489.4 370.9L493.7 370.9L498.0 370.9L502.5 370.9L507.1 370.9L511.6 370.9L516.3 370.9L520.9 370.9L525.6 370.9L530.1 370.9L534.7 370.9L539.2 370.9L543.5 370.9L547.8 370.9L551.9 370.9L555.8 370.9L559.5 370.9L563.1 370.9L566.4 370.9L569.5 370.9L572.4 370.9L575.0 370.9L577.3 370.9L579.4 370.9L581.1 370.9L582.5 370.9L583.6 370.9L584.5 370.9L584.9 370.9L585.1 370.9 M449.6 368.1L449.8 368.1L450.3 368.1L451.1 368.1L452.3 368.1L453.8 368.1L455.6 368.1L457.7 368.1L460.1 368.1L462.8 368.1L465.8 368.1L469.0 368.1L472.5 368.1L476.1 368.1L480.0 368.1L484.1 368.1L488.4 368.1L492.8 368.1L497.3 368.1L501.9 368.1L506.6 368.1L511.4 368.1L516.2 368.1L521.0 368.1L525.8 368.1L530.6 368.1L535.3 368.1L539.9 368.1L544.4 368.1L548.8 368.1L553.1 368.1L557.2 368.1L561.1 368.1L564.7 368.1L568.2 368.1L571.4 368.1L574.4 368.1L577.1 368.1L579.5 368.1L581.6 368.1L583.4 368.1L584.9 368.1L586.1 368.1L586.9 368.1L587.4 368.1L587.6 368.1 M447.3 365.1L447.5 365.1L448.0 365.1L448.8 365.1L450.1 365.1L451.6 365.1L453.5 365.1L455.6 365.1L458.1 365.1L460.9 365.1L464.0 365.1L467.3 365.1L470.9 365.1L474.7 365.1L478.7 365.1L482.9 365.1L487.3 365.1L491.9 365.1L496.6 365.1L501.3 365.1L506.2 365.1L511.1 365.1L516.1 365.1L521.1 365.1L526.1 365.1L531.0 365.1L535.9 365.1L540.6 365.1L545.3 365.1L549.9 365.1L554.3 365.1L558.5 365.1L562.5 365.1L566.3 365.1L569.9 365.1L573.2 365.1L576.3 365.1L579.1 365.1L581.6 365.1L583.7 365.1L585.6 365.1L587.1 365.1L588.4 365.1L589.2 365.1L589.7 365.1L589.9 365.1 M445.1 362.0L445.3 362.0L445.8 362.0L446.7 362.0L447.9 362.0L449.5 362.0L451.4 362.0L453.7 362.0L456.2 362.0L459.1 362.0L462.3 362.0L465.7 362.0L469.4 362.0L473.3 362.0L477.5 362.0L481.8 362.0L486.4 362.0L491.1 362.0L495.9 362.0L500.8 362.0L505.8 362.0L510.9 362.0L516.0 362.0L521.2 362.0L526.3 362.0L531.4 362.0L536.4 362.0L541.3 362.0L546.1 362.0L550.8 362.0L555.4 362.0L559.7 362.0L563.9 362.0L567.8 362.0L571.5 362.0L574.9 362.0L578.1 362.0L581.0 362.0L583.5 362.0L585.8 362.0L587.7 362.0L589.3 362.0L590.5 362.0L591.4 362.0L591.9 362.0L592.1 362.0 M443.0 358.8L443.2 358.8L443.7 358.8L444.7 358.8L445.9 358.8L447.6 358.8L449.5 358.8L451.8 358.8L454.5 358.8L457.4 358.8L460.7 358.8L464.2 358.8L468.0 358.8L472.1 358.8L476.3 358.8L480.8 358.8L485.5 358.8L490.3 358.8L495.2 358.8L500.3 358.8L505.5 358.8L510.7 358.8L516.0 358.8L521.2 358.8L526.5 358.8L531.7 358.8L536.9 358.8L542.0 358.8L546.9 358.8L551.7 358.8L556.4 358.8L560.9 358.8L565.1 358.8L569.2 358.8L573.0 358.8L576.5 358.8L579.8 358.8L582.7 358.8L585.4 358.8L587.7 358.8L589.6 358.8L591.3 358.8L592.5 358.8L593.5 358.8L594.0 358.8L594.2 358.8 M441.1 355.5L441.3 355.5L441.8 355.5L442.8 355.5L444.1 355.5L445.7 355.5L447.8 355.5L450.1 355.5L452.8 355.5L455.9 355.5L459.2 355.5L462.8 355.5L466.7 355.5L470.9 355.5L475.2 355.5L479.8 355.5L484.6 355.5L489.6 355.5L494.6 355.5L499.8 355.5L505.1 355.5L510.5 355.5L515.9 355.5L521.3 355.5L526.7 355.5L532.1 355.5L537.4 355.5L542.6 355.5L547.6 355.5L552.6 355.5L557.4 355.5L562.0 355.5L566.3 355.5L570.5 355.5L574.4 355.5L578.0 355.5L581.3 355.5L584.4 355.5L587.1 355.5L589.4 355.5L591.5 355.5L593.1 355.5L594.4 355.5L595.4 355.5L595.9 355.5L596.1 355.5 M439.3 352.1L439.5 352.1L440.0 352.1L441.0 352.1L442.3 352.1L444.0 352.1L446.1 352.1L448.6 352.1L451.3 352.1L454.4 352.1L457.8 352.1L461.5 352.1L465.5 352.1L469.8 352.1L474.2 352.1L478.9 352.1L483.8 352.1L488.9 352.1L494.1 352.1L499.4 352.1L504.8 352.1L510.3 352.1L515.8 352.1L521.4 352.1L526.9 352.1L532.4 352.1L537.8 352.1L543.1 352.1L548.3 352.1L553.4 352.1L558.3 352.1L563.0 352.1L567.4 352.1L571.7 352.1L575.7 352.1L579.4 352.1L582.8 352.1L585.9 352.1L588.6 352.1L591.1 352.1L593.2 352.1L594.9 352.1L596.2 352.1L597.2 352.1L597.7 352.1L597.9 352.1 M437.6 348.7L437.8 348.7L438.4 348.7L439.4 348.7L440.8 348.7L442.5 348.7L444.6 348.7L447.1 348.7L449.9 348.7L453.1 348.7L456.6 348.7L460.3 348.7L464.4 348.7L468.7 348.7L473.3 348.7L478.1 348.7L483.1 348.7L488.3 348.7L493.6 348.7L499.0 348.7L504.5 348.7L510.1 348.7L515.8 348.7L521.4 348.7L527.1 348.7L532.7 348.7L538.2 348.7L543.6 348.7L548.9 348.7L554.1 348.7L559.1 348.7L563.9 348.7L568.5 348.7L572.8 348.7L576.9 348.7L580.6 348.7L584.1 348.7L587.3 348.7L590.1 348.7L592.6 348.7L594.7 348.7L596.4 348.7L597.8 348.7L598.8 348.7L599.4 348.7L599.6 348.7 M436.1 345.2L436.3 345.2L436.9 345.2L437.9 345.2L439.3 345.2L441.1 345.2L443.2 345.2L445.8 345.2L448.6 345.2L451.9 345.2L455.4 345.2L459.3 345.2L463.4 345.2L467.8 345.2L472.5 345.2L477.4 345.2L482.4 345.2L487.7 345.2L493.1 345.2L498.6 345.2L504.3 345.2L510.0 345.2L515.7 345.2L521.5 345.2L527.2 345.2L532.9 345.2L538.6 345.2L544.1 345.2L549.5 345.2L554.8 345.2L559.8 345.2L564.7 345.2L569.4 345.2L573.8 345.2L577.9 345.2L581.8 345.2L585.3 345.2L588.6 345.2L591.4 345.2L594.0 345.2L596.1 345.2L597.9 345.2L599.3 345.2L600.3 345.2L600.9 345.2L601.1 345.2 M434.8 341.7L435.0 341.7L435.6 341.7L436.6 341.7L438.0 341.7L439.8 341.7L442.0 341.7L444.6 341.7L447.5 341.7L450.8 341.7L454.4 341.7L458.3 341.7L462.5 341.7L467.0 341.7L471.7 341.7L476.7 341.7L481.8 341.7L487.2 341.7L492.7 341.7L498.3 341.7L504.0 341.7L509.8 341.7L515.7 341.7L521.5 341.7L527.4 341.7L533.2 341.7L538.9 341.7L544.5 341.7L550.0 341.7L555.4 341.7L560.5 341.7L565.5 341.7L570.2 341.7L574.7 341.7L578.9 341.7L582.8 341.7L586.4 341.7L589.7 341.7L592.6 341.7L595.2 341.7L597.4 341.7L599.2 341.7L600.6 341.7L601.6 341.7L602.2 341.7L602.4 341.7 M433.6 338.0L433.8 338.0L434.4 338.0L435.4 338.0L436.9 338.0L438.7 338.0L440.9 338.0L443.5 338.0L446.5 338.0L449.8 338.0L453.5 338.0L457.4 338.0L461.7 338.0L466.2 338.0L471.0 338.0L476.1 338.0L481.3 338.0L486.7 338.0L492.3 338.0L498.0 338.0L503.8 338.0L509.7 338.0L515.6 338.0L521.6 338.0L527.5 338.0L533.4 338.0L539.2 338.0L544.9 338.0L550.5 338.0L555.9 338.0L561.1 338.0L566.2 338.0L571.0 338.0L575.5 338.0L579.8 338.0L583.7 338.0L587.4 338.0L590.7 338.0L593.7 338.0L596.3 338.0L598.5 338.0L600.3 338.0L601.8 338.0L602.8 338.0L603.4 338.0L603.6 338.0 M432.5 334.4L432.7 334.4L433.4 334.4L434.4 334.4L435.8 334.4L437.7 334.4L440.0 334.4L442.6 334.4L445.6 334.4L449.0 334.4L452.7 334.4L456.7 334.4L461.0 334.4L465.6 334.4L470.5 334.4L475.6 334.4L480.9 334.4L486.4 334.4L492.0 334.4L497.8 334.4L503.7 334.4L509.6 334.4L515.6 334.4L521.6 334.4L527.6 334.4L533.5 334.4L539.4 334.4L545.2 334.4L550.8 334.4L556.3 334.4L561.6 334.4L566.7 334.4L571.6 334.4L576.2 334.4L580.5 334.4L584.5 334.4L588.2 334.4L591.6 334.4L594.6 334.4L597.2 334.4L599.5 334.4L601.4 334.4L602.8 334.4L603.8 334.4L604.5 334.4L604.7 334.4 M431.6 330.7L431.8 330.7L432.5 330.7L433.5 330.7L435.0 330.7L436.9 330.7L439.1 330.7L441.8 330.7L444.8 330.7L448.2 330.7L452.0 330.7L456.0 330.7L460.4 330.7L465.1 330.7L470.0 330.7L475.1 330.7L480.5 330.7L486.0 330.7L491.7 330.7L497.6 330.7L503.5 330.7L509.5 330.7L515.6 330.7L521.6 330.7L527.7 330.7L533.7 330.7L539.6 330.7L545.5 330.7L551.2 330.7L556.7 330.7L562.1 330.7L567.2 330.7L572.1 330.7L576.8 330.7L581.2 330.7L585.2 330.7L589.0 330.7L592.4 330.7L595.4 330.7L598.1 330.7L600.3 330.7L602.2 330.7L603.7 330.7L604.7 330.7L605.4 330.7L605.6 330.7 M430.9 326.9L431.1 326.9L431.8 326.9L432.8 326.9L434.3 326.9L436.2 326.9L438.5 326.9L441.2 326.9L444.2 326.9L447.6 326.9L451.4 326.9L455.5 326.9L459.9 326.9L464.6 326.9L469.6 326.9L474.7 326.9L480.2 326.9L485.7 326.9L491.5 326.9L497.4 326.9L503.4 326.9L509.4 326.9L515.5 326.9L521.7 326.9L527.8 326.9L533.8 326.9L539.8 326.9L545.7 326.9L551.5 326.9L557.0 326.9L562.5 326.9L567.6 326.9L572.6 326.9L577.3 326.9L581.7 326.9L585.8 326.9L589.6 326.9L593.0 326.9L596.0 326.9L598.7 326.9L601.0 326.9L602.9 326.9L604.4 326.9L605.4 326.9L606.1 326.9L606.3 326.9 M430.3 323.2L430.5 323.2L431.2 323.2L432.3 323.2L433.8 323.2L435.7 323.2L438.0 323.2L440.7 323.2L443.7 323.2L447.2 323.2L451.0 323.2L455.1 323.2L459.5 323.2L464.3 323.2L469.2 323.2L474.5 323.2L479.9 323.2L485.5 323.2L491.3 323.2L497.2 323.2L503.3 323.2L509.4 323.2L515.5 323.2L521.7 323.2L527.8 323.2L533.9 323.2L540.0 323.2L545.9 323.2L551.7 323.2L557.3 323.2L562.7 323.2L568.0 323.2L572.9 323.2L577.7 323.2L582.1 323.2L586.2 323.2L590.0 323.2L593.5 323.2L596.5 323.2L599.2 323.2L601.5 323.2L603.4 323.2L604.9 323.2L606.0 323.2L606.7 323.2L606.9 323.2 M429.9 319.4L430.1 319.4L430.8 319.4L431.9 319.4L433.4 319.4L435.3 319.4L437.6 319.4L440.3 319.4L443.4 319.4L446.9 319.4L450.7 319.4L454.8 319.4L459.3 319.4L464.0 319.4L469.0 319.4L474.3 319.4L479.7 319.4L485.4 319.4L491.2 319.4L497.1 319.4L503.2 319.4L509.3 319.4L515.5 319.4L521.7 319.4L527.9 319.4L534.0 319.4L540.1 319.4L546.0 319.4L551.8 319.4L557.5 319.4L562.9 319.4L568.2 319.4L573.2 319.4L577.9 319.4L582.4 319.4L586.5 319.4L590.3 319.4L593.8 319.4L596.9 319.4L599.6 319.4L601.9 319.4L603.8 319.4L605.3 319.4L606.4 319.4L607.1 319.4L607.3 319.4 M429.7 315.6L429.9 315.6L430.5 315.6L431.6 315.6L433.1 315.6L435.0 315.6L437.4 315.6L440.1 315.6L443.2 315.6L446.7 315.6L450.5 315.6L454.6 315.6L459.1 315.6L463.9 315.6L468.9 315.6L474.1 315.6L479.6 315.6L485.3 315.6L491.1 315.6L497.1 315.6L503.2 315.6L509.3 315.6L515.5 315.6L521.7 315.6L527.9 315.6L534.0 315.6L540.1 315.6L546.1 315.6L551.9 315.6L557.6 315.6L563.1 315.6L568.3 315.6L573.3 315.6L578.1 315.6L582.6 315.6L586.7 315.6L590.5 315.6L594.0 315.6L597.1 315.6L599.8 315.6L602.2 315.6L604.1 315.6L605.6 315.6L606.7 315.6L607.3 315.6L607.5 315.6 M429.6 311.8L429.8 311.8L430.5 311.8L431.5 311.8L433.0 311.8L435.0 311.8L437.3 311.8L440.0 311.8L443.1 311.8L446.6 311.8L450.4 311.8L454.6 311.8L459.0 311.8L463.8 311.8L468.8 311.8L474.1 311.8L479.6 311.8L485.3 311.8L491.1 311.8L497.1 311.8L503.1 311.8L509.3 311.8L515.5 311.8L521.7 311.8L527.9 311.8L534.1 311.8L540.1 311.8L546.1 311.8L551.9 311.8L557.6 311.8L563.1 311.8L568.4 311.8L573.4 311.8L578.2 311.8L582.6 311.8L586.8 311.8L590.6 311.8L594.1 311.8L597.2 311.8L599.9 311.8L602.2 311.8L604.2 311.8L605.7 311.8L606.7 311.8L607.4 311.8L607.6 311.8 M429.7 308.0L429.9 308.0L430.5 308.0L431.6 308.0L433.1 308.0L435.0 308.0L437.4 308.0L440.1 308.0L443.2 308.0L446.7 308.0L450.5 308.0L454.6 308.0L459.1 308.0L463.9 308.0L468.9 308.0L474.1 308.0L479.6 308.0L485.3 308.0L491.1 308.0L497.1 308.0L503.2 308.0L509.3 308.0L515.5 308.0L521.7 308.0L527.9 308.0L534.0 308.0L540.1 308.0L546.1 308.0L551.9 308.0L557.6 308.0L563.1 308.0L568.3 308.0L573.3 308.0L578.1 308.0L582.6 308.0L586.7 308.0L590.5 308.0L594.0 308.0L597.1 308.0L599.8 308.0L602.2 308.0L604.1 308.0L605.6 308.0L606.7 308.0L607.3 308.0L607.5 308.0 M429.9 304.2L430.1 304.2L430.8 304.2L431.9 304.2L433.4 304.2L435.3 304.2L437.6 304.2L440.3 304.2L443.4 304.2L446.9 304.2L450.7 304.2L454.8 304.2L459.3 304.2L464.0 304.2L469.0 304.2L474.3 304.2L479.7 304.2L485.4 304.2L491.2 304.2L497.1 304.2L503.2 304.2L509.3 304.2L515.5 304.2L521.7 304.2L527.9 304.2L534.0 304.2L540.1 304.2L546.0 304.2L551.8 304.2L557.5 304.2L562.9 304.2L568.2 304.2L573.2 304.2L577.9 304.2L582.4 304.2L586.5 304.2L590.3 304.2L593.8 304.2L596.9 304.2L599.6 304.2L601.9 304.2L603.8 304.2L605.3 304.2L606.4 304.2L607.1 304.2L607.3 304.2 M430.3 300.4L430.5 300.4L431.2 300.4L432.3 300.4L433.8 300.4L435.7 300.4L438.0 300.4L440.7 300.4L443.7 300.4L447.2 300.4L451.0 300.4L455.1 300.4L459.5 300.4L464.3 300.4L469.2 300.4L474.5 300.4L479.9 300.4L485.5 300.4L491.3 300.4L497.2 300.4L503.3 300.4L509.4 300.4L515.5 300.4L521.7 300.4L527.8 300.4L533.9 300.4L540.0 300.4L545.9 300.4L551.7 300.4L557.3 300.4L562.7 300.4L568.0 300.4L572.9 300.4L577.7 300.4L582.1 300.4L586.2 300.4L590.0 300.4L593.5 300.4L596.5 300.4L599.2 300.4L601.5 300.4L603.4 300.4L604.9 300.4L606.0 300.4L606.7 300.4L606.9 300.4 M430.9 296.7L431.1 296.7L431.8 296.7L432.8 296.7L434.3 296.7L436.2 296.7L438.5 296.7L441.2 296.7L444.2 296.7L447.6 296.7L451.4 296.7L455.5 296.7L459.9 296.7L464.6 296.7L469.6 296.7L474.7 296.7L480.2 296.7L485.7 296.7L491.5 296.7L497.4 296.7L503.4 296.7L509.4 296.7L515.5 296.7L521.7 296.7L527.8 296.7L533.8 296.7L539.8 296.7L545.7 296.7L551.5 296.7L557.0 296.7L562.5 296.7L567.6 296.7L572.6 296.7L577.3 296.7L581.7 296.7L585.8 296.7L589.6 296.7L593.0 296.7L596.0 296.7L598.7 296.7L601.0 296.7L602.9 296.7L604.4 296.7L605.4 296.7L606.1 296.7L606.3 296.7 M431.6 292.9L431.8 292.9L432.5 292.9L433.5 292.9L435.0 292.9L436.9 292.9L439.1 292.9L441.8 292.9L444.8 292.9L448.2 292.9L452.0 292.9L456.0 292.9L460.4 292.9L465.1 292.9L470.0 292.9L475.1 292.9L480.5 292.9L486.0 292.9L491.7 292.9L497.6 292.9L503.5 292.9L509.5 292.9L515.6 292.9L521.6 292.9L527.7 292.9L533.7 292.9L539.6 292.9L545.5 292.9L551.2 292.9L556.7 292.9L562.1 292.9L567.2 292.9L572.1 292.9L576.8 292.9L581.2 292.9L585.2 292.9L589.0 292.9L592.4 292.9L595.4 292.9L598.1 292.9L600.3 292.9L602.2 292.9L603.7 292.9L604.7 292.9L605.4 292.9L605.6 292.9 M432.5 289.2L432.7 289.2L433.4 289.2L434.4 289.2L435.8 289.2L437.7 289.2L440.0 289.2L442.6 289.2L445.6 289.2L449.0 289.2L452.7 289.2L456.7 289.2L461.0 289.2L465.6 289.2L470.5 289.2L475.6 289.2L480.9 289.2L486.4 289.2L492.0 289.2L497.8 289.2L503.7 289.2L509.6 289.2L515.6 289.2L521.6 289.2L527.6 289.2L533.5 289.2L539.4 289.2L545.2 289.2L550.8 289.2L556.3 289.2L561.6 289.2L566.7 289.2L571.6 289.2L576.2 289.2L580.5 289.2L584.5 289.2L588.2 289.2L591.6 289.2L594.6 289.2L597.2 289.2L599.5 289.2L601.4 289.2L602.8 289.2L603.8 289.2L604.5 289.2L604.7 289.2 M433.6 285.6L433.8 285.6L434.4 285.6L435.4 285.6L436.9 285.6L438.7 285.6L440.9 285.6L443.5 285.6L446.5 285.6L449.8 285.6L453.5 285.6L457.4 285.6L461.7 285.6L466.2 285.6L471.0 285.6L476.1 285.6L481.3 285.6L486.7 285.6L492.3 285.6L498.0 285.6L503.8 285.6L509.7 285.6L515.6 285.6L521.6 285.6L527.5 285.6L533.4 285.6L539.2 285.6L544.9 285.6L550.5 285.6L555.9 285.6L561.1 285.6L566.2 285.6L571.0 285.6L575.5 285.6L579.8 285.6L583.7 285.6L587.4 285.6L590.7 285.6L593.7 285.6L596.3 285.6L598.5 285.6L600.3 285.6L601.8 285.6L602.8 285.6L603.4 285.6L603.6 285.6 M434.8 281.9L435.0 281.9L435.6 281.9L436.6 281.9L438.0 281.9L439.8 281.9L442.0 281.9L444.6 281.9L447.5 281.9L450.8 281.9L454.4 281.9L458.3 281.9L462.5 281.9L467.0 281.9L471.7 281.9L476.7 281.9L481.8 281.9L487.2 281.9L492.7 281.9L498.3 281.9L504.0 281.9L509.8 281.9L515.7 281.9L521.5 281.9L527.4 281.9L533.2 281.9L538.9 281.9L544.5 281.9L550.0 281.9L555.4 281.9L560.5 281.9L565.5 281.9L570.2 281.9L574.7 281.9L578.9 281.9L582.8 281.9L586.4 281.9L589.7 281.9L592.6 281.9L595.2 281.9L597.4 281.9L599.2 281.9L600.6 281.9L601.6 281.9L602.2 281.9L602.4 281.9 M436.1 278.4L436.3 278.4L436.9 278.4L437.9 278.4L439.3 278.4L441.1 278.4L443.2 278.4L445.8 278.4L448.6 278.4L451.9 278.4L455.4 278.4L459.3 278.4L463.4 278.4L467.8 278.4L472.5 278.4L477.4 278.4L482.4 278.4L487.7 278.4L493.1 278.4L498.6 278.4L504.3 278.4L510.0 278.4L515.7 278.4L521.5 278.4L527.2 278.4L532.9 278.4L538.6 278.4L544.1 278.4L549.5 278.4L554.8 278.4L559.8 278.4L564.7 278.4L569.4 278.4L573.8 278.4L577.9 278.4L581.8 278.4L585.3 278.4L588.6 278.4L591.4 278.4L594.0 278.4L596.1 278.4L597.9 278.4L599.3 278.4L600.3 278.4L600.9 278.4L601.1 278.4 M437.6 274.9L437.8 274.9L438.4 274.9L439.4 274.9L440.8 274.9L442.5 274.9L444.6 274.9L447.1 274.9L449.9 274.9L453.1 274.9L456.6 274.9L460.3 274.9L464.4 274.9L468.7 274.9L473.3 274.9L478.1 274.9L483.1 274.9L488.3 274.9L493.6 274.9L499.0 274.9L504.5 274.9L510.1 274.9L515.8 274.9L521.4 274.9L527.1 274.9L532.7 274.9L538.2 274.9L543.6 274.9L548.9 274.9L554.1 274.9L559.1 274.9L563.9 274.9L568.5 274.9L572.8 274.9L576.9 274.9L580.6 274.9L584.1 274.9L587.3 274.9L590.1 274.9L592.6 274.9L594.7 274.9L596.4 274.9L597.8 274.9L598.8 274.9L599.4 274.9L599.6 274.9 M439.3 271.5L439.5 271.5L440.0 271.5L441.0 271.5L442.3 271.5L444.0 271.5L446.1 271.5L448.6 271.5L451.3 271.5L454.4 271.5L457.8 271.5L461.5 271.5L465.5 271.5L469.8 271.5L474.2 271.5L478.9 271.5L483.8 271.5L488.9 271.5L494.1 271.5L499.4 271.5L504.8 271.5L510.3 271.5L515.8 271.5L521.4 271.5L526.9 271.5L532.4 271.5L537.8 271.5L543.1 271.5L548.3 271.5L553.4 271.5L558.3 271.5L563.0 271.5L567.4 271.5L571.7 271.5L575.7 271.5L579.4 271.5L582.8 271.5L585.9 271.5L588.6 271.5L591.1 271.5L593.2 271.5L594.9 271.5L596.2 271.5L597.2 271.5L597.7 271.5L597.9 271.5 M441.1 268.1L441.3 268.1L441.8 268.1L442.8 268.1L444.1 268.1L445.7 268.1L447.8 268.1L450.1 268.1L452.8 268.1L455.9 268.1L459.2 268.1L462.8 268.1L466.7 268.1L470.9 268.1L475.2 268.1L479.8 268.1L484.6 268.1L489.6 268.1L494.6 268.1L499.8 268.1L505.1 268.1L510.5 268.1L515.9 268.1L521.3 268.1L526.7 268.1L532.1 268.1L537.4 268.1L542.6 268.1L547.6 268.1L552.6 268.1L557.4 268.1L562.0 268.1L566.3 268.1L570.5 268.1L574.4 268.1L578.0 268.1L581.3 268.1L584.4 268.1L587.1 268.1L589.4 268.1L591.5 268.1L593.1 268.1L594.4 268.1L595.4 268.1L595.9 268.1L596.1 268.1 M443.0 264.8L443.2 264.8L443.7 264.8L444.7 264.8L445.9 264.8L447.6 264.8L449.5 264.8L451.8 264.8L454.5 264.8L457.4 264.8L460.7 264.8L464.2 264.8L468.0 264.8L472.1 264.8L476.3 264.8L480.8 264.8L485.5 264.8L490.3 264.8L495.2 264.8L500.3 264.8L505.5 264.8L510.7 264.8L516.0 264.8L521.2 264.8L526.5 264.8L531.7 264.8L536.9 264.8L542.0 264.8L546.9 264.8L551.7 264.8L556.4 264.8L560.9 264.8L565.1 264.8L569.2 264.8L573.0 264.8L576.5 264.8L579.8 264.8L582.7 264.8L585.4 264.8L587.7 264.8L589.6 264.8L591.3 264.8L592.5 264.8L593.5 264.8L594.0 264.8L594.2 264.8 M445.1 261.6L445.3 261.6L445.8 261.6L446.7 261.6L447.9 261.6L449.5 261.6L451.4 261.6L453.7 261.6L456.2 261.6L459.1 261.6L462.3 261.6L465.7 261.6L469.4 261.6L473.3 261.6L477.5 261.6L481.8 261.6L486.4 261.6L491.1 261.6L495.9 261.6L500.8 261.6L505.8 261.6L510.9 261.6L516.0 261.6L521.2 261.6L526.3 261.6L531.4 261.6L536.4 261.6L541.3 261.6L546.1 261.6L550.8 261.6L555.4 261.6L559.7 261.6L563.9 261.6L567.8 261.6L571.5 261.6L574.9 261.6L578.1 261.6L581.0 261.6L583.5 261.6L585.8 261.6L587.7 261.6L589.3 261.6L590.5 261.6L591.4 261.6L591.9 261.6L592.1 261.6 M447.3 258.5L447.5 258.5L448.0 258.5L448.8 258.5L450.1 258.5L451.6 258.5L453.5 258.5L455.6 258.5L458.1 258.5L460.9 258.5L464.0 258.5L467.3 258.5L470.9 258.5L474.7 258.5L478.7 258.5L482.9 258.5L487.3 258.5L491.9 258.5L496.6 258.5L501.3 258.5L506.2 258.5L511.1 258.5L516.1 258.5L521.1 258.5L526.1 258.5L531.0 258.5L535.9 258.5L540.6 258.5L545.3 258.5L549.9 258.5L554.3 258.5L558.5 258.5L562.5 258.5L566.3 258.5L569.9 258.5L573.2 258.5L576.3 258.5L579.1 258.5L581.6 258.5L583.7 258.5L585.6 258.5L587.1 258.5L588.4 258.5L589.2 258.5L589.7 258.5L589.9 258.5 M449.6 255.5L449.8 255.5L450.3 255.5L451.1 255.5L452.3 255.5L453.8 255.5L455.6 255.5L457.7 255.5L460.1 255.5L462.8 255.5L465.8 255.5L469.0 255.5L472.5 255.5L476.1 255.5L480.0 255.5L484.1 255.5L488.4 255.5L492.8 255.5L497.3 255.5L501.9 255.5L506.6 255.5L511.4 255.5L516.2 255.5L521.0 255.5L525.8 255.5L530.6 255.5L535.3 255.5L539.9 255.5L544.4 255.5L548.8 255.5L553.1 255.5L557.2 255.5L561.1 255.5L564.7 255.5L568.2 255.5L571.4 255.5L574.4 255.5L577.1 255.5L579.5 255.5L581.6 255.5L583.4 255.5L584.9 255.5L586.1 255.5L586.9 255.5L587.4 255.5L587.6 255.5 M452.1 252.7L452.3 252.7L452.7 252.7L453.6 252.7L454.7 252.7L456.1 252.7L457.8 252.7L459.9 252.7L462.2 252.7L464.8 252.7L467.7 252.7L470.8 252.7L474.1 252.7L477.7 252.7L481.4 252.7L485.3 252.7L489.4 252.7L493.7 252.7L498.0 252.7L502.5 252.7L507.1 252.7L511.6 252.7L516.3 252.7L520.9 252.7L525.6 252.7L530.1 252.7L534.7 252.7L539.2 252.7L543.5 252.7L547.8 252.7L551.9 252.7L555.8 252.7L559.5 252.7L563.1 252.7L566.4 252.7L569.5 252.7L572.4 252.7L575.0 252.7L577.3 252.7L579.4 252.7L581.1 252.7L582.5 252.7L583.6 252.7L584.5 252.7L584.9 252.7L585.1 252.7 M454.7 249.9L454.8 249.9L455.3 249.9L456.1 249.9L457.2 249.9L458.5 249.9L460.2 249.9L462.2 249.9L464.4 249.9L466.9 249.9L469.6 249.9L472.6 249.9L475.8 249.9L479.3 249.9L482.9 249.9L486.6 249.9L490.6 249.9L494.7 249.9L498.8 249.9L503.1 249.9L507.5 249.9L511.9 249.9L516.4 249.9L520.8 249.9L525.3 249.9L529.7 249.9L534.1 249.9L538.4 249.9L542.5 249.9L546.6 249.9L550.6 249.9L554.3 249.9L557.9 249.9L561.4 249.9L564.6 249.9L567.6 249.9L570.3 249.9L572.8 249.9L575.0 249.9L577.0 249.9L578.7 249.9L580.0 249.9L581.1 249.9L581.9 249.9L582.4 249.9L582.5 249.9 M457.4 247.2L457.5 247.2L458.0 247.2L458.7 247.2L459.8 247.2L461.1 247.2L462.7 247.2L464.6 247.2L466.7 247.2L469.1 247.2L471.7 247.2L474.6 247.2L477.6 247.2L480.9 247.2L484.4 247.2L488.0 247.2L491.8 247.2L495.7 247.2L499.7 247.2L503.8 247.2L508.0 247.2L512.2 247.2L516.5 247.2L520.7 247.2L525.0 247.2L529.2 247.2L533.4 247.2L537.5 247.2L541.5 247.2L545.4 247.2L549.2 247.2L552.8 247.2L556.3 247.2L559.6 247.2L562.6 247.2L565.5 247.2L568.1 247.2L570.5 247.2L572.6 247.2L574.5 247.2L576.1 247.2L577.4 247.2L578.5 247.2L579.2 247.2L579.7 247.2L579.8 247.2 M460.2 244.6L460.4 244.6L460.8 244.6L461.5 244.6L462.5 244.6L463.7 244.6L465.3 244.6L467.0 244.6L469.1 244.6L471.4 244.6L473.9 244.6L476.6 244.6L479.5 244.6L482.7 244.6L485.9 244.6L489.4 244.6L493.0 244.6L496.7 244.6L500.6 244.6L504.5 244.6L508.5 244.6L512.5 244.6L516.6 244.6L520.6 244.6L524.7 244.6L528.7 244.6L532.7 244.6L536.6 244.6L540.5 244.6L544.2 244.6L547.8 244.6L551.3 244.6L554.5 244.6L557.7 244.6L560.6 244.6L563.3 244.6L565.8 244.6L568.1 244.6L570.2 244.6L571.9 244.6L573.5 244.6L574.7 244.6L575.7 244.6L576.4 244.6L576.8 244.6L577.0 244.6 M463.1 242.2L463.3 242.2L463.7 242.2L464.3 242.2L465.3 242.2L466.5 242.2L467.9 242.2L469.6 242.2L471.6 242.2L473.7 242.2L476.1 242.2L478.7 242.2L481.5 242.2L484.5 242.2L487.6 242.2L490.9 242.2L494.3 242.2L497.8 242.2L501.5 242.2L505.2 242.2L509.0 242.2L512.8 242.2L516.7 242.2L520.5 242.2L524.4 242.2L528.2 242.2L532.0 242.2L535.7 242.2L539.4 242.2L542.9 242.2L546.3 242.2L549.6 242.2L552.7 242.2L555.7 242.2L558.5 242.2L561.1 242.2L563.5 242.2L565.6 242.2L567.6 242.2L569.3 242.2L570.7 242.2L571.9 242.2L572.9 242.2L573.5 242.2L573.9 242.2L574.1 242.2 M466.2 239.9L466.3 239.9L466.7 239.9L467.3 239.9L468.2 239.9L469.3 239.9L470.7 239.9L472.3 239.9L474.1 239.9L476.2 239.9L478.4 239.9L480.9 239.9L483.5 239.9L486.3 239.9L489.3 239.9L492.4 239.9L495.6 239.9L499.0 239.9L502.4 239.9L505.9 239.9L509.5 239.9L513.1 239.9L516.8 239.9L520.4 239.9L524.1 239.9L527.7 239.9L531.3 239.9L534.8 239.9L538.2 239.9L541.6 239.9L544.8 239.9L547.9 239.9L550.9 239.9L553.7 239.9L556.3 239.9L558.8 239.9L561.0 239.9L563.1 239.9L564.9 239.9L566.5 239.9L567.9 239.9L569.0 239.9L569.9 239.9L570.5 239.9L570.9 239.9L571.0 239.9 M469.3 237.7L469.4 237.7L469.8 237.7L470.4 237.7L471.2 237.7L472.3 237.7L473.5 237.7L475.1 237.7L476.8 237.7L478.7 237.7L480.8 237.7L483.1 237.7L485.6 237.7L488.2 237.7L491.0 237.7L493.9 237.7L497.0 237.7L500.1 237.7L503.4 237.7L506.7 237.7L510.0 237.7L513.4 237.7L516.9 237.7L520.3 237.7L523.8 237.7L527.2 237.7L530.5 237.7L533.8 237.7L537.1 237.7L540.2 237.7L543.3 237.7L546.2 237.7L549.0 237.7L551.6 237.7L554.1 237.7L556.4 237.7L558.5 237.7L560.4 237.7L562.1 237.7L563.7 237.7L564.9 237.7L566.0 237.7L566.8 237.7L567.4 237.7L567.8 237.7L567.9 237.7 M472.5 235.7L472.6 235.7L472.9 235.7L473.5 235.7L474.3 235.7L475.3 235.7L476.5 235.7L477.9 235.7L479.5 235.7L481.3 235.7L483.3 235.7L485.4 235.7L487.8 235.7L490.2 235.7L492.8 235.7L495.5 235.7L498.4 235.7L501.3 235.7L504.4 235.7L507.4 235.7L510.6 235.7L513.8 235.7L517.0 235.7L520.2 235.7L523.4 235.7L526.6 235.7L529.8 235.7L532.8 235.7L535.9 235.7L538.8 235.7L541.7 235.7L544.4 235.7L547.0 235.7L549.4 235.7L551.8 235.7L553.9 235.7L555.9 235.7L557.7 235.7L559.3 235.7L560.7 235.7L561.9 235.7L562.9 235.7L563.7 235.7L564.3 235.7L564.6 235.7L564.7 235.7 M475.8 233.8L475.9 233.8L476.2 233.8L476.7 233.8L477.5 233.8L478.4 233.8L479.5 233.8L480.8 233.8L482.3 233.8L484.0 233.8L485.8 233.8L487.8 233.8L490.0 233.8L492.2 233.8L494.7 233.8L497.2 233.8L499.8 233.8L502.6 233.8L505.4 233.8L508.2 233.8L511.2 233.8L514.1 233.8L517.1 233.8L520.1 233.8L523.1 233.8L526.0 233.8L529.0 233.8L531.8 233.8L534.6 233.8L537.4 233.8L540.0 233.8L542.5 233.8L545.0 233.8L547.2 233.8L549.4 233.8L551.4 233.8L553.2 233.8L554.9 233.8L556.4 233.8L557.7 233.8L558.8 233.8L559.7 233.8L560.5 233.8L561.0 233.8L561.3 233.8L561.4 233.8 M479.2 232.0L479.3 232.0L479.6 232.0L480.0 232.0L480.7 232.0L481.5 232.0L482.6 232.0L483.8 232.0L485.2 232.0L486.7 232.0L488.4 232.0L490.2 232.0L492.2 232.0L494.3 232.0L496.5 232.0L498.9 232.0L501.3 232.0L503.8 232.0L506.4 232.0L509.1 232.0L511.8 232.0L514.5 232.0L517.2 232.0L520.0 232.0L522.7 232.0L525.4 232.0L528.1 232.0L530.8 232.0L533.4 232.0L535.9 232.0L538.3 232.0L540.7 232.0L542.9 232.0L545.0 232.0L547.0 232.0L548.8 232.0L550.5 232.0L552.0 232.0L553.4 232.0L554.6 232.0L555.7 232.0L556.5 232.0L557.2 232.0L557.6 232.0L557.9 232.0L558.0 232.0 M482.6 230.4L482.7 230.4L483.0 230.4L483.4 230.4L484.0 230.4L484.8 230.4L485.7 230.4L486.8 230.4L488.1 230.4L489.5 230.4L491.0 230.4L492.7 230.4L494.5 230.4L496.4 230.4L498.5 230.4L500.6 230.4L502.8 230.4L505.1 230.4L507.5 230.4L509.9 230.4L512.4 230.4L514.8 230.4L517.3 230.4L519.9 230.4L522.4 230.4L524.8 230.4L527.3 230.4L529.7 230.4L532.1 230.4L534.4 230.4L536.6 230.4L538.7 230.4L540.8 230.4L542.7 230.4L544.5 230.4L546.2 230.4L547.7 230.4L549.1 230.4L550.4 230.4L551.5 230.4L552.4 230.4L553.2 230.4L553.8 230.4L554.2 230.4L554.5 230.4L554.6 230.4 M486.1 228.9L486.2 228.9L486.4 228.9L486.8 228.9L487.4 228.9L488.1 228.9L488.9 228.9L489.9 228.9L491.1 228.9L492.3 228.9L493.7 228.9L495.2 228.9L496.9 228.9L498.6 228.9L500.4 228.9L502.4 228.9L504.4 228.9L506.4 228.9L508.6 228.9L510.7 228.9L513.0 228.9L515.2 228.9L517.5 228.9L519.7 228.9L522.0 228.9L524.2 228.9L526.5 228.9L528.6 228.9L530.8 228.9L532.8 228.9L534.8 228.9L536.8 228.9L538.6 228.9L540.3 228.9L542.0 228.9L543.5 228.9L544.9 228.9L546.1 228.9L547.3 228.9L548.3 228.9L549.1 228.9L549.8 228.9L550.4 228.9L550.8 228.9L551.0 228.9L551.1 228.9 M489.7 227.6L489.8 227.6L490.0 227.6L490.3 227.6L490.8 227.6L491.4 227.6L492.2 227.6L493.1 227.6L494.1 227.6L495.2 227.6L496.5 227.6L497.8 227.6L499.3 227.6L500.8 227.6L502.4 227.6L504.1 227.6L505.9 227.6L507.8 227.6L509.7 227.6L511.6 227.6L513.6 227.6L515.6 227.6L517.6 227.6L519.6 227.6L521.6 227.6L523.6 227.6L525.6 227.6L527.5 227.6L529.4 227.6L531.3 227.6L533.1 227.6L534.8 227.6L536.4 227.6L537.9 227.6L539.4 227.6L540.7 227.6L542.0 227.6L543.1 227.6L544.1 227.6L545.0 227.6L545.8 227.6L546.4 227.6L546.9 227.6L547.2 227.6L547.4 227.6L547.5 227.6 M493.3 226.5L493.4 226.5L493.6 226.5L493.9 226.5L494.3 226.5L494.8 226.5L495.5 226.5L496.3 226.5L497.2 226.5L498.2 226.5L499.2 226.5L500.4 226.5L501.7 226.5L503.0 226.5L504.5 226.5L506.0 226.5L507.5 226.5L509.1 226.5L510.8 226.5L512.5 226.5L514.2 226.5L516.0 226.5L517.7 226.5L519.5 226.5L521.2 226.5L523.0 226.5L524.7 226.5L526.4 226.5L528.1 226.5L529.7 226.5L531.2 226.5L532.7 226.5L534.2 226.5L535.5 226.5L536.8 226.5L538.0 226.5L539.0 226.5L540.0 226.5L540.9 226.5L541.7 226.5L542.4 226.5L542.9 226.5L543.3 226.5L543.6 226.5L543.8 226.5L543.9 226.5 M497.0 225.5L497.0 225.5L497.2 225.5L497.5 225.5L497.8 225.5L498.3 225.5L498.9 225.5L499.5 225.5L500.3 225.5L501.1 225.5L502.0 225.5L503.1 225.5L504.1 225.5L505.3 225.5L506.5 225.5L507.8 225.5L509.1 225.5L510.5 225.5L511.9 225.5L513.4 225.5L514.8 225.5L516.3 225.5L517.8 225.5L519.4 225.5L520.9 225.5L522.4 225.5L523.8 225.5L525.3 225.5L526.7 225.5L528.1 225.5L529.4 225.5L530.7 225.5L531.9 225.5L533.1 225.5L534.1 225.5L535.2 225.5L536.1 225.5L536.9 225.5L537.7 225.5L538.3 225.5L538.9 225.5L539.4 225.5L539.7 225.5L540.0 225.5L540.2 225.5L540.2 225.5 M500.7 224.6L500.7 224.6L500.9 224.6L501.1 224.6L501.4 224.6L501.8 224.6L502.3 224.6L502.8 224.6L503.4 224.6L504.1 224.6L504.9 224.6L505.7 224.6L506.6 224.6L507.6 224.6L508.6 224.6L509.7 224.6L510.8 224.6L511.9 224.6L513.1 224.6L514.3 224.6L515.5 224.6L516.7 224.6L518.0 224.6L519.2 224.6L520.5 224.6L521.7 224.6L522.9 224.6L524.1 224.6L525.3 224.6L526.4 224.6L527.5 224.6L528.6 224.6L529.6 224.6L530.6 224.6L531.5 224.6L532.3 224.6L533.1 224.6L533.8 224.6L534.4 224.6L534.9 224.6L535.4 224.6L535.8 224.6L536.1 224.6L536.3 224.6L536.5 224.6L536.5 224.6 M504.4 223.9L504.5 223.9L504.6 223.9L504.8 223.9L505.0 223.9L505.3 223.9L505.7 223.9L506.1 223.9L506.6 223.9L507.2 223.9L507.8 223.9L508.4 223.9L509.1 223.9L509.9 223.9L510.7 223.9L511.5 223.9L512.4 223.9L513.3 223.9L514.2 223.9L515.2 223.9L516.1 223.9L517.1 223.9L518.1 223.9L519.1 223.9L520.1 223.9L521.1 223.9L522.0 223.9L523.0 223.9L523.9 223.9L524.8 223.9L525.7 223.9L526.5 223.9L527.3 223.9L528.1 223.9L528.8 223.9L529.4 223.9L530.0 223.9L530.6 223.9L531.1 223.9L531.5 223.9L531.9 223.9L532.2 223.9L532.4 223.9L532.6 223.9L532.7 223.9L532.8 223.9 M508.2 223.4L508.2 223.4L508.3 223.4L508.4 223.4L508.6 223.4L508.8 223.4L509.1 223.4L509.4 223.4L509.8 223.4L510.2 223.4L510.6 223.4L511.1 223.4L511.7 223.4L512.2 223.4L512.8 223.4L513.4 223.4L514.0 223.4L514.7 223.4L515.4 223.4L516.1 223.4L516.8 223.4L517.5 223.4L518.2 223.4L519.0 223.4L519.7 223.4L520.4 223.4L521.1 223.4L521.8 223.4L522.5 223.4L523.2 223.4L523.8 223.4L524.4 223.4L525.0 223.4L525.5 223.4L526.1 223.4L526.6 223.4L527.0 223.4L527.4 223.4L527.8 223.4L528.1 223.4L528.4 223.4L528.6 223.4L528.8 223.4L528.9 223.4L529.0 223.4L529.0 223.4 M512.0 223.0L512.0 223.0L512.1 223.0L512.1 223.0L512.3 223.0L512.4 223.0L512.6 223.0L512.8 223.0L513.0 223.0L513.3 223.0L513.5 223.0L513.9 223.0L514.2 223.0L514.5 223.0L514.9 223.0L515.3 223.0L515.7 223.0L516.1 223.0L516.6 223.0L517.0 223.0L517.5 223.0L517.9 223.0L518.4 223.0L518.8 223.0L519.3 223.0L519.7 223.0L520.2 223.0L520.6 223.0L521.1 223.0L521.5 223.0L521.9 223.0L522.3 223.0L522.7 223.0L523.0 223.0L523.3 223.0L523.7 223.0L523.9 223.0L524.2 223.0L524.4 223.0L524.6 223.0L524.8 223.0L524.9 223.0L525.1 223.0L525.1 223.0L525.2 223.0L525.2 223.0 M466.3 383.8L461.4 380.0L456.8 375.8L452.5 371.4L448.5 366.6L444.8 361.6L441.5 356.3L441.5 267.3L444.8 262.0L448.5 257.0L452.5 252.2L456.8 247.8L461.4 243.6L466.3 239.8L471.4 236.3L476.8 233.2L482.4 230.5L488.2 228.2L494.1 226.2L500.1 224.7L506.2 223.7L512.4 223.0L518.6 222.8 M466.3 383.8L461.4 380.0L456.8 375.8L452.5 371.4L448.5 366.6L444.9 361.6L441.6 356.3L438.6 350.8L436.1 345.1L434.0 339.3L432.3 333.3L431.0 327.3L430.1 321.1L429.7 314.9L429.7 308.7L430.1 302.5L431.0 296.3L432.3 290.3L434.0 284.3L436.1 278.5L438.6 272.8L441.6 267.3L444.9 262.0L448.5 257.0L452.5 252.2L456.8 247.8L461.4 243.6L466.3 239.8L471.5 236.3L476.8 233.2L482.4 230.5L488.2 228.2L494.1 226.2L500.1 224.7L506.2 223.7L512.4 223.0L518.6 222.8 M466.4 383.8L461.5 380.0L456.9 375.8L452.6 371.4L448.7 366.6L445.0 361.6L441.7 356.3L438.8 350.8L436.3 345.1L434.2 339.3L432.5 333.3L431.2 327.3L430.3 321.1L429.9 314.9L429.9 308.7L430.3 302.5L431.2 296.3L432.5 290.3L434.2 284.3L436.3 278.5L438.8 272.8L441.7 267.3L445.0 262.0L448.7 257.0L452.6 252.2L456.9 247.8L461.5 243.6L466.4 239.8L471.6 236.3L476.9 233.2L482.5 230.5L488.2 228.2L494.1 226.2L500.1 224.7L506.2 223.7L512.4 223.0L518.6 222.8 M466.6 383.8L461.8 380.0L457.2 375.8L452.9 371.4L448.9 366.6L445.3 361.6L442.1 356.3L439.2 350.8L436.6 345.1L434.5 339.3L432.8 333.3L431.6 327.3L430.7 321.1L430.3 314.9L430.3 308.7L430.7 302.5L431.6 296.3L432.8 290.3L434.5 284.3L436.6 278.5L439.2 272.8L442.1 267.3L445.3 262.0L448.9 257.0L452.9 252.2L457.2 247.8L461.8 243.6L466.6 239.8L471.8 236.3L477.1 233.2L482.6 230.5L488.4 228.2L494.2 226.2L500.2 224.7L506.3 223.7L512.4 223.0L518.6 222.8 M467.0 383.8L462.1 380.0L457.6 375.8L453.3 371.4L449.4 366.6L445.8 361.6L442.5 356.3L439.6 350.8L437.1 345.1L435.0 339.3L433.3 333.3L432.1 327.3L431.2 321.1L430.8 314.9L430.8 308.7L431.2 302.5L432.1 296.3L433.3 290.3L435.0 284.3L437.1 278.5L439.6 272.8L442.5 267.3L445.8 262.0L449.4 257.0L453.3 252.2L457.6 247.8L462.1 243.6L467.0 239.8L472.0 236.3L477.3 233.2L482.9 230.5L488.5 228.2L494.4 226.2L500.3 224.7L506.4 223.7L512.5 223.0L518.6 222.8 M467.4 383.8L462.6 380.0L458.0 375.8L453.8 371.4L449.9 366.6L446.3 361.6L443.1 356.3L440.2 350.8L437.8 345.1L435.7 339.3L434.0 333.3L432.7 327.3L431.9 321.1L431.5 314.9L431.5 308.7L431.9 302.5L432.7 296.3L434.0 290.3L435.7 284.3L437.8 278.5L440.2 272.8L443.1 267.3L446.3 262.0L449.9 257.0L453.8 252.2L458.0 247.8L462.6 243.6L467.4 239.8L472.4 236.3L477.7 233.2L483.1 230.5L488.8 228.2L494.6 226.2L500.5 224.7L506.5 223.7L512.5 223.0L518.6 222.8 M467.9 383.8L463.1 380.0L458.6 375.8L454.4 371.4L450.6 366.6L447.0 361.6L443.8 356.3L441.0 350.8L438.5 345.1L436.5 339.3L434.8 333.3L433.6 327.3L432.7 321.1L432.3 314.9L432.3 308.7L432.7 302.5L433.6 296.3L434.8 290.3L436.5 284.3L438.5 278.5L441.0 272.8L443.8 267.3L447.0 262.0L450.6 257.0L454.4 252.2L458.6 247.8L463.1 243.6L467.9 239.8L472.8 236.3L478.1 233.2L483.5 230.5L489.1 228.2L494.8 226.2L500.6 224.7L506.6 223.7L512.6 223.0L518.6 222.8 M468.4 383.8L463.7 380.0L459.3 375.8L455.2 371.4L451.4 366.6L447.9 361.6L444.7 356.3L441.9 350.8L439.5 345.1L437.4 339.3L435.8 333.3L434.6 327.3L433.7 321.1L433.3 314.9L433.3 308.7L433.7 302.5L434.6 296.3L435.8 290.3L437.4 284.3L439.5 278.5L441.9 272.8L444.7 267.3L447.9 262.0L451.4 257.0L455.2 252.2L459.3 247.8L463.7 243.6L468.4 239.8L473.4 236.3L478.5 233.2L483.9 230.5L489.4 228.2L495.1 226.2L500.9 224.7L506.7 223.7L512.6 223.0L518.6 222.8 M469.1 383.8L464.5 380.0L460.1 375.8L456.0 371.4L452.3 366.6L448.8 361.6L445.7 356.3L442.9 350.8L440.6 345.1L438.5 339.3L436.9 333.3L435.7 327.3L434.9 321.1L434.5 314.9L434.5 308.7L434.9 302.5L435.7 296.3L436.9 290.3L438.5 284.3L440.6 278.5L442.9 272.8L445.7 267.3L448.8 262.0L452.3 257.0L456.0 252.2L460.1 247.8L464.5 243.6L469.1 239.8L474.0 236.3L479.1 233.2L484.4 230.5L489.8 228.2L495.4 226.2L501.1 224.7L506.9 223.7L512.7 223.0L518.6 222.8 M469.9 383.8L465.3 380.0L461.0 375.8L457.0 371.4L453.3 366.6L449.9 361.6L446.8 356.3L444.1 350.8L441.8 345.1L439.8 339.3L438.2 333.3L437.0 327.3L436.2 321.1L435.8 314.9L435.8 308.7L436.2 302.5L437.0 296.3L438.2 290.3L439.8 284.3L441.8 278.5L444.1 272.8L446.8 267.3L449.9 262.0L453.3 257.0L457.0 252.2L461.0 247.8L465.3 243.6L469.9 239.8L474.7 236.3L479.7 233.2L484.9 230.5L490.3 228.2L495.8 226.2L501.4 224.7L507.1 223.7L512.8 223.0L518.6 222.8 M470.8 383.8L466.3 380.0L462.1 375.8L458.1 371.4L454.5 366.6L451.1 361.6L448.1 356.3L445.4 350.8L443.1 345.1L441.2 339.3L439.6 333.3L438.4 327.3L437.6 321.1L437.2 314.9L437.2 308.7L437.6 302.5L438.4 296.3L439.6 290.3L441.2 284.3L443.1 278.5L445.4 272.8L448.1 267.3L451.1 262.0L454.5 257.0L458.1 252.2L462.1 247.8L466.3 243.6L470.8 239.8L475.5 236.3L480.4 233.2L485.5 230.5L490.8 228.2L496.2 226.2L501.7 224.7L507.3 223.7L512.9 223.0L518.6 222.8 M471.7 383.8L467.3 380.0L463.2 375.8L459.3 371.4L455.7 366.6L452.5 361.6L449.5 356.3L446.9 350.8L444.6 345.1L442.7 339.3L441.2 333.3L440.0 327.3L439.2 321.1L438.9 314.9L438.9 308.7L439.2 302.5L440.0 296.3L441.2 290.3L442.7 284.3L444.6 278.5L446.9 272.8L449.5 267.3L452.5 262.0L455.7 257.0L459.3 252.2L463.2 247.8L467.3 243.6L471.7 239.8L476.3 236.3L481.1 233.2L486.1 230.5L491.3 228.2L496.6 226.2L502.0 224.7L507.5 223.7L513.0 223.0L518.6 222.8 M472.7 383.8L468.4 380.0L464.4 375.8L460.6 371.4L457.1 366.6L453.9 361.6L451.0 356.3L448.5 350.8L446.3 345.1L444.4 339.3L442.9 333.3L441.8 327.3L441.0 321.1L440.6 314.9L440.6 308.7L441.0 302.5L441.8 296.3L442.9 290.3L444.4 284.3L446.3 278.5L448.5 272.8L451.0 267.3L453.9 262.0L457.1 257.0L460.6 252.2L464.4 247.8L468.4 243.6L472.7 239.8L477.3 236.3L482.0 233.2L486.9 230.5L491.9 228.2L497.1 226.2L502.4 224.7L507.7 223.7L513.2 223.0L518.6 222.8 M473.9 383.8L469.7 380.0L465.7 375.8L462.0 371.4L458.6 366.6L455.5 361.6L452.7 356.3L450.2 350.8L448.0 345.1L446.2 339.3L444.7 333.3L443.6 327.3L442.9 321.1L442.5 314.9L442.5 308.7L442.9 302.5L443.6 296.3L444.7 290.3L446.2 284.3L448.0 278.5L450.2 272.8L452.7 267.3L455.5 262.0L458.6 257.0L462.0 252.2L465.7 247.8L469.7 243.6L473.9 239.8L478.3 236.3L482.9 233.2L487.6 230.5L492.6 228.2L497.6 226.2L502.8 224.7L508.0 223.7L513.3 223.0L518.6 222.8 M475.1 383.8L471.0 380.0L467.1 375.8L463.5 371.4L460.2 366.6L457.2 361.6L454.4 356.3L452.0 350.8L449.9 345.1L448.1 339.3L446.7 333.3L445.6 327.3L444.9 321.1L444.6 314.9L444.6 308.7L444.9 302.5L445.6 296.3L446.7 290.3L448.1 284.3L449.9 278.5L452.0 272.8L454.4 267.3L457.2 262.0L460.2 257.0L463.5 252.2L467.1 247.8L471.0 243.6L475.1 239.8L479.3 236.3L483.8 233.2L488.5 230.5L493.3 228.2L498.2 226.2L503.2 224.7L508.3 223.7L513.4 223.0L518.6 222.8 M476.3 383.8L472.4 380.0L468.6 375.8L465.2 371.4L461.9 366.6L459.0 361.6L456.3 356.3L454.0 350.8L451.9 345.1L450.2 339.3L448.8 333.3L447.8 327.3L447.1 321.1L446.7 314.9L446.7 308.7L447.1 302.5L447.8 296.3L448.8 290.3L450.2 284.3L451.9 278.5L454.0 272.8L456.3 267.3L459.0 262.0L461.9 257.0L465.2 252.2L468.6 247.8L472.4 243.6L476.3 239.8L480.5 236.3L484.8 233.2L489.4 230.5L494.0 228.2L498.8 226.2L503.6 224.7L508.6 223.7L513.6 223.0L518.6 222.8 M477.7 383.8L473.9 380.0L470.2 375.8L466.9 371.4L463.8 366.6L460.9 361.6L458.3 356.3L456.0 350.8L454.1 345.1L452.4 339.3L451.1 333.3L450.1 327.3L449.4 321.1L449.0 314.9L449.0 308.7L449.4 302.5L450.1 296.3L451.1 290.3L452.4 284.3L454.1 278.5L456.0 272.8L458.3 267.3L460.9 262.0L463.8 257.0L466.9 252.2L470.2 247.8L473.9 243.6L477.7 239.8L481.7 236.3L485.9 233.2L490.3 230.5L494.8 228.2L499.4 226.2L504.1 224.7L508.9 223.7L513.7 223.0L518.6 222.8 M479.1 383.8L475.4 380.0L471.9 375.8L468.7 371.4L465.7 366.6L462.9 361.6L460.4 356.3L458.2 350.8L456.3 345.1L454.7 339.3L453.4 333.3L452.5 327.3L451.8 321.1L451.5 314.9L451.5 308.7L451.8 302.5L452.5 296.3L453.4 290.3L454.7 284.3L456.3 278.5L458.2 272.8L460.4 267.3L462.9 262.0L465.7 257.0L468.7 252.2L471.9 247.8L475.4 243.6L479.1 239.8L483.0 236.3L487.1 233.2L491.3 230.5L495.6 228.2L500.1 226.2L504.6 224.7L509.3 223.7L513.9 223.0L518.6 222.8 M480.6 383.8L477.1 380.0L473.7 375.8L470.6 371.4L467.7 366.6L465.0 361.6L462.6 356.3L460.5 350.8L458.7 345.1L457.2 339.3L455.9 333.3L455.0 327.3L454.3 321.1L454.0 314.9L454.0 308.7L454.3 302.5L455.0 296.3L455.9 290.3L457.2 284.3L458.7 278.5L460.5 272.8L462.6 267.3L465.0 262.0L467.7 257.0L470.6 252.2L473.7 247.8L477.1 243.6L480.6 239.8L484.4 236.3L488.3 233.2L492.3 230.5L496.5 228.2L500.8 226.2L505.2 224.7L509.6 223.7L514.1 223.0L518.6 222.8 M482.2 383.8L478.8 380.0L475.6 375.8L472.6 371.4L469.8 366.6L467.3 361.6L465.0 356.3L462.9 350.8L461.2 345.1L459.7 339.3L458.5 333.3L457.6 327.3L457.0 321.1L456.7 314.9L456.7 308.7L457.0 302.5L457.6 296.3L458.5 290.3L459.7 284.3L461.2 278.5L462.9 272.8L465.0 267.3L467.3 262.0L469.8 257.0L472.6 252.2L475.6 247.8L478.8 243.6L482.2 239.8L485.8 236.3L489.5 233.2L493.4 230.5L497.4 228.2L501.5 226.2L505.7 224.7L510.0 223.7L514.3 223.0L518.6 222.8 M483.8 383.8L480.6 380.0L477.5 375.8L474.6 371.4L472.0 366.6L469.6 361.6L467.4 356.3L465.4 350.8L463.8 345.1L462.3 339.3L461.2 333.3L460.4 327.3L459.8 321.1L459.5 314.9L459.5 308.7L459.8 302.5L460.4 296.3L461.2 290.3L462.3 284.3L463.8 278.5L465.4 272.8L467.4 267.3L469.6 262.0L472.0 257.0L474.6 252.2L477.5 247.8L480.6 243.6L483.8 239.8L487.3 236.3L490.8 233.2L494.5 230.5L498.4 228.2L502.3 226.2L506.3 224.7L510.4 223.7L514.5 223.0L518.6 222.8 M485.5 383.8L482.4 380.0L479.5 375.8L476.8 371.4L474.3 366.6L472.0 361.6L469.9 356.3L468.0 350.8L466.4 345.1L465.1 339.3L464.0 333.3L463.2 327.3L462.7 321.1L462.4 314.9L462.4 308.7L462.7 302.5L463.2 296.3L464.0 290.3L465.1 284.3L466.4 278.5L468.0 272.8L469.9 267.3L472.0 262.0L474.3 257.0L476.8 252.2L479.5 247.8L482.4 243.6L485.5 239.8L488.8 236.3L492.2 233.2L495.7 230.5L499.4 228.2L503.1 226.2L506.9 224.7L510.8 223.7L514.7 223.0L518.6 222.8 M487.3 383.8L484.4 380.0L481.6 375.8L479.0 371.4L476.6 366.6L474.5 361.6L472.5 356.3L470.7 350.8L469.2 345.1L468.0 339.3L466.9 333.3L466.2 327.3L465.6 321.1L465.4 314.9L465.4 308.7L465.6 302.5L466.2 296.3L466.9 290.3L468.0 284.3L469.2 278.5L470.7 272.8L472.5 267.3L474.5 262.0L476.6 257.0L479.0 252.2L481.6 247.8L484.4 243.6L487.3 239.8L490.4 236.3L493.6 233.2L496.9 230.5L500.4 228.2L503.9 226.2L507.5 224.7L511.2 223.7L514.9 223.0L518.6 222.8 M489.1 383.8L486.4 380.0L483.8 375.8L481.3 371.4L479.1 366.6L477.0 361.6L475.2 356.3L473.5 350.8L472.1 345.1L470.9 339.3L469.9 333.3L469.2 327.3L468.7 321.1L468.5 314.9L468.5 308.7L468.7 302.5L469.2 296.3L469.9 290.3L470.9 284.3L472.1 278.5L473.5 272.8L475.2 267.3L477.0 262.0L479.1 257.0L481.3 252.2L483.8 247.8L486.4 243.6L489.1 239.8L492.0 236.3L495.1 233.2L498.2 230.5L501.4 228.2L504.8 226.2L508.2 224.7L511.6 223.7L515.1 223.0L518.6 222.8 M491.0 383.8L488.4 380.0L486.0 375.8L483.7 371.4L481.6 366.6L479.7 361.6L477.9 356.3L476.4 350.8L475.1 345.1L473.9 339.3L473.0 333.3L472.3 327.3L471.9 321.1L471.7 314.9L471.7 308.7L471.9 302.5L472.3 296.3L473.0 290.3L473.9 284.3L475.1 278.5L476.4 272.8L477.9 267.3L479.7 262.0L481.6 257.0L483.7 252.2L486.0 247.8L488.4 243.6L491.0 239.8L493.7 236.3L496.6 233.2L499.5 230.5L502.5 228.2L505.7 226.2L508.8 224.7L512.1 223.7L515.3 223.0L518.6 222.8 M492.9 383.8L490.5 380.0L488.3 375.8L486.1 371.4L484.2 366.6L482.4 361.6L480.8 356.3L479.3 350.8L478.1 345.1L477.0 339.3L476.2 333.3L475.6 327.3L475.1 321.1L474.9 314.9L474.9 308.7L475.1 302.5L475.6 296.3L476.2 290.3L477.0 284.3L478.1 278.5L479.3 272.8L480.8 267.3L482.4 262.0L484.2 257.0L486.1 252.2L488.3 247.8L490.5 243.6L492.9 239.8L495.4 236.3L498.1 233.2L500.8 230.5L503.7 228.2L506.6 226.2L509.5 224.7L512.5 223.7L515.6 223.0L518.6 222.8 M494.9 383.8L492.7 380.0L490.6 375.8L488.6 371.4L486.8 366.6L485.2 361.6L483.7 356.3L482.3 350.8L481.2 345.1L480.2 339.3L479.5 333.3L478.9 327.3L478.5 321.1L478.3 314.9L478.3 308.7L478.5 302.5L478.9 296.3L479.5 290.3L480.2 284.3L481.2 278.5L482.3 272.8L483.7 267.3L485.2 262.0L486.8 257.0L488.6 252.2L490.6 247.8L492.7 243.6L494.9 239.8L497.2 236.3L499.7 233.2L502.2 230.5L504.8 228.2L507.5 226.2L510.2 224.7L513.0 223.7L515.8 223.0L518.6 222.8 M496.9 383.8L494.9 380.0L493.0 375.8L491.2 371.4L489.5 366.6L488.0 361.6L486.6 356.3L485.4 350.8L484.4 345.1L483.5 339.3L482.8 333.3L482.3 327.3L481.9 321.1L481.7 314.9L481.7 308.7L481.9 302.5L482.3 296.3L482.8 290.3L483.5 284.3L484.4 278.5L485.4 272.8L486.6 267.3L488.0 262.0L489.5 257.0L491.2 252.2L493.0 247.8L494.9 243.6L496.9 239.8L499.0 236.3L501.3 233.2L503.6 230.5L506.0 228.2L508.4 226.2L510.9 224.7L513.5 223.7L516.0 223.0L518.6 222.8 M499.0 383.8L497.1 380.0L495.4 375.8L493.8 371.4L492.3 366.6L490.9 361.6L489.7 356.3L488.6 350.8L487.6 345.1L486.8 339.3L486.2 333.3L485.7 327.3L485.4 321.1L485.2 314.9L485.2 308.7L485.4 302.5L485.7 296.3L486.2 290.3L486.8 284.3L487.6 278.5L488.6 272.8L489.7 267.3L490.9 262.0L492.3 257.0L493.8 252.2L495.4 247.8L497.1 243.6L499.0 239.8L500.9 236.3L502.9 233.2L505.0 230.5L507.2 228.2L509.4 226.2L511.7 224.7L513.9 223.7L516.3 223.0L518.6 222.8 M501.1 383.8L499.4 380.0L497.9 375.8L496.4 371.4L495.1 366.6L493.8 361.6L492.7 356.3L491.8 350.8L490.9 345.1L490.2 339.3L489.6 333.3L489.2 327.3L488.9 321.1L488.8 314.9L488.8 308.7L488.9 302.5L489.2 296.3L489.6 290.3L490.2 284.3L490.9 278.5L491.8 272.8L492.7 267.3L493.8 262.0L495.1 257.0L496.4 252.2L497.9 247.8L499.4 243.6L501.1 239.8L502.8 236.3L504.6 233.2L506.5 230.5L508.4 228.2L510.4 226.2L512.4 224.7L514.4 223.7L516.5 223.0L518.6 222.8 M503.2 383.8L501.7 380.0L500.4 375.8L499.1 371.4L497.9 366.6L496.8 361.6L495.9 356.3L495.0 350.8L494.3 345.1L493.6 339.3L493.1 333.3L492.8 327.3L492.5 321.1L492.4 314.9L492.4 308.7L492.5 302.5L492.8 296.3L493.1 290.3L493.6 284.3L494.3 278.5L495.0 272.8L495.9 267.3L496.8 262.0L497.9 257.0L499.1 252.2L500.4 247.8L501.7 243.6L503.2 239.8L504.7 236.3L506.3 233.2L507.9 230.5L509.6 228.2L511.4 226.2L513.1 224.7L514.9 223.7L516.8 223.0L518.6 222.8 M505.3 383.8L504.1 380.0L502.9 375.8L501.8 371.4L500.8 366.6L499.9 361.6L499.0 356.3L498.3 350.8L497.7 345.1L497.1 339.3L496.7 333.3L496.4 327.3L496.1 321.1L496.0 314.9L496.0 308.7L496.1 302.5L496.4 296.3L496.7 290.3L497.1 284.3L497.7 278.5L498.3 272.8L499.0 267.3L499.9 262.0L500.8 257.0L501.8 252.2L502.9 247.8L504.1 243.6L505.3 239.8L506.6 236.3L508.0 233.2L509.4 230.5L510.9 228.2L512.4 226.2L513.9 224.7L515.5 223.7L517.0 223.0L518.6 222.8 M507.5 383.8L506.5 380.0L505.5 375.8L504.6 371.4L503.7 366.6L502.9 361.6L502.2 356.3L501.6 350.8L501.1 345.1L500.6 339.3L500.3 333.3L500.0 327.3L499.8 321.1L499.7 314.9L499.7 308.7L499.8 302.5L500.0 296.3L500.3 290.3L500.6 284.3L501.1 278.5L501.6 272.8L502.2 267.3L502.9 262.0L503.7 257.0L504.6 252.2L505.5 247.8L506.5 243.6L507.5 239.8L508.6 236.3L509.7 233.2L510.9 230.5L512.1 228.2L513.4 226.2L514.7 224.7L516.0 223.7L517.3 223.0L518.6 222.8 M509.7 383.8L508.9 380.0L508.1 375.8L507.3 371.4L506.7 366.6L506.0 361.6L505.5 356.3L505.0 350.8L504.6 345.1L504.2 339.3L503.9 333.3L503.7 327.3L503.5 321.1L503.5 314.9L503.5 308.7L503.5 302.5L503.7 296.3L503.9 290.3L504.2 284.3L504.6 278.5L505.0 272.8L505.5 267.3L506.0 262.0L506.7 257.0L507.3 252.2L508.1 247.8L508.9 243.6L509.7 239.8L510.6 236.3L511.5 233.2L512.4 230.5L513.4 228.2L514.4 226.2L515.5 224.7L516.5 223.7L517.5 223.0L518.6 222.8 M511.9 383.8L511.3 380.0L510.7 375.8L510.1 371.4L509.6 366.6L509.2 361.6L508.7 356.3L508.4 350.8L508.0 345.1L507.8 339.3L507.6 333.3L507.4 327.3L507.3 321.1L507.2 314.9L507.2 308.7L507.3 302.5L507.4 296.3L507.6 290.3L507.8 284.3L508.0 278.5L508.4 272.8L508.7 267.3L509.2 262.0L509.6 257.0L510.1 252.2L510.7 247.8L511.3 243.6L511.9 239.8L512.6 236.3L513.3 233.2L514.0 230.5L514.7 228.2L515.5 226.2L516.2 224.7L517.0 223.7L517.8 223.0L518.6 222.8 M514.1 383.8L513.7 380.0L513.3 375.8L513.0 371.4L512.6 366.6L512.3 361.6L512.0 356.3L511.8 350.8L511.6 345.1L511.4 339.3L511.2 333.3L511.1 327.3L511.0 321.1L511.0 314.9L511.0 308.7L511.0 302.5L511.1 296.3L511.2 290.3L511.4 284.3L511.6 278.5L511.8 272.8L512.0 267.3L512.3 262.0L512.6 257.0L513.0 252.2L513.3 247.8L513.7 243.6L514.1 239.8L514.6 236.3L515.0 233.2L515.5 230.5L516.0 228.2L516.5 226.2L517.0 224.7L517.5 223.7L518.1 223.0L518.6 222.8 M516.4 383.8L516.2 380.0L516.0 375.8L515.8 371.4L515.6 366.6L515.4 361.6L515.3 356.3L515.2 350.8L515.1 345.1L515.0 339.3L514.9 333.3L514.9 327.3L514.8 321.1L514.8 314.9L514.8 308.7L514.8 302.5L514.9 296.3L514.9 290.3L515.0 284.3L515.1 278.5L515.2 272.8L515.3 267.3L515.4 262.0L515.6 257.0L515.8 252.2L516.0 247.8L516.2 243.6L516.4 239.8L516.6 236.3L516.8 233.2L517.1 230.5L517.3 228.2L517.6 226.2L517.8 224.7L518.1 223.7L518.3 223.0L518.6 222.8 M518.6 383.8L518.6 380.0L518.6 375.8L518.6 371.4L518.6 366.6L518.6 361.6L518.6 356.3L518.6 350.8L518.6 345.1L518.6 339.3L518.6 333.3L518.6 327.3L518.6 321.1L518.6 314.9L518.6 308.7L518.6 302.5L518.6 296.3L518.6 290.3L518.6 284.3L518.6 278.5L518.6 272.8L518.6 267.3L518.6 262.0L518.6 257.0L518.6 252.2L518.6 247.8L518.6 243.6L518.6 239.8L518.6 236.3L518.6 233.2L518.6 230.5L518.6 228.2L518.6 226.2L518.6 224.7L518.6 223.7L518.6 223.0L518.6 222.8 M520.8 383.8L521.0 380.0L521.2 375.8L521.4 371.4L521.6 366.6L521.8 361.6L521.9 356.3L522.0 350.8L522.1 345.1L522.2 339.3L522.3 333.3L522.3 327.3L522.4 321.1L522.4 314.9L522.4 308.7L522.4 302.5L522.3 296.3L522.3 290.3L522.2 284.3L522.1 278.5L522.0 272.8L521.9 267.3L521.8 262.0L521.6 257.0L521.4 252.2L521.2 247.8L521.0 243.6L520.8 239.8L520.6 236.3L520.4 233.2L520.1 230.5L519.9 228.2L519.6 226.2L519.4 224.7L519.1 223.7L518.9 223.0L518.6 222.8 M523.1 383.8L523.5 380.0L523.9 375.8L524.2 371.4L524.6 366.6L524.9 361.6L525.2 356.3L525.4 350.8L525.6 345.1L525.8 339.3L526.0 333.3L526.1 327.3L526.2 321.1L526.2 314.9L526.2 308.7L526.2 302.5L526.1 296.3L526.0 290.3L525.8 284.3L525.6 278.5L525.4 272.8L525.2 267.3L524.9 262.0L524.6 257.0L524.2 252.2L523.9 247.8L523.5 243.6L523.1 239.8L522.6 236.3L522.2 233.2L521.7 230.5L521.2 228.2L520.7 226.2L520.2 224.7L519.7 223.7L519.1 223.0L518.6 222.8 M525.3 383.8L525.9 380.0L526.5 375.8L527.1 371.4L527.6 366.6L528.0 361.6L528.5 356.3L528.8 350.8L529.2 345.1L529.4 339.3L529.6 333.3L529.8 327.3L529.9 321.1L530.0 314.9L530.0 308.7L529.9 302.5L529.8 296.3L529.6 290.3L529.4 284.3L529.2 278.5L528.8 272.8L528.5 267.3L528.0 262.0L527.6 257.0L527.1 252.2L526.5 247.8L525.9 243.6L525.3 239.8L524.6 236.3L523.9 233.2L523.2 230.5L522.5 228.2L521.7 226.2L521.0 224.7L520.2 223.7L519.4 223.0L518.6 222.8 M527.5 383.8L528.3 380.0L529.1 375.8L529.9 371.4L530.5 366.6L531.2 361.6L531.7 356.3L532.2 350.8L532.6 345.1L533.0 339.3L533.3 333.3L533.5 327.3L533.7 321.1L533.7 314.9L533.7 308.7L533.7 302.5L533.5 296.3L533.3 290.3L533.0 284.3L532.6 278.5L532.2 272.8L531.7 267.3L531.2 262.0L530.5 257.0L529.9 252.2L529.1 247.8L528.3 243.6L527.5 239.8L526.6 236.3L525.7 233.2L524.8 230.5L523.8 228.2L522.8 226.2L521.7 224.7L520.7 223.7L519.7 223.0L518.6 222.8 M529.7 383.8L530.7 380.0L531.7 375.8L532.6 371.4L533.5 366.6L534.3 361.6L535.0 356.3L535.6 350.8L536.1 345.1L536.6 339.3L536.9 333.3L537.2 327.3L537.4 321.1L537.5 314.9L537.5 308.7L537.4 302.5L537.2 296.3L536.9 290.3L536.6 284.3L536.1 278.5L535.6 272.8L535.0 267.3L534.3 262.0L533.5 257.0L532.6 252.2L531.7 247.8L530.7 243.6L529.7 239.8L528.6 236.3L527.5 233.2L526.3 230.5L525.1 228.2L523.8 226.2L522.5 224.7L521.2 223.7L519.9 223.0L518.6 222.8 M531.9 383.8L533.1 380.0L534.3 375.8L535.4 371.4L536.4 366.6L537.3 361.6L538.2 356.3L538.9 350.8L539.5 345.1L540.1 339.3L540.5 333.3L540.8 327.3L541.1 321.1L541.2 314.9L541.2 308.7L541.1 302.5L540.8 296.3L540.5 290.3L540.1 284.3L539.5 278.5L538.9 272.8L538.2 267.3L537.3 262.0L536.4 257.0L535.4 252.2L534.3 247.8L533.1 243.6L531.9 239.8L530.6 236.3L529.2 233.2L527.8 230.5L526.3 228.2L524.8 226.2L523.3 224.7L521.7 223.7L520.2 223.0L518.6 222.8 M534.0 383.8L535.5 380.0L536.8 375.8L538.1 371.4L539.3 366.6L540.4 361.6L541.3 356.3L542.2 350.8L542.9 345.1L543.6 339.3L544.1 333.3L544.4 327.3L544.7 321.1L544.8 314.9L544.8 308.7L544.7 302.5L544.4 296.3L544.1 290.3L543.6 284.3L542.9 278.5L542.2 272.8L541.3 267.3L540.4 262.0L539.3 257.0L538.1 252.2L536.8 247.8L535.5 243.6L534.0 239.8L532.5 236.3L530.9 233.2L529.3 230.5L527.6 228.2L525.8 226.2L524.1 224.7L522.3 223.7L520.4 223.0L518.6 222.8 M536.1 383.8L537.8 380.0L539.3 375.8L540.8 371.4L542.1 366.6L543.4 361.6L544.5 356.3L545.4 350.8L546.3 345.1L547.0 339.3L547.6 333.3L548.0 327.3L548.3 321.1L548.4 314.9L548.4 308.7L548.3 302.5L548.0 296.3L547.6 290.3L547.0 284.3L546.3 278.5L545.4 272.8L544.5 267.3L543.4 262.0L542.1 257.0L540.8 252.2L539.3 247.8L537.8 243.6L536.1 239.8L534.4 236.3L532.6 233.2L530.7 230.5L528.8 228.2L526.8 226.2L524.8 224.7L522.8 223.7L520.7 223.0L518.6 222.8 M538.2 383.8L540.1 380.0L541.8 375.8L543.4 371.4L544.9 366.6L546.3 361.6L547.5 356.3L548.6 350.8L549.6 345.1L550.4 339.3L551.0 333.3L551.5 327.3L551.8 321.1L552.0 314.9L552.0 308.7L551.8 302.5L551.5 296.3L551.0 290.3L550.4 284.3L549.6 278.5L548.6 272.8L547.5 267.3L546.3 262.0L544.9 257.0L543.4 252.2L541.8 247.8L540.1 243.6L538.2 239.8L536.3 236.3L534.3 233.2L532.2 230.5L530.0 228.2L527.8 226.2L525.5 224.7L523.3 223.7L520.9 223.0L518.6 222.8 M540.3 383.8L542.3 380.0L544.2 375.8L546.0 371.4L547.7 366.6L549.2 361.6L550.6 356.3L551.8 350.8L552.8 345.1L553.7 339.3L554.4 333.3L554.9 327.3L555.3 321.1L555.5 314.9L555.5 308.7L555.3 302.5L554.9 296.3L554.4 290.3L553.7 284.3L552.8 278.5L551.8 272.8L550.6 267.3L549.2 262.0L547.7 257.0L546.0 252.2L544.2 247.8L542.3 243.6L540.3 239.8L538.2 236.3L535.9 233.2L533.6 230.5L531.2 228.2L528.8 226.2L526.3 224.7L523.7 223.7L521.2 223.0L518.6 222.8 M542.3 383.8L544.5 380.0L546.6 375.8L548.6 371.4L550.4 366.6L552.0 361.6L553.5 356.3L554.9 350.8L556.0 345.1L557.0 339.3L557.7 333.3L558.3 327.3L558.7 321.1L558.9 314.9L558.9 308.7L558.7 302.5L558.3 296.3L557.7 290.3L557.0 284.3L556.0 278.5L554.9 272.8L553.5 267.3L552.0 262.0L550.4 257.0L548.6 252.2L546.6 247.8L544.5 243.6L542.3 239.8L540.0 236.3L537.5 233.2L535.0 230.5L532.4 228.2L529.7 226.2L527.0 224.7L524.2 223.7L521.4 223.0L518.6 222.8 M544.3 383.8L546.7 380.0L548.9 375.8L551.1 371.4L553.0 366.6L554.8 361.6L556.4 356.3L557.9 350.8L559.1 345.1L560.2 339.3L561.0 333.3L561.6 327.3L562.1 321.1L562.3 314.9L562.3 308.7L562.1 302.5L561.6 296.3L561.0 290.3L560.2 284.3L559.1 278.5L557.9 272.8L556.4 267.3L554.8 262.0L553.0 257.0L551.1 252.2L548.9 247.8L546.7 243.6L544.3 239.8L541.8 236.3L539.1 233.2L536.4 230.5L533.5 228.2L530.6 226.2L527.7 224.7L524.7 223.7L521.6 223.0L518.6 222.8 M546.2 383.8L548.8 380.0L551.2 375.8L553.5 371.4L555.6 366.6L557.5 361.6L559.3 356.3L560.8 350.8L562.1 345.1L563.3 339.3L564.2 333.3L564.9 327.3L565.3 321.1L565.5 314.9L565.5 308.7L565.3 302.5L564.9 296.3L564.2 290.3L563.3 284.3L562.1 278.5L560.8 272.8L559.3 267.3L557.5 262.0L555.6 257.0L553.5 252.2L551.2 247.8L548.8 243.6L546.2 239.8L543.5 236.3L540.6 233.2L537.7 230.5L534.7 228.2L531.5 226.2L528.4 224.7L525.1 223.7L521.9 223.0L518.6 222.8 M548.1 383.8L550.8 380.0L553.4 375.8L555.9 371.4L558.1 366.6L560.2 361.6L562.0 356.3L563.7 350.8L565.1 345.1L566.3 339.3L567.3 333.3L568.0 327.3L568.5 321.1L568.7 314.9L568.7 308.7L568.5 302.5L568.0 296.3L567.3 290.3L566.3 284.3L565.1 278.5L563.7 272.8L562.0 267.3L560.2 262.0L558.1 257.0L555.9 252.2L553.4 247.8L550.8 243.6L548.1 239.8L545.2 236.3L542.1 233.2L539.0 230.5L535.8 228.2L532.4 226.2L529.0 224.7L525.6 223.7L522.1 223.0L518.6 222.8 M549.9 383.8L552.8 380.0L555.6 375.8L558.2 371.4L560.6 366.6L562.7 361.6L564.7 356.3L566.5 350.8L568.0 345.1L569.2 339.3L570.3 333.3L571.0 327.3L571.6 321.1L571.8 314.9L571.8 308.7L571.6 302.5L571.0 296.3L570.3 290.3L569.2 284.3L568.0 278.5L566.5 272.8L564.7 267.3L562.7 262.0L560.6 257.0L558.2 252.2L555.6 247.8L552.8 243.6L549.9 239.8L546.8 236.3L543.6 233.2L540.3 230.5L536.8 228.2L533.3 226.2L529.7 224.7L526.0 223.7L522.3 223.0L518.6 222.8 M551.7 383.8L554.8 380.0L557.7 375.8L560.4 371.4L562.9 366.6L565.2 361.6L567.3 356.3L569.2 350.8L570.8 345.1L572.1 339.3L573.2 333.3L574.0 327.3L574.5 321.1L574.8 314.9L574.8 308.7L574.5 302.5L574.0 296.3L573.2 290.3L572.1 284.3L570.8 278.5L569.2 272.8L567.3 267.3L565.2 262.0L562.9 257.0L560.4 252.2L557.7 247.8L554.8 243.6L551.7 239.8L548.4 236.3L545.0 233.2L541.5 230.5L537.8 228.2L534.1 226.2L530.3 224.7L526.4 223.7L522.5 223.0L518.6 222.8 M553.4 383.8L556.6 380.0L559.7 375.8L562.6 371.4L565.2 366.6L567.6 361.6L569.8 356.3L571.8 350.8L573.4 345.1L574.9 339.3L576.0 333.3L576.8 327.3L577.4 321.1L577.7 314.9L577.7 308.7L577.4 302.5L576.8 296.3L576.0 290.3L574.9 284.3L573.4 278.5L571.8 272.8L569.8 267.3L567.6 262.0L565.2 257.0L562.6 252.2L559.7 247.8L556.6 243.6L553.4 239.8L549.9 236.3L546.4 233.2L542.7 230.5L538.8 228.2L534.9 226.2L530.9 224.7L526.8 223.7L522.7 223.0L518.6 222.8 M555.0 383.8L558.4 380.0L561.6 375.8L564.6 371.4L567.4 366.6L569.9 361.6L572.2 356.3L574.3 350.8L576.0 345.1L577.5 339.3L578.7 333.3L579.6 327.3L580.2 321.1L580.5 314.9L580.5 308.7L580.2 302.5L579.6 296.3L578.7 290.3L577.5 284.3L576.0 278.5L574.3 272.8L572.2 267.3L569.9 262.0L567.4 257.0L564.6 252.2L561.6 247.8L558.4 243.6L555.0 239.8L551.4 236.3L547.7 233.2L543.8 230.5L539.8 228.2L535.7 226.2L531.5 224.7L527.2 223.7L522.9 223.0L518.6 222.8 M556.6 383.8L560.1 380.0L563.5 375.8L566.6 371.4L569.5 366.6L572.2 361.6L574.6 356.3L576.7 350.8L578.5 345.1L580.0 339.3L581.3 333.3L582.2 327.3L582.9 321.1L583.2 314.9L583.2 308.7L582.9 302.5L582.2 296.3L581.3 290.3L580.0 284.3L578.5 278.5L576.7 272.8L574.6 267.3L572.2 262.0L569.5 257.0L566.6 252.2L563.5 247.8L560.1 243.6L556.6 239.8L552.8 236.3L548.9 233.2L544.9 230.5L540.7 228.2L536.4 226.2L532.0 224.7L527.6 223.7L523.1 223.0L518.6 222.8 M558.1 383.8L561.8 380.0L565.3 375.8L568.5 371.4L571.5 366.6L574.3 361.6L576.8 356.3L579.0 350.8L580.9 345.1L582.5 339.3L583.8 333.3L584.7 327.3L585.4 321.1L585.7 314.9L585.7 308.7L585.4 302.5L584.7 296.3L583.8 290.3L582.5 284.3L580.9 278.5L579.0 272.8L576.8 267.3L574.3 262.0L571.5 257.0L568.5 252.2L565.3 247.8L561.8 243.6L558.1 239.8L554.2 236.3L550.1 233.2L545.9 230.5L541.6 228.2L537.1 226.2L532.6 224.7L527.9 223.7L523.3 223.0L518.6 222.8 M559.5 383.8L563.3 380.0L567.0 375.8L570.3 371.4L573.4 366.6L576.3 361.6L578.9 356.3L581.2 350.8L583.1 345.1L584.8 339.3L586.1 333.3L587.1 327.3L587.8 321.1L588.2 314.9L588.2 308.7L587.8 302.5L587.1 296.3L586.1 290.3L584.8 284.3L583.1 278.5L581.2 272.8L578.9 267.3L576.3 262.0L573.4 257.0L570.3 252.2L567.0 247.8L563.3 243.6L559.5 239.8L555.5 236.3L551.3 233.2L546.9 230.5L542.4 228.2L537.8 226.2L533.1 224.7L528.3 223.7L523.5 223.0L518.6 222.8 M560.9 383.8L564.8 380.0L568.6 375.8L572.0 371.4L575.3 366.6L578.2 361.6L580.9 356.3L583.2 350.8L585.3 345.1L587.0 339.3L588.4 333.3L589.4 327.3L590.1 321.1L590.5 314.9L590.5 308.7L590.1 302.5L589.4 296.3L588.4 290.3L587.0 284.3L585.3 278.5L583.2 272.8L580.9 267.3L578.2 262.0L575.3 257.0L572.0 252.2L568.6 247.8L564.8 243.6L560.9 239.8L556.7 236.3L552.4 233.2L547.8 230.5L543.2 228.2L538.4 226.2L533.6 224.7L528.6 223.7L523.6 223.0L518.6 222.8 M562.1 383.8L566.2 380.0L570.1 375.8L573.7 371.4L577.0 366.6L580.0 361.6L582.8 356.3L585.2 350.8L587.3 345.1L589.1 339.3L590.5 333.3L591.6 327.3L592.3 321.1L592.6 314.9L592.6 308.7L592.3 302.5L591.6 296.3L590.5 290.3L589.1 284.3L587.3 278.5L585.2 272.8L582.8 267.3L580.0 262.0L577.0 257.0L573.7 252.2L570.1 247.8L566.2 243.6L562.1 239.8L557.9 236.3L553.4 233.2L548.7 230.5L543.9 228.2L539.0 226.2L534.0 224.7L528.9 223.7L523.8 223.0L518.6 222.8 M563.3 383.8L567.5 380.0L571.5 375.8L575.2 371.4L578.6 366.6L581.7 361.6L584.5 356.3L587.0 350.8L589.2 345.1L591.0 339.3L592.5 333.3L593.6 327.3L594.3 321.1L594.7 314.9L594.7 308.7L594.3 302.5L593.6 296.3L592.5 290.3L591.0 284.3L589.2 278.5L587.0 272.8L584.5 267.3L581.7 262.0L578.6 257.0L575.2 252.2L571.5 247.8L567.5 243.6L563.3 239.8L558.9 236.3L554.3 233.2L549.6 230.5L544.6 228.2L539.6 226.2L534.4 224.7L529.2 223.7L523.9 223.0L518.6 222.8 M564.5 383.8L568.8 380.0L572.8 375.8L576.6 371.4L580.1 366.6L583.3 361.6L586.2 356.3L588.7 350.8L590.9 345.1L592.8 339.3L594.3 333.3L595.4 327.3L596.2 321.1L596.6 314.9L596.6 308.7L596.2 302.5L595.4 296.3L594.3 290.3L592.8 284.3L590.9 278.5L588.7 272.8L586.2 267.3L583.3 262.0L580.1 257.0L576.6 252.2L572.8 247.8L568.8 243.6L564.5 239.8L559.9 236.3L555.2 233.2L550.3 230.5L545.3 228.2L540.1 226.2L534.8 224.7L529.5 223.7L524.0 223.0L518.6 222.8 M565.5 383.8L569.9 380.0L574.0 375.8L577.9 371.4L581.5 366.6L584.7 361.6L587.7 356.3L590.3 350.8L592.6 345.1L594.5 339.3L596.0 333.3L597.2 327.3L598.0 321.1L598.3 314.9L598.3 308.7L598.0 302.5L597.2 296.3L596.0 290.3L594.5 284.3L592.6 278.5L590.3 272.8L587.7 267.3L584.7 262.0L581.5 257.0L577.9 252.2L574.0 247.8L569.9 243.6L565.5 239.8L560.9 236.3L556.1 233.2L551.1 230.5L545.9 228.2L540.6 226.2L535.2 224.7L529.7 223.7L524.2 223.0L518.6 222.8 M566.4 383.8L570.9 380.0L575.1 375.8L579.1 371.4L582.7 366.6L586.1 361.6L589.1 356.3L591.8 350.8L594.1 345.1L596.0 339.3L597.6 333.3L598.8 327.3L599.6 321.1L600.0 314.9L600.0 308.7L599.6 302.5L598.8 296.3L597.6 290.3L596.0 284.3L594.1 278.5L591.8 272.8L589.1 267.3L586.1 262.0L582.7 257.0L579.1 252.2L575.1 247.8L570.9 243.6L566.4 239.8L561.7 236.3L556.8 233.2L551.7 230.5L546.4 228.2L541.0 226.2L535.5 224.7L529.9 223.7L524.3 223.0L518.6 222.8 M567.3 383.8L571.9 380.0L576.2 375.8L580.2 371.4L583.9 366.6L587.3 361.6L590.4 356.3L593.1 350.8L595.4 345.1L597.4 339.3L599.0 333.3L600.2 327.3L601.0 321.1L601.4 314.9L601.4 308.7L601.0 302.5L600.2 296.3L599.0 290.3L597.4 284.3L595.4 278.5L593.1 272.8L590.4 267.3L587.3 262.0L583.9 257.0L580.2 252.2L576.2 247.8L571.9 243.6L567.3 239.8L562.5 236.3L557.5 233.2L552.3 230.5L546.9 228.2L541.4 226.2L535.8 224.7L530.1 223.7L524.4 223.0L518.6 222.8 M568.1 383.8L572.7 380.0L577.1 375.8L581.2 371.4L584.9 366.6L588.4 361.6L591.5 356.3L594.3 350.8L596.6 345.1L598.7 339.3L600.3 333.3L601.5 327.3L602.3 321.1L602.7 314.9L602.7 308.7L602.3 302.5L601.5 296.3L600.3 290.3L598.7 284.3L596.6 278.5L594.3 272.8L591.5 267.3L588.4 262.0L584.9 257.0L581.2 252.2L577.1 247.8L572.7 243.6L568.1 239.8L563.2 236.3L558.1 233.2L552.8 230.5L547.4 228.2L541.8 226.2L536.1 224.7L530.3 223.7L524.5 223.0L518.6 222.8 M568.8 383.8L573.5 380.0L577.9 375.8L582.0 371.4L585.8 366.6L589.3 361.6L592.5 356.3L595.3 350.8L597.7 345.1L599.8 339.3L601.4 333.3L602.6 327.3L603.5 321.1L603.9 314.9L603.9 308.7L603.5 302.5L602.6 296.3L601.4 290.3L599.8 284.3L597.7 278.5L595.3 272.8L592.5 267.3L589.3 262.0L585.8 257.0L582.0 252.2L577.9 247.8L573.5 243.6L568.8 239.8L563.8 236.3L558.7 233.2L553.3 230.5L547.8 228.2L542.1 226.2L536.3 224.7L530.5 223.7L524.6 223.0L518.6 222.8 M569.3 383.8L574.1 380.0L578.6 375.8L582.8 371.4L586.6 366.6L590.2 361.6L593.4 356.3L596.2 350.8L598.7 345.1L600.7 339.3L602.4 333.3L603.6 327.3L604.5 321.1L604.9 314.9L604.9 308.7L604.5 302.5L603.6 296.3L602.4 290.3L600.7 284.3L598.7 278.5L596.2 272.8L593.4 267.3L590.2 262.0L586.6 257.0L582.8 252.2L578.6 247.8L574.1 243.6L569.3 239.8L564.4 236.3L559.1 233.2L553.7 230.5L548.1 228.2L542.4 226.2L536.6 224.7L530.6 223.7L524.6 223.0L518.6 222.8 M569.8 383.8L574.6 380.0L579.2 375.8L583.4 371.4L587.3 366.6L590.9 361.6L594.1 356.3L597.0 350.8L599.4 345.1L601.5 339.3L603.2 333.3L604.5 327.3L605.3 321.1L605.7 314.9L605.7 308.7L605.3 302.5L604.5 296.3L603.2 290.3L601.5 284.3L599.4 278.5L597.0 272.8L594.1 267.3L590.9 262.0L587.3 257.0L583.4 252.2L579.2 247.8L574.6 243.6L569.8 239.8L564.8 236.3L559.5 233.2L554.1 230.5L548.4 228.2L542.6 226.2L536.7 224.7L530.7 223.7L524.7 223.0L518.6 222.8 M570.2 383.8L575.1 380.0L579.6 375.8L583.9 371.4L587.8 366.6L591.4 361.6L594.7 356.3L597.6 350.8L600.1 345.1L602.2 339.3L603.9 333.3L605.1 327.3L606.0 321.1L606.4 314.9L606.4 308.7L606.0 302.5L605.1 296.3L603.9 290.3L602.2 284.3L600.1 278.5L597.6 272.8L594.7 267.3L591.4 262.0L587.8 257.0L583.9 252.2L579.6 247.8L575.1 243.6L570.2 239.8L565.2 236.3L559.9 233.2L554.3 230.5L548.7 228.2L542.8 226.2L536.9 224.7L530.8 223.7L524.7 223.0L518.6 222.8 M570.6 383.8L575.4 380.0L580.0 375.8L584.3 371.4L588.3 366.6L591.9 361.6L595.1 356.3L598.0 350.8L600.6 345.1L602.7 339.3L604.4 333.3L605.6 327.3L606.5 321.1L606.9 314.9L606.9 308.7L606.5 302.5L605.6 296.3L604.4 290.3L602.7 284.3L600.6 278.5L598.0 272.8L595.1 267.3L591.9 262.0L588.3 257.0L584.3 252.2L580.0 247.8L575.4 243.6L570.6 239.8L565.4 236.3L560.1 233.2L554.6 230.5L548.8 228.2L543.0 226.2L537.0 224.7L530.9 223.7L524.8 223.0L518.6 222.8 M570.8 383.8L575.7 380.0L580.3 375.8L584.6 371.4L588.5 366.6L592.2 361.6L595.5 356.3L598.4 350.8L600.9 345.1L603.0 339.3L604.7 333.3L606.0 327.3L606.9 321.1L607.3 314.9L607.3 308.7L606.9 302.5L606.0 296.3L604.7 290.3L603.0 284.3L600.9 278.5L598.4 272.8L595.5 267.3L592.2 262.0L588.5 257.0L584.6 252.2L580.3 247.8L575.7 243.6L570.8 239.8L565.6 236.3L560.3 233.2L554.7 230.5L549.0 228.2L543.1 226.2L537.1 224.7L531.0 223.7L524.8 223.0L518.6 222.8 M570.9 383.8L575.8 380.0L580.4 375.8L584.7 371.4L588.7 366.6L592.3 361.6L595.6 356.3L598.6 350.8L601.1 345.1L603.2 339.3L604.9 333.3L606.2 327.3L607.1 321.1L607.5 314.9L607.5 308.7L607.1 302.5L606.2 296.3L604.9 290.3L603.2 284.3L601.1 278.5L598.6 272.8L595.6 267.3L592.3 262.0L588.7 257.0L584.7 252.2L580.4 247.8L575.8 243.6L570.9 239.8L565.7 236.3L560.4 233.2L554.8 230.5L549.0 228.2L543.1 226.2L537.1 224.7L531.0 223.7L524.8 223.0L518.6 222.8 M570.9 383.8L575.8 380.0L580.4 375.8L584.7 371.4L588.7 366.6L592.4 361.6L595.7 356.3L595.7 267.3L592.4 262.0L588.7 257.0L584.7 252.2L580.4 247.8L575.8 243.6L570.9 239.8L565.8 236.3L560.4 233.2L554.8 230.5L549.0 228.2L543.1 226.2L537.1 224.7L531.0 223.7L524.8 223.0L518.6 222.8" stroke="#9890a8" stroke-width="0.6" fill="none"/></g><circle cx="518.6" cy="311.8" r="69.9" fill="none" stroke="#9a92aa" stroke-width="0.9"/></svg>
<div class="t" style="left:143.9px;top:89.12px;font-size:7.4px;color:#555;transform:scaleX(0.994);">Click on a face to display grid.&nbsp; Ctrl+click to select additional faces.</div>
<div class="t" style="left:427.6px;top:89.12px;font-size:7.4px;color:#555;transform:scaleX(0.994);">Click on a face to display grid.&nbsp; Ctrl+click to select additional faces.</div>
<svg style="left:0px;top:0px" width="768" height="409" viewBox="0 0 768 409"><rect x="166.0" y="189.79999999999998" width="10.5" height="11.5" fill="#f2f4f2" opacity=".9"/><circle cx="171.3" cy="195.6" r="2.1" fill="#1e9a3a"/><path d="M164.5 195.6 l2.6 -2.4 v4.8z" fill="#e02828"/><path d="M179.3 195.6 l2 -1.6 h3.5 l2 1.6 l-2 1.6 h-3.5z" fill="#e02828"/><text x="189.10000000000002" y="198.0" font-size="6.5" fill="#e02828" font-family="Liberation Sans" font-weight="bold">x</text><path d="M171.3 176.1 l-1.6 2.5 l1 .5 v8 l-1 .5 l1.6 2.5 l1.6 -2.5 l-1 -.5 v-8 l1 -.5z" fill="#2838b8"/><text x="169.3" y="175.6" font-size="6" fill="#2838b8" font-family="Liberation Sans" font-weight="bold">z</text><path d="M169.3 202.6 h4" stroke="#2838b8" stroke-width="1"/><rect x="447.2" y="190.39999999999998" width="10.5" height="11.5" fill="#f2f4f2" opacity=".9"/><circle cx="452.5" cy="196.2" r="2.1" fill="#1e9a3a"/><path d="M445.7 196.2 l2.6 -2.4 v4.8z" fill="#e02828"/><path d="M460.5 196.2 l2 -1.6 h3.5 l2 1.6 l-2 1.6 h-3.5z" fill="#e02828"/><text x="470.3" y="198.6" font-size="6.5" fill="#e02828" font-family="Liberation Sans" font-weight="bold">x</text><path d="M452.5 176.7 l-1.6 2.5 l1 .5 v8 l-1 .5 l1.6 2.5 l1.6 -2.5 l-1 -.5 v-8 l1 -.5z" fill="#2838b8"/><text x="450.5" y="176.2" font-size="6" fill="#2838b8" font-family="Liberation Sans" font-weight="bold">z</text><path d="M450.5 203.2 h4" stroke="#2838b8" stroke-width="1"/><path d="M373.7 212.9 H412" stroke="#ffffff" stroke-width="3.6" stroke-linecap="round" opacity=".75"/><path d="M374.7 212.9 H411" stroke="#6262b8" stroke-width="1.7"/><rect x="387.29999999999995" y="215.1" width="12.2" height="7" rx="1.5" fill="#fff" opacity=".45"/><text x="393.4" y="220.70000000000002" font-size="6.2" fill="#5a58a8" font-family="Liberation Sans" text-anchor="middle" text-rendering="geometricPrecision">4mm</text><path d="M380 360 H407" stroke="#ffffff" stroke-width="3.6" stroke-linecap="round" opacity=".75"/><path d="M381 360 H406" stroke="#6262b8" stroke-width="1.7"/><rect x="385.7" y="362.2" width="15.6" height="7" rx="1.5" fill="#fff" opacity=".45"/><text x="393.5" y="367.8" font-size="6.2" fill="#5a58a8" font-family="Liberation Sans" text-anchor="middle" text-rendering="geometricPrecision">10mm</text><path d="M728 359.8 H751" stroke="#ffffff" stroke-width="3.6" stroke-linecap="round" opacity=".75"/><path d="M729 359.8 H750" stroke="#6262b8" stroke-width="1.7"/><rect x="731.7" y="362.0" width="15.6" height="7" rx="1.5" fill="#fff" opacity=".45"/><text x="739.5" y="367.6" font-size="6.2" fill="#5a58a8" font-family="Liberation Sans" text-anchor="middle" text-rendering="geometricPrecision">10mm</text><path d="M275.5 302 V266" stroke="#7088dc" stroke-width=".9"/><path d="M275.5 277 l-1.5 5.5 h3z" fill="#7088dc"/><path d="M275.5 302 H302" stroke="#e04040" stroke-width="1"/><path d="M298 302 l-6 -1.6 v3.2z" fill="#e04040"/><path d="M302 302 H311" stroke="#e08080" stroke-width=".6"/><path d="M518.6 311 V274" stroke="#7088dc" stroke-width=".9"/><path d="M518.6 286 l-1.5 5.5 h3z" fill="#7088dc"/><path d="M518.6 311 H544.5" stroke="#30a050" stroke-width="1"/><path d="M541 311 l-6 -1.6 v3.2z" fill="#30a050"/><path d="M544 311 H551" stroke="#80c090" stroke-width=".6"/><circle cx="518.6" cy="311" r="1.8" fill="#e02020"/></svg>
<div class="r" style="left:594.3px;top:91.4px;width:167px;height:108.5px;background:#fff;border:1px solid #6a6478"></div>
<div class="t" style="left:597.7px;top:95.57px;font-size:7px;color:#aaa;transform:scaleX(0.884);">Properties</div>
<div class="r" style="left:595.3px;top:102.9px;width:12.3px;height:71px;background:#e0e0e0"></div>
<div class="r" style="left:607.6px;top:102.9px;width:153px;height:9.1px;background:#e6e6e6"></div>
<svg style="left:0px;top:0px" width="768" height="200" viewBox="0 0 768 200"><path d="M597.5 106 l2.2 2.2 l2.2 -2.2" stroke="#444" stroke-width="1.1" fill="none"/><path d="M597.5 141.5 l2.2 2.2 l2.2 -2.2" stroke="#444" stroke-width="1.1" fill="none"/><path d="M597.5 150.5 l2.2 2.2 l2.2 -2.2" stroke="#444" stroke-width="1.1" fill="none"/><rect x="753" y="131" width="6" height="6" fill="#e4e4e4" stroke="#aaa" stroke-width=".4"/><path d="M754.5 133.5 h3 l-1.5 1.5z" fill="#222"/></svg>
<div class="t" style="left:609.9px;top:103.78px;font-size:7.6px;color:#111;font-weight:bold;transform:scaleX(0.853);">Appearance</div>
<div class="t" style="left:609.9px;top:113.17px;font-size:7px;color:#aaa;transform:scaleX(0.783);">Color</div>
<div class="r" style="left:682px;top:113.2px;width:11.3px;height:6.4px;background:#9a90b0;border:.8px solid #555"></div>
<div class="t" style="left:697.9px;top:113.17px;font-size:7px;color:#999;transform:scaleX(0.848);">ARGB: 255, 159, 143, 1</div>
<div class="t" style="left:609.9px;top:121.67px;font-size:7px;color:#222;transform:scaleX(0.778);">Style</div>
<div class="t" style="left:683.2px;top:121.67px;font-size:7px;color:#222;transform:scaleX(0.826);">By Color, By Style</div>
<div class="r" style="left:607.6px;top:130.4px;width:73.3px;height:7.6px;background:#1874d2"></div>
<div class="t" style="left:609.9px;top:130.87px;font-size:7px;color:#fff;transform:scaleX(0.847);">Tessellation Quality Level</div>
<div class="t" style="left:683.2px;top:130.87px;font-size:7px;color:#222;transform:scaleX(0.825);">Custom</div>
<div class="t" style="left:609.9px;top:139.48px;font-size:7.6px;color:#111;font-weight:bold;transform:scaleX(0.905);">Material</div>
<div class="t" style="left:609.9px;top:148.77px;font-size:7px;color:#222;transform:scaleX(0.793);">Material Nam</div>
<div class="t" style="left:621px;top:157.57px;font-size:7px;color:#999;transform:scaleX(0.791);">Fluid</div>
<div class="t" style="left:619px;top:167.17px;font-size:7px;color:#999;transform:scaleX(0.857);">Density</div>
<div class="r" style="left:597.8px;top:185px;width:32.2px;height:13.6px;background:#fff;border:.8px solid #888;border-bottom:none"></div>
<div class="t" style="left:600px;top:188.57px;font-size:7px;color:#444;transform:scaleX(0.862);">Properties</div>
<div class="t" style="left:633px;top:188.57px;font-size:7px;color:#444;transform:scaleX(0.886);">Lay</div>
<div class="r" style="left:642.8px;top:139.3px;width:118px;height:78px;background:#fff;border:.8px solid #8a8a8a"></div>
<div class="t" style="left:646px;top:140.87px;font-size:7.2px;color:#222;">1</div>
<div class="t" style="left:646px;top:149.47px;font-size:7.2px;color:#222;">2</div>
<div class="t" style="left:646px;top:156.97px;font-size:7.2px;color:#222;">3</div>
<div class="t" style="left:646px;top:164.07px;font-size:7.2px;color:#222;">4</div>
<div class="t" style="left:646px;top:171.07px;font-size:7.2px;color:#222;">5</div>
<div class="t" style="left:646px;top:178.17px;font-size:7.2px;color:#222;">6</div>
<div class="t" style="left:646px;top:185.37px;font-size:7.2px;color:#888;">7</div>
<div class="t" style="left:646px;top:193.07px;font-size:7.2px;color:#e06464;">8</div>
<div class="t" style="left:646px;top:200.47px;font-size:7.2px;color:#e06464;">9</div>
<div class="t" style="left:646px;top:207.47px;font-size:7.2px;color:#e06464;">10</div>
<div class="r" style="left:642.8px;top:212px;width:117px;height:100px;border:2px solid #ece838;background:#f0f0f0"></div>
<div class="r" style="left:645px;top:213.7px;width:113px;height:15px;background:#fff;border:.6px solid #999"></div>
<div class="r" style="left:645.3px;top:214.7px;width:112.7px;height:6.9px;background:#1070d0"></div>
<div class="t" style="left:647px;top:214.67px;font-size:7.2px;color:#fff;transform:scaleX(0.847);">Custom</div>
<div class="t" style="left:646px;top:235.27px;font-size:7.2px;color:#222;transform:scaleX(0.814);">Custom tessellation settings</div>
<div class="t" style="left:649px;top:249.47px;font-size:7.2px;color:#222;transform:scaleX(0.787);">Surface tolerance:</div>
<div class="r" style="left:704px;top:247.4px;width:50.3px;height:10.900000000000006px;background:#fff;border:.8px solid #a0a0a0"></div>
<div class="t" style="left:706px;top:249.47px;font-size:7.2px;color:#222;transform:scaleX(0.736);">0.5mm</div>
<div class="t" style="left:649px;top:264.17px;font-size:7.2px;color:#222;transform:scaleX(0.810);">Normal tolerance:</div>
<div class="r" style="left:704px;top:262.2px;width:50.3px;height:10.800000000000011px;background:#fff;border:.8px solid #a0a0a0"></div>
<div class="t" style="left:706px;top:264.17px;font-size:7.2px;color:#222;transform:scaleX(0.827);">10&#176;</div>
<div class="t" style="left:649px;top:278.27px;font-size:7.2px;color:#222;transform:scaleX(0.833);">Max edge length:</div>
<div class="r" style="left:704px;top:276.5px;width:50.3px;height:10.800000000000011px;background:#fff;border:.8px solid #4a90d8"></div>
<div class="r" style="left:705.5px;top:278.8px;width:11.5px;height:6.2px;background:#3070c8"></div>
<div class="t" style="left:706px;top:278.27px;font-size:7.2px;color:#fff;transform:scaleX(0.656);">2mm</div>
<div class="r" style="left:670px;top:296.3px;width:43px;height:11.7px;border-right:1.4px solid #333;border-bottom:1.4px solid #333"></div>
<div class="t" style="left:688px;top:298.47px;font-size:7.2px;color:#222;transform:scaleX(0.804);">Ok</div>
<div class="r" style="left:717px;top:296.3px;width:42px;height:11.7px;border-right:1.4px solid #333;border-bottom:1.4px solid #333"></div>
<div class="t" style="left:728px;top:298.47px;font-size:7.2px;color:#222;transform:scaleX(0.839);">Cancel</div>
<div class="r" style="left:137px;top:375px;width:631px;height:17px;background:#f8f8f8"></div>
<div class="r" style="left:136px;top:378px;width:48px;height:12.5px;background:#fff;border:.8px solid #888;border-bottom:none"></div>
<svg style="left:138px;top:379px" width="12" height="11" viewBox="0 0 12 11"><path d="M2 4 l4 -2 l4 2 v4 l-4 2 l-4 -2z" fill="#e0a860" stroke="#8a5a20" stroke-width=".8"/></svg>
<div class="t" style="left:150px;top:380.77px;font-size:7.2px;color:#444;transform:scaleX(0.787);">Design2*</div>
<div class="t" style="left:177px;top:380.38px;font-size:8px;color:#333;">&#215;</div>
<svg style="left:0px;top:0px" width="768" height="409" viewBox="0 0 768 409"><path d="M748.5 381.5 l-2.5 2.5 l2.5 2.5z" fill="#888"/><path d="M753 381.5 l2.5 2.5 l-2.5 2.5z" fill="#888"/><path d="M760.5 381.8 l4.5 4.5 M765 381.8 l-4.5 4.5" stroke="#444" stroke-width="1"/></svg>
<div class="r" style="left:0px;top:392px;width:768px;height:17px;background:#4a3766"></div>
<div class="t" style="left:5.2px;top:398.17px;font-size:7.2px;color:#e8e4f0;transform:scaleX(0.854);">Click on a face to display grid.&nbsp; Ctrl+click to select additional faces.</div>
<div class="r" style="left:462px;top:394px;width:1px;height:14px;background:#6a5a8a"></div>
<div class="r" style="left:522.8px;top:394px;width:1px;height:14px;background:#6a5a8a"></div>
<div class="t" style="left:559.3px;top:398.17px;font-size:7.2px;color:#e8e4f0;transform:scaleX(0.834);">1 Body</div>
<svg style="left:0px;top:0px" width="768" height="409" viewBox="0 0 768 409"><path d="M445.5 404.5 l3.5 -6 l3.5 6z" fill="#9a90b0"/><path d="M456.5 402 l1.5 -1.6 l1.5 1.6z" fill="#ccc"/><path d="M616.5 399.5 l2.2 -2.2 l2.2 2.2z M616.5 403 l2.2 2.2 l2.2 -2.2z" fill="#7a6a9a"/><path d="M626 397 v7.5 l2 -2 l1.5 3 l1.2 -.6 l-1.5 -2.8 h2.6z" fill="#f0f0f0"/><path d="M630.5 397.5 q4 -1 4 3 q0 3 -3 4" stroke="#5aa0f0" stroke-width="1.5" fill="none"/><path d="M640.5 397 v7.5 l2 -2 l1.5 3 l1.2 -.6 l-1.5 -2.8 h2.6z" fill="#f0f0f0"/><path d="M650.5 402 l1.7 -1.7 l1.7 1.7z" fill="#eee"/><rect x="659.5" y="398.3" width="8" height="6.8" fill="none" stroke="#6aaaf0" stroke-width="1" stroke-dasharray="1.6 1"/><path d="M670.8 402 l1.7 -1.7 l1.7 1.7z" fill="#eee"/><rect x="676.5" y="394" width=".8" height="14" fill="#7a6a9a"/><circle cx="683.5" cy="401" r="2.4" fill="#5aa0f0"/><path d="M679.5 401 h8 M683.5 397 v8" stroke="#5aa0f0" stroke-width="1.6"/><path d="M690.5 402 l1.7 -1.7 l1.7 1.7z" fill="#eee"/><path d="M699 401.5 h8.3 M703.1 397.3 v8.3" stroke="#8ac0f0" stroke-width="1.3"/><path d="M699 401.5 l1.5 -1.3 v2.6z M707.3 401.5 l-1.5 -1.3 v2.6z M703.1 397.3 l-1.3 1.5 h2.6z M703.1 405.6 l-1.3 -1.5 h2.6z" fill="#8ac0f0"/><circle cx="715.3" cy="400.3" r="3" fill="#f0f0f0" stroke="#8ac0f0" stroke-width=".8"/><path d="M717.5 402.5 l3 3" stroke="#8ac0f0" stroke-width="1.4"/><path d="M723.8 402 l1.7 -1.7 l1.7 1.7z" fill="#eee"/><path d="M740.6 398.9 l-6 4.5" stroke="#6ab0f0" stroke-width="2"/><path d="M732.3 404.6 l1.2 -4 l3 3z" fill="#6ab0f0"/><path d="M745.3 404.6 l7 -5" stroke="#8a7aa8" stroke-width="1.8"/><path d="M754.1 398.9 l-1.2 4 l-3 -3z" fill="#8a7aa8"/></svg>

</div></body></html>
